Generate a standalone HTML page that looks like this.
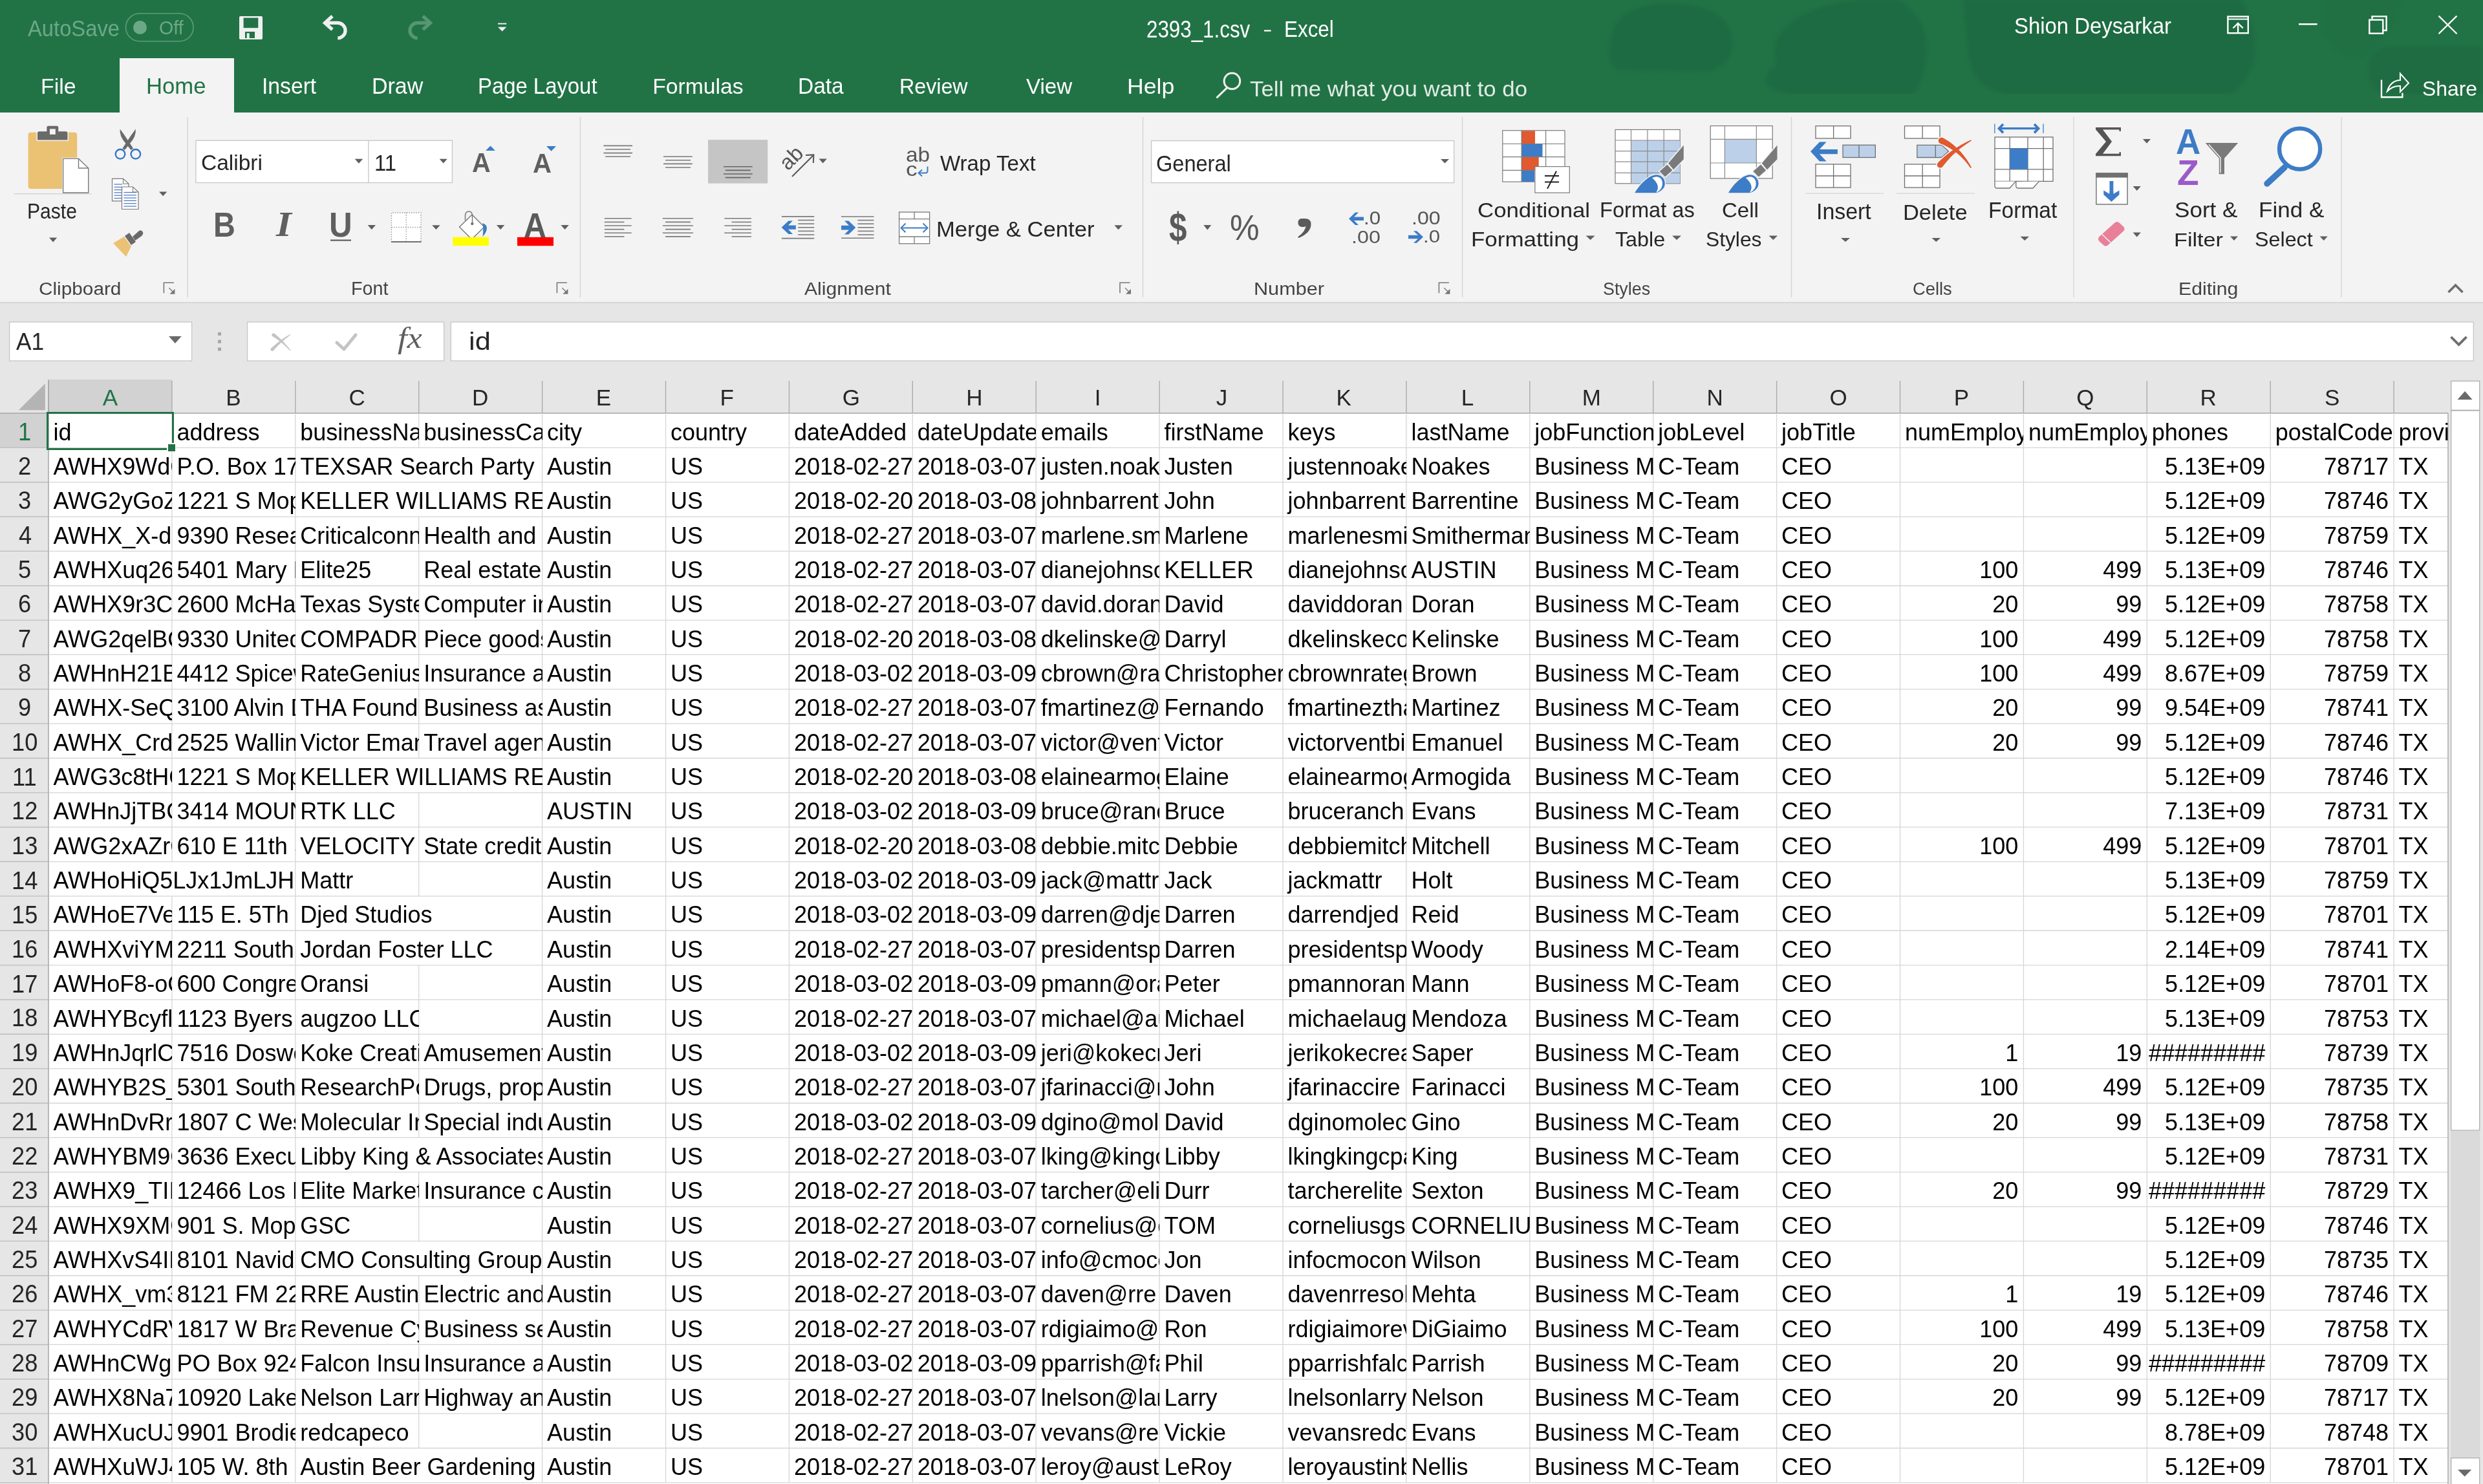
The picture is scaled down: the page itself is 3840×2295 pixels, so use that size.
<!DOCTYPE html>
<html><head><meta charset="utf-8"><style>
html,body{margin:0;padding:0;}
body{width:3840px;height:2295px;overflow:hidden;position:relative;background:#e6e6e6;font-family:'Liberation Sans', sans-serif;}
.t{position:absolute;white-space:nowrap;font-family:'Liberation Sans', sans-serif;}
.c{position:absolute;overflow:hidden;white-space:nowrap;font-size:36px;line-height:36px;color:#000;font-family:'Liberation Sans', sans-serif;}
svg{position:absolute;left:0;top:0;}
.rn{position:absolute;right:8px;}
.ln{position:absolute;left:6.5px;}
</style></head><body>
<svg width="3840" height="2295" viewBox="0 0 3840 2295">
<defs><filter id="blur" x="-50%" y="-50%" width="200%" height="200%"><feGaussianBlur stdDeviation="2.5"/></filter></defs>
<rect x="0.00" y="0.00" width="3840.00" height="174.00" fill="#217346" /><g filter="url(#blur)" fill="#1e663f" opacity="0.6"><path d="M2500,108 L2491,96 Q2486,62 2500,36 Q2520,6 2585,6 Q2665,8 2677,52 Q2686,96 2645,110 Z"/><path d="M2732,128 Q2729,110 2748,101 Q2736,70 2760,44 Q2792,10 2870,0 H2935 Q2980,28 2979,74 Q2978,122 2958,146 H2775 Q2738,142 2732,128 Z"/><path d="M3036,0 H3466 Q3490,40 3487,89 Q3470,140 3443,146 H3110 Q3050,140 3044,80 Q3040,40 3036,0 Z"/><path d="M3592,0 H3711 Q3700,60 3650,88 Q3610,90 3595,50 Z" opacity="0.35"/><path d="M3663,110 Q3663,71.5 3700,71.5 H3840 V146 H3700 Q3663,146 3663,110 Z" opacity="0.8"/></g><rect x="0.00" y="146.00" width="3840.00" height="28.00" fill="#217346" /><rect x="185.00" y="90.00" width="177.00" height="84.00" fill="#f3f3f3" /><rect x="0.00" y="174.00" width="3840.00" height="294.00" fill="#f3f3f3" /><rect x="0.00" y="467.00" width="3840.00" height="2.00" fill="#d6d6d6" /><rect x="0.00" y="469.00" width="3840.00" height="1826.00" fill="#e6e6e6" /><rect x="194.5" y="20.8" width="104.5" height="43" rx="21.5" fill="none" stroke="#5e9c7a" stroke-width="1.6"/><circle cx="216.5" cy="42.5" r="10.5" fill="#6da886"/><path d="M370,27 q0,-2 2,-2 h32 q2,0 2,2 v32 q0,2 -2,2 h-32 q-2,0 -2,-2 z" fill="#f0f0f0"/><rect x="376.60" y="27.60" width="22.70" height="15.60" fill="#217346" /><rect x="379.00" y="49.00" width="15.00" height="10.00" fill="#217346" /><rect x="381.70" y="51.30" width="4.00" height="7.70" fill="#f0f0f0" /><path d="M503,35.4 H522.3 A11.75,11.75 0 0 1 522.3,58.9" fill="none" stroke="#f0f0f0" stroke-width="5.2"/><polyline points="514,25 502.5,35.4 514,45.8" fill="none" stroke="#f0f0f0" stroke-width="5.2"/><g opacity="0.9"><path d="M665,35.4 H645.7 A11.75,11.75 0 0 0 645.7,58.9" fill="none" stroke="#5c9b78" stroke-width="5.2"/><polyline points="654,25 665.5,35.4 654,45.8" fill="none" stroke="#5c9b78" stroke-width="5.2"/></g><rect x="770.00" y="35.70" width="13.30" height="1.90" fill="#f0f0f0" /><polygon points="770.00,41.70 783.30,41.70 776.65,48.40" fill="#f0f0f0"/><rect x="1955.00" y="46.40" width="10.60" height="2.20" fill="#ffffff" /><rect x="3445.4" y="25.6" width="31.4" height="25.6" fill="none" stroke="#fff" stroke-width="2.4"/><line x1="3445.00" y1="29.60" x2="3477.00" y2="29.60" stroke="#fff" stroke-width="2" /><line x1="3461.10" y1="36.00" x2="3461.10" y2="52.00" stroke="#fff" stroke-width="2.4" /><polyline points="3453.5,43.5 3461.1,36 3468.7,43.5" fill="none" stroke="#fff" stroke-width="2.4"/><line x1="3555.00" y1="37.40" x2="3583.60" y2="37.40" stroke="#fff" stroke-width="2.5" /><path d="M3668.5,29.5 V25.4 H3690.6 V47 H3685.6" fill="none" stroke="#fff" stroke-width="2.4"/><rect x="3664.3" y="30.7" width="21" height="21" fill="none" stroke="#fff" stroke-width="2.4"/><line x1="3771.50" y1="24.60" x2="3799.50" y2="52.20" stroke="#fff" stroke-width="2.3" /><line x1="3799.50" y1="24.60" x2="3771.50" y2="52.20" stroke="#fff" stroke-width="2.3" /><path d="M3683,123.4 V150.2 H3715.4 V143.7" fill="none" stroke="#fff" stroke-width="2.4"/><path d="M3692,141 C3695,130 3703,124 3712,124 V113.8 L3725,128.4 L3712,142 V133 C3704,132.5 3697,136 3692,141 Z" fill="none" stroke="#fff" stroke-width="2.1" stroke-linejoin="miter"/><circle cx="1905.4" cy="125.4" r="12.3" fill="none" stroke="#f0f0ea" stroke-width="3"/><line x1="1897.20" y1="136.10" x2="1881.40" y2="151.30" stroke="#f0f0ea" stroke-width="3" /><rect x="289.30" y="181.00" width="1.40" height="279.00" fill="#d4d4d4" /><rect x="896.70" y="181.00" width="1.40" height="279.00" fill="#d4d4d4" /><rect x="1766.80" y="181.00" width="1.40" height="279.00" fill="#d4d4d4" /><rect x="2260.90" y="181.00" width="1.40" height="279.00" fill="#d4d4d4" /><rect x="2769.80" y="181.00" width="1.40" height="279.00" fill="#d4d4d4" /><rect x="3206.30" y="181.00" width="1.40" height="279.00" fill="#d4d4d4" /><rect x="3620.30" y="181.00" width="1.40" height="279.00" fill="#d4d4d4" /><path d="M253.4,453.3 V437.3 H268.9" fill="none" stroke="#777" stroke-width="1.6"/><line x1="261.4" y1="445.3" x2="266.9" y2="450.8" stroke="#777" stroke-width="1.3"/><polygon points="270.4,446.8 270.4,454.8 262.4,454.8" fill="#777"/><path d="M861.4,453.3 V437.3 H876.9" fill="none" stroke="#777" stroke-width="1.6"/><line x1="869.4" y1="445.3" x2="874.9" y2="450.8" stroke="#777" stroke-width="1.3"/><polygon points="878.4,446.8 878.4,454.8 870.4,454.8" fill="#777"/><path d="M1732.0,453.3 V437.3 H1747.5" fill="none" stroke="#777" stroke-width="1.6"/><line x1="1740.0" y1="445.3" x2="1745.5" y2="450.8" stroke="#777" stroke-width="1.3"/><polygon points="1749.0,446.8 1749.0,454.8 1741.0,454.8" fill="#777"/><path d="M2225.4,453.3 V437.3 H2240.9" fill="none" stroke="#777" stroke-width="1.6"/><line x1="2233.4" y1="445.3" x2="2238.9" y2="450.8" stroke="#777" stroke-width="1.3"/><polygon points="2242.4,446.8 2242.4,454.8 2234.4,454.8" fill="#777"/><polyline points="3786.5,452 3797.5,441 3808.5,452" fill="none" stroke="#6e6e6e" stroke-width="3.6"/><rect x="43.6" y="204.8" width="75.6" height="87.1" rx="4" fill="#ebc174"/><path d="M57.2,217.2 V206 Q57.2,202.5 60.7,202.5 H71.6 V197 Q71.6,194 74.6,194 H88 Q91,194 91,197 V202.5 H101.7 Q105.2,202.5 105.2,206 V217.2 Z" fill="#6a6a6a" stroke="#f3f3f3" stroke-width="1.5"/><rect x="77.00" y="199.40" width="8.80" height="8.50" fill="#f3f3f3" /><path d="M96,243.8 H122 L138.3,259.4 V299.5 H96 Z" fill="#f3f3f3"/><path d="M97.6,245.4 H121.5 L136.7,260 V298 H97.6 Z" fill="#fff" stroke="#7a7a7a" stroke-width="1.4"/><path d="M121.5,245.4 V260 H136.7" fill="none" stroke="#7a7a7a" stroke-width="1.4"/><rect x="21.50" y="299.00" width="120.10" height="1.40" fill="#d2d2d2" /><polygon points="76.00,367.50 88.20,367.50 82.10,374.50" fill="#5f5f5f"/><path d="M185.6,199.5 Q184.5,211 194.5,222 L202.5,232 L206,229.5 L199.5,219.5 Q192,208 185.6,199.5 Z" fill="#6a6a6a"/><path d="M209.8,199.5 Q210.9,211 200.9,222 L192.9,232 L189.4,229.5 L195.9,219.5 Q203.4,208 209.8,199.5 Z" fill="#6a6a6a"/><circle cx="186" cy="238.3" r="7.3" fill="none" stroke="#2e73c4" stroke-width="2.3"/><circle cx="209.8" cy="238.3" r="7.3" fill="none" stroke="#2e73c4" stroke-width="2.3"/><path d="M173.5,276.3 H190.5 L199.0,284.3 V310.8 H173.5 Z" fill="#fff" stroke="#7a7a7a" stroke-width="1.2"/><path d="M190.5,276.3 V284.3 H199.0" fill="none" stroke="#7a7a7a" stroke-width="1.1"/><path d="M188.5,289 H205.5 L214.0,297 V323.5 H188.5 Z" fill="#fff" stroke="#7a7a7a" stroke-width="1.2"/><path d="M205.5,289 V297 H214.0" fill="none" stroke="#7a7a7a" stroke-width="1.1"/><line x1="176.50" y1="285.00" x2="189.00" y2="285.00" stroke="#4a72c0" stroke-width="1.2" /><line x1="176.50" y1="289.30" x2="188.00" y2="289.30" stroke="#4a72c0" stroke-width="1.2" /><line x1="176.50" y1="293.60" x2="188.00" y2="293.60" stroke="#4a72c0" stroke-width="1.2" /><line x1="176.50" y1="297.90" x2="188.00" y2="297.90" stroke="#4a72c0" stroke-width="1.2" /><line x1="176.50" y1="302.20" x2="188.00" y2="302.20" stroke="#4a72c0" stroke-width="1.2" /><line x1="176.50" y1="306.50" x2="188.00" y2="306.50" stroke="#4a72c0" stroke-width="1.2" /><line x1="191.50" y1="297.50" x2="211.00" y2="297.50" stroke="#4a72c0" stroke-width="1.2" /><line x1="191.50" y1="301.80" x2="211.00" y2="301.80" stroke="#4a72c0" stroke-width="1.2" /><line x1="191.50" y1="306.10" x2="211.00" y2="306.10" stroke="#4a72c0" stroke-width="1.2" /><line x1="191.50" y1="310.40" x2="211.00" y2="310.40" stroke="#4a72c0" stroke-width="1.2" /><line x1="191.50" y1="314.70" x2="211.00" y2="314.70" stroke="#4a72c0" stroke-width="1.2" /><line x1="191.50" y1="319.00" x2="211.00" y2="319.00" stroke="#4a72c0" stroke-width="1.2" /><polygon points="246.00,296.50 258.30,296.50 252.15,303.20" fill="#5f5f5f"/><path d="M175,376 L192,366 L203,381 L195,397 Z" fill="#ebc174"/><path d="M193,365 L200,360 L210,374 L203,379 Z" fill="#6a6a6a"/><path d="M205,366 L215,357 Q219,355 221,359 Q222,362 219,365 L209,372 Z" fill="#6a6a6a"/><rect x="302.9" y="217.3" width="396.5" height="65.2" fill="#fff" stroke="#c6c6c6" stroke-width="1.3"/><rect x="569.20" y="217.30" width="1.30" height="65.20" fill="#c6c6c6" /><polygon points="548.70,245.80 561.20,245.80 554.95,252.80" fill="#5f5f5f"/><polygon points="679.60,245.80 691.80,245.80 685.70,252.60" fill="#5f5f5f"/><polygon points="751.00,233.00 765.90,233.00 758.45,225.60" fill="#3d7cc6"/><polygon points="845.00,226.00 860.00,226.00 852.50,233.70" fill="#3d7cc6"/><rect x="511.00" y="370.50" width="32.00" height="2.20" fill="#5f5f5f" /><polygon points="568.60,348.00 581.00,348.00 574.80,355.00" fill="#5f5f5f"/><rect x="605.5" y="329" width="45.5" height="45" fill="#fff"/><g stroke="#8a8a8a" stroke-width="1.3" stroke-dasharray="1.3,2.3" fill="none"><path d="M605.5,374 V329 H651 V374"/><path d="M628.2,329 V374"/><path d="M605.5,351.5 H651"/></g><rect x="605.00" y="373.00" width="46.50" height="2.00" fill="#707070" /><polygon points="668.20,348.20 680.60,348.20 674.40,355.00" fill="#5f5f5f"/><path d="M710.5,351 L730,332 L749,351 L729.5,370 Z" fill="#fff" stroke="#7a7a7a" stroke-width="1.5" stroke-linejoin="round"/><path d="M719.5,341 V334 Q719.5,327 725,327 Q730.5,327 730.5,334 V345" fill="none" stroke="#7a7a7a" stroke-width="1.5"/><circle cx="730.3" cy="346" r="2.3" fill="#7a7a7a"/><path d="M746.3,344.9 Q754.5,347.5 752.6,355.5 Q751,361.5 746.3,365.8 Q748.2,355 746.3,344.9 Z" fill="#3d7cc6"/><rect x="700.20" y="366.70" width="55.80" height="13.30" fill="#ffff00" /><polygon points="767.90,348.00 780.30,348.00 774.10,355.00" fill="#5f5f5f"/><rect x="800.00" y="366.80" width="56.00" height="13.40" fill="#ff0000" /><polygon points="867.40,348.00 879.80,348.00 873.60,355.00" fill="#5f5f5f"/><line x1="933.40" y1="225.40" x2="978.10" y2="225.40" stroke="#7a7a7a" stroke-width="1.6" /><line x1="936.30" y1="231.00" x2="975.00" y2="231.00" stroke="#7a7a7a" stroke-width="1.6" /><line x1="933.40" y1="236.60" x2="978.10" y2="236.60" stroke="#7a7a7a" stroke-width="1.6" /><line x1="936.30" y1="242.20" x2="975.00" y2="242.20" stroke="#7a7a7a" stroke-width="1.6" /><line x1="1026.00" y1="242.20" x2="1070.80" y2="242.20" stroke="#7a7a7a" stroke-width="1.6" /><line x1="1029.00" y1="247.80" x2="1068.00" y2="247.80" stroke="#7a7a7a" stroke-width="1.6" /><line x1="1026.00" y1="253.40" x2="1070.80" y2="253.40" stroke="#7a7a7a" stroke-width="1.6" /><line x1="1029.00" y1="259.00" x2="1068.00" y2="259.00" stroke="#7a7a7a" stroke-width="1.6" /><rect x="1095.00" y="216.20" width="92.20" height="67.40" fill="#c5c5c5" /><line x1="1119.00" y1="257.80" x2="1163.70" y2="257.80" stroke="#666" stroke-width="1.6" /><line x1="1121.80" y1="263.40" x2="1160.80" y2="263.40" stroke="#666" stroke-width="1.6" /><line x1="1119.00" y1="269.00" x2="1163.70" y2="269.00" stroke="#666" stroke-width="1.6" /><line x1="1121.80" y1="274.60" x2="1160.80" y2="274.60" stroke="#666" stroke-width="1.6" /><line x1="1225.00" y1="273.00" x2="1257.00" y2="241.00" stroke="#555" stroke-width="2" /><polyline points="1246,240 1258.4,239.4 1257.8,252" fill="none" stroke="#555" stroke-width="2"/><polygon points="1266.50,245.60 1278.80,245.60 1272.65,252.50" fill="#5f5f5f"/><path d="M1434.5,257.5 V264 Q1434.5,267.5 1431,267.5 H1421" fill="none" stroke="#3d7cc6" stroke-width="2"/><polyline points="1426,262.5 1420.5,267.5 1426,272.5" fill="none" stroke="#3d7cc6" stroke-width="2"/><line x1="934.80" y1="337.80" x2="976.60" y2="337.80" stroke="#7a7a7a" stroke-width="1.6" /><line x1="1024.90" y1="337.80" x2="1072.00" y2="337.80" stroke="#7a7a7a" stroke-width="1.6" /><line x1="1120.30" y1="337.80" x2="1161.90" y2="337.80" stroke="#7a7a7a" stroke-width="1.6" /><line x1="934.80" y1="343.42" x2="965.40" y2="343.42" stroke="#7a7a7a" stroke-width="1.6" /><line x1="1029.00" y1="343.42" x2="1068.00" y2="343.42" stroke="#7a7a7a" stroke-width="1.6" /><line x1="1131.60" y1="343.42" x2="1161.90" y2="343.42" stroke="#7a7a7a" stroke-width="1.6" /><line x1="934.80" y1="349.04" x2="976.60" y2="349.04" stroke="#7a7a7a" stroke-width="1.6" /><line x1="1024.90" y1="349.04" x2="1072.00" y2="349.04" stroke="#7a7a7a" stroke-width="1.6" /><line x1="1120.30" y1="349.04" x2="1161.90" y2="349.04" stroke="#7a7a7a" stroke-width="1.6" /><line x1="934.80" y1="354.66" x2="965.40" y2="354.66" stroke="#7a7a7a" stroke-width="1.6" /><line x1="1029.00" y1="354.66" x2="1068.00" y2="354.66" stroke="#7a7a7a" stroke-width="1.6" /><line x1="1131.60" y1="354.66" x2="1161.90" y2="354.66" stroke="#7a7a7a" stroke-width="1.6" /><line x1="934.80" y1="360.28" x2="976.60" y2="360.28" stroke="#7a7a7a" stroke-width="1.6" /><line x1="1024.90" y1="360.28" x2="1072.00" y2="360.28" stroke="#7a7a7a" stroke-width="1.6" /><line x1="1120.30" y1="360.28" x2="1161.90" y2="360.28" stroke="#7a7a7a" stroke-width="1.6" /><line x1="934.80" y1="365.90" x2="965.40" y2="365.90" stroke="#7a7a7a" stroke-width="1.6" /><line x1="1029.00" y1="365.90" x2="1068.00" y2="365.90" stroke="#7a7a7a" stroke-width="1.6" /><line x1="1131.60" y1="365.90" x2="1161.90" y2="365.90" stroke="#7a7a7a" stroke-width="1.6" /><line x1="1208.90" y1="334.90" x2="1259.20" y2="334.90" stroke="#7a7a7a" stroke-width="1.6" /><line x1="1208.90" y1="368.60" x2="1259.20" y2="368.60" stroke="#7a7a7a" stroke-width="1.6" /><line x1="1234.20" y1="340.50" x2="1259.20" y2="340.50" stroke="#7a7a7a" stroke-width="1.6" /><line x1="1234.20" y1="346.13" x2="1259.20" y2="346.13" stroke="#7a7a7a" stroke-width="1.6" /><line x1="1234.20" y1="351.76" x2="1259.20" y2="351.76" stroke="#7a7a7a" stroke-width="1.6" /><line x1="1234.20" y1="357.39" x2="1259.20" y2="357.39" stroke="#7a7a7a" stroke-width="1.6" /><line x1="1234.20" y1="363.02" x2="1259.20" y2="363.02" stroke="#7a7a7a" stroke-width="1.6" /><polygon points="1208.6,351.7 1219.5,341.5 1226,341.5 1219,348.6 1230.8,348.6 1230.8,354.8 1219,354.8 1226,362 1219.5,362" fill="#3d7cc6"/><line x1="1301.00" y1="335.00" x2="1351.50" y2="335.00" stroke="#7a7a7a" stroke-width="1.6" /><line x1="1301.00" y1="368.30" x2="1351.50" y2="368.30" stroke="#7a7a7a" stroke-width="1.6" /><line x1="1326.50" y1="340.60" x2="1351.50" y2="340.60" stroke="#7a7a7a" stroke-width="1.6" /><line x1="1326.50" y1="346.20" x2="1351.50" y2="346.20" stroke="#7a7a7a" stroke-width="1.6" /><line x1="1326.50" y1="351.80" x2="1351.50" y2="351.80" stroke="#7a7a7a" stroke-width="1.6" /><line x1="1326.50" y1="357.40" x2="1351.50" y2="357.40" stroke="#7a7a7a" stroke-width="1.6" /><line x1="1326.50" y1="363.00" x2="1351.50" y2="363.00" stroke="#7a7a7a" stroke-width="1.6" /><polygon points="1323.3,352 1312.4,341.5 1306,341.5 1313,348.7 1301,348.7 1301,355.5 1313,355.5 1306,362.6 1312.4,362.6" fill="#3d7cc6"/><rect x="1390.6" y="328" width="47" height="48.8" fill="#fff" stroke="#7a7a7a" stroke-width="1.3"/><line x1="1390.60" y1="338.70" x2="1437.60" y2="338.70" stroke="#7a7a7a" stroke-width="1.3" /><line x1="1390.60" y1="366.00" x2="1437.60" y2="366.00" stroke="#7a7a7a" stroke-width="1.3" /><line x1="1414.00" y1="328.00" x2="1414.00" y2="338.70" stroke="#7a7a7a" stroke-width="1.3" /><line x1="1414.00" y1="366.00" x2="1414.00" y2="376.80" stroke="#7a7a7a" stroke-width="1.3" /><line x1="1394.00" y1="352.40" x2="1434.00" y2="352.40" stroke="#3d7cc6" stroke-width="2" /><polyline points="1400.5,345.5 1393.5,352.4 1400.5,359.3" fill="none" stroke="#3d7cc6" stroke-width="2"/><polyline points="1427.5,345.5 1434.5,352.4 1427.5,359.3" fill="none" stroke="#3d7cc6" stroke-width="2"/><polygon points="1723.30,348.30 1735.90,348.30 1729.60,355.20" fill="#5f5f5f"/><rect x="1780.6" y="217.6" width="468" height="65" fill="#fff" stroke="#c6c6c6" stroke-width="1.3"/><polygon points="2228.00,246.00 2241.00,246.00 2234.50,252.50" fill="#5f5f5f"/><polygon points="1861.30,348.00 1873.30,348.00 1867.30,355.40" fill="#5f5f5f"/><path d="M2013,338 Q2007.5,338 2007.5,344.5 Q2007.5,351 2014,351 Q2019,351 2019.5,349 Q2019,358 2007,366.5 L2008.5,368 Q2027.5,360 2027.5,346.5 Q2027.5,338 2018,338 Z" fill="#5a5a5a"/><polygon points="2086,338.2 2096,328.5 2101,328.5 2094,335.6 2109,335.6 2109,341 2094,341 2101,348 2096,348" fill="#3d7cc6"/><polygon points="2201,366.5 2191,357.2 2186,357.2 2193,363.8 2178,363.8 2178,369.2 2193,369.2 2186,375.7 2191,375.7" fill="#3d7cc6"/><rect x="2323.8" y="201.8" width="96.2" height="79.3" fill="#fff" stroke="#7a7a7a" stroke-width="1.2"/><rect x="2353.10" y="202.30" width="20.90" height="20.20" fill="#e0592f" /><rect x="2353.10" y="222.50" width="32.40" height="20.10" fill="#3d7cc6" /><rect x="2353.10" y="242.60" width="26.60" height="20.80" fill="#e0592f" /><rect x="2353.10" y="263.40" width="19.90" height="17.60" fill="#3d7cc6" /><line x1="2323.80" y1="222.50" x2="2420.00" y2="222.50" stroke="#7a7a7a" stroke-width="1.2" /><line x1="2323.80" y1="242.60" x2="2420.00" y2="242.60" stroke="#7a7a7a" stroke-width="1.2" /><line x1="2323.80" y1="263.40" x2="2420.00" y2="263.40" stroke="#7a7a7a" stroke-width="1.2" /><line x1="2353.10" y1="201.80" x2="2353.10" y2="281.10" stroke="#7a7a7a" stroke-width="1.2" /><line x1="2390.60" y1="201.80" x2="2390.60" y2="281.10" stroke="#7a7a7a" stroke-width="1.2" /><rect x="2373.9" y="257.6" width="53.4" height="40.5" fill="#fff" stroke="#7a7a7a" stroke-width="1.2"/><line x1="2389.00" y1="272.00" x2="2411.00" y2="272.00" stroke="#222" stroke-width="2" /><line x1="2389.00" y1="281.50" x2="2411.00" y2="281.50" stroke="#222" stroke-width="2" /><line x1="2407.00" y1="264.70" x2="2393.00" y2="291.90" stroke="#222" stroke-width="2" /><polygon points="2452.60,364.60 2466.60,364.60 2459.60,371.00" fill="#5f5f5f"/><rect x="2498" y="200.5" width="100.1" height="83.3" fill="#fff" stroke="#7a7a7a" stroke-width="1.2"/><rect x="2522.50" y="217.00" width="75.50" height="66.30" fill="#bcd1e9" /><line x1="2498.00" y1="217.00" x2="2598.10" y2="217.00" stroke="#8a8a8a" stroke-width="1.2" /><line x1="2498.00" y1="233.60" x2="2598.10" y2="233.60" stroke="#8a8a8a" stroke-width="1.2" /><line x1="2498.00" y1="250.20" x2="2598.10" y2="250.20" stroke="#8a8a8a" stroke-width="1.2" /><line x1="2498.00" y1="267.40" x2="2598.10" y2="267.40" stroke="#8a8a8a" stroke-width="1.2" /><line x1="2522.50" y1="200.50" x2="2522.50" y2="283.80" stroke="#8a8a8a" stroke-width="1.2" /><line x1="2547.90" y1="200.50" x2="2547.90" y2="283.80" stroke="#8a8a8a" stroke-width="1.2" /><line x1="2573.20" y1="200.50" x2="2573.20" y2="283.80" stroke="#8a8a8a" stroke-width="1.2" /><g transform="translate(0,0)"><path d="M2579,252.5 L2604.6,222.5 L2604.6,246.5 L2588,263.5 Z" fill="#7a7a7a" stroke="#f3f3f3" stroke-width="1.6"/><path d="M2565.5,265 L2578.5,253.5 L2587.5,263.5 L2575,274.5 Z" fill="#7a7a7a" stroke="#f3f3f3" stroke-width="1.6"/><path d="M2527,299 Q2536,283 2550,273.5 Q2566,264 2574,277 Q2580,292 2562,299 Z" fill="#3d7cc6" stroke="#f3f3f3" stroke-width="1.4"/><path d="M2555,275 Q2567,270 2570.5,280 Q2573,292 2561,298 Q2569,287 2555,275 Z" fill="#fff"/></g><polygon points="2586.00,364.60 2600.00,364.60 2593.00,371.00" fill="#5f5f5f"/><rect x="2645.2" y="194.6" width="96" height="81.3" fill="#fff" stroke="#7a7a7a" stroke-width="1.2"/><rect x="2667.40" y="215.40" width="48.90" height="36.60" fill="#bcd1e9" /><line x1="2645.20" y1="215.40" x2="2741.20" y2="215.40" stroke="#8a8a8a" stroke-width="1.2" /><line x1="2645.20" y1="252.00" x2="2741.20" y2="252.00" stroke="#8a8a8a" stroke-width="1.2" /><line x1="2667.40" y1="194.60" x2="2667.40" y2="275.90" stroke="#8a8a8a" stroke-width="1.2" /><line x1="2716.30" y1="194.60" x2="2716.30" y2="275.90" stroke="#8a8a8a" stroke-width="1.2" /><g transform="translate(144.7,0)"><path d="M2579,252.5 L2604.6,222.5 L2604.6,246.5 L2588,263.5 Z" fill="#7a7a7a" stroke="#f3f3f3" stroke-width="1.6"/><path d="M2565.5,265 L2578.5,253.5 L2587.5,263.5 L2575,274.5 Z" fill="#7a7a7a" stroke="#f3f3f3" stroke-width="1.6"/><path d="M2527,299 Q2536,283 2550,273.5 Q2566,264 2574,277 Q2580,292 2562,299 Z" fill="#3d7cc6" stroke="#f3f3f3" stroke-width="1.4"/><path d="M2555,275 Q2567,270 2570.5,280 Q2573,292 2561,298 Q2569,287 2555,275 Z" fill="#fff"/></g><polygon points="2735.60,364.60 2749.00,364.60 2742.30,371.00" fill="#5f5f5f"/><rect x="2808" y="194.8" width="54.00" height="19.20" fill="#fff" stroke="#6f6f6f" stroke-width="1.3"/><line x1="2835.60" y1="194.80" x2="2835.60" y2="214.00" stroke="#6f6f6f" stroke-width="1.3" /><rect x="2850" y="224.3" width="50.30" height="19.20" fill="#bcd1e9" stroke="#6f6f6f" stroke-width="1.3"/><line x1="2875.00" y1="224.30" x2="2875.00" y2="243.50" stroke="#6f6f6f" stroke-width="1.3" /><polygon points="2800,234.2 2814,219.6 2824.6,219.6 2814,231 2841.9,231 2841.9,238.2 2814,238.2 2824.6,249.5 2814,249.5" fill="#3d7cc6"/><rect x="2808" y="254" width="54.00" height="36.00" fill="#fff" stroke="#6f6f6f" stroke-width="1.3"/><line x1="2808.00" y1="272.00" x2="2862.00" y2="272.00" stroke="#6f6f6f" stroke-width="1.3" /><line x1="2835.60" y1="254.00" x2="2835.60" y2="290.00" stroke="#6f6f6f" stroke-width="1.3" /><rect x="2792.60" y="298.50" width="120.40" height="1.30" fill="#d6d6d6" /><polygon points="2847.00,368.00 2861.00,368.00 2854.00,374.00" fill="#5f5f5f"/><rect x="2945.5" y="194.8" width="54.50" height="19.20" fill="#fff" stroke="#6f6f6f" stroke-width="1.3"/><line x1="2973.20" y1="194.80" x2="2973.20" y2="214.00" stroke="#6f6f6f" stroke-width="1.3" /><path d="M2964.8,224.3 H3003 L3013.5,233.9 L3003,243.5 H2964.8 Z" fill="#bcd1e9" stroke="#6f6f6f" stroke-width="1.3"/><line x1="2993.30" y1="224.30" x2="2993.30" y2="243.50" stroke="#6f6f6f" stroke-width="1.3" /><rect x="2945.5" y="254" width="54.50" height="36.00" fill="#fff" stroke="#6f6f6f" stroke-width="1.3"/><line x1="2945.50" y1="272.00" x2="3000.00" y2="272.00" stroke="#6f6f6f" stroke-width="1.3" /><line x1="2973.20" y1="254.00" x2="2973.20" y2="290.00" stroke="#6f6f6f" stroke-width="1.3" /><path d="M3000.53,221.82 L3002.77,222.69 L3004.98,223.62 L3007.17,224.60 L3009.33,225.65 L3011.48,226.76 L3013.60,227.92 L3015.69,229.15 L3017.76,230.44 L3019.81,231.80 L3021.84,233.21 L3023.84,234.69 L3025.82,236.23 L3027.77,237.83 L3029.70,239.50 L3031.61,241.23 L3033.48,243.03 L3035.34,244.88 L3037.16,246.81 L3038.96,248.80 L3040.74,250.85 L3042.49,252.96 L3044.21,255.14 L3045.90,257.39 L3047.56,259.70 L3048.84,258.90 L3047.44,256.39 L3046.00,253.92 L3044.52,251.51 L3043.01,249.15 L3041.46,246.85 L3039.87,244.59 L3038.25,242.39 L3036.58,240.24 L3034.88,238.14 L3033.14,236.10 L3031.35,234.11 L3029.53,232.17 L3027.67,230.29 L3025.76,228.46 L3023.82,226.68 L3021.84,224.96 L3019.81,223.29 L3017.74,221.68 L3015.63,220.12 L3013.48,218.62 L3011.29,217.17 L3009.06,215.78 L3006.78,214.45 L3004.47,213.18 A4.75,4.75 0 0 0 3000.53,221.82 Z" fill="#f3f3f3" stroke="#f3f3f3" stroke-width="3" stroke-linejoin="round"/><path d="M3000.53,221.82 L3002.77,222.69 L3004.98,223.62 L3007.17,224.60 L3009.33,225.65 L3011.48,226.76 L3013.60,227.92 L3015.69,229.15 L3017.76,230.44 L3019.81,231.80 L3021.84,233.21 L3023.84,234.69 L3025.82,236.23 L3027.77,237.83 L3029.70,239.50 L3031.61,241.23 L3033.48,243.03 L3035.34,244.88 L3037.16,246.81 L3038.96,248.80 L3040.74,250.85 L3042.49,252.96 L3044.21,255.14 L3045.90,257.39 L3047.56,259.70 L3048.84,258.90 L3047.44,256.39 L3046.00,253.92 L3044.52,251.51 L3043.01,249.15 L3041.46,246.85 L3039.87,244.59 L3038.25,242.39 L3036.58,240.24 L3034.88,238.14 L3033.14,236.10 L3031.35,234.11 L3029.53,232.17 L3027.67,230.29 L3025.76,228.46 L3023.82,226.68 L3021.84,224.96 L3019.81,223.29 L3017.74,221.68 L3015.63,220.12 L3013.48,218.62 L3011.29,217.17 L3009.06,215.78 L3006.78,214.45 L3004.47,213.18 A4.75,4.75 0 0 0 3000.53,221.82 Z" fill="#e0592f"/><path d="M3004.12,258.07 L3005.59,256.12 L3007.08,254.19 L3008.62,252.28 L3010.18,250.40 L3011.79,248.54 L3013.42,246.70 L3015.09,244.88 L3016.80,243.09 L3018.54,241.32 L3020.32,239.58 L3022.13,237.86 L3023.98,236.16 L3025.86,234.48 L3027.78,232.83 L3029.74,231.21 L3031.73,229.60 L3033.76,228.02 L3035.82,226.47 L3037.92,224.94 L3040.05,223.44 L3042.22,221.96 L3044.43,220.50 L3046.67,219.07 L3048.95,217.66 L3048.25,216.34 L3045.79,217.46 L3043.37,218.61 L3040.96,219.79 L3038.59,221.01 L3036.24,222.25 L3033.92,223.53 L3031.63,224.84 L3029.36,226.17 L3027.12,227.54 L3024.91,228.95 L3022.73,230.38 L3020.57,231.84 L3018.44,233.34 L3016.34,234.87 L3014.27,236.43 L3012.22,238.02 L3010.20,239.64 L3008.22,241.30 L3006.25,242.99 L3004.32,244.71 L3002.42,246.47 L3000.54,248.25 L2998.69,250.08 L2996.88,251.93 A4.75,4.75 0 0 0 3004.12,258.07 Z" fill="#f3f3f3" stroke="#f3f3f3" stroke-width="3" stroke-linejoin="round"/><path d="M3004.12,258.07 L3005.59,256.12 L3007.08,254.19 L3008.62,252.28 L3010.18,250.40 L3011.79,248.54 L3013.42,246.70 L3015.09,244.88 L3016.80,243.09 L3018.54,241.32 L3020.32,239.58 L3022.13,237.86 L3023.98,236.16 L3025.86,234.48 L3027.78,232.83 L3029.74,231.21 L3031.73,229.60 L3033.76,228.02 L3035.82,226.47 L3037.92,224.94 L3040.05,223.44 L3042.22,221.96 L3044.43,220.50 L3046.67,219.07 L3048.95,217.66 L3048.25,216.34 L3045.79,217.46 L3043.37,218.61 L3040.96,219.79 L3038.59,221.01 L3036.24,222.25 L3033.92,223.53 L3031.63,224.84 L3029.36,226.17 L3027.12,227.54 L3024.91,228.95 L3022.73,230.38 L3020.57,231.84 L3018.44,233.34 L3016.34,234.87 L3014.27,236.43 L3012.22,238.02 L3010.20,239.64 L3008.22,241.30 L3006.25,242.99 L3004.32,244.71 L3002.42,246.47 L3000.54,248.25 L2998.69,250.08 L2996.88,251.93 A4.75,4.75 0 0 0 3004.12,258.07 Z" fill="#e0592f"/><path d="M3000.53,221.82 L3002.77,222.69 L3004.98,223.62 L3007.17,224.60 L3009.33,225.65 L3011.48,226.76 L3013.60,227.92 L3015.69,229.15 L3017.76,230.44 L3019.81,231.80 L3021.84,233.21 L3023.84,234.69 L3025.82,236.23 L3027.77,237.83 L3029.70,239.50 L3031.61,241.23 L3033.48,243.03 L3035.34,244.88 L3037.16,246.81 L3038.96,248.80 L3040.74,250.85 L3042.49,252.96 L3044.21,255.14 L3045.90,257.39 L3047.56,259.70 L3048.84,258.90 L3047.44,256.39 L3046.00,253.92 L3044.52,251.51 L3043.01,249.15 L3041.46,246.85 L3039.87,244.59 L3038.25,242.39 L3036.58,240.24 L3034.88,238.14 L3033.14,236.10 L3031.35,234.11 L3029.53,232.17 L3027.67,230.29 L3025.76,228.46 L3023.82,226.68 L3021.84,224.96 L3019.81,223.29 L3017.74,221.68 L3015.63,220.12 L3013.48,218.62 L3011.29,217.17 L3009.06,215.78 L3006.78,214.45 L3004.47,213.18 A4.75,4.75 0 0 0 3000.53,221.82 Z" fill="#e0592f"/><rect x="2933.00" y="298.50" width="121.00" height="1.30" fill="#d6d6d6" /><polygon points="2987.50,368.00 3001.00,368.00 2994.25,374.00" fill="#5f5f5f"/><line x1="3084.80" y1="191.40" x2="3084.80" y2="206.00" stroke="#3d7cc6" stroke-width="1.3" /><line x1="3160.00" y1="191.40" x2="3160.00" y2="206.00" stroke="#3d7cc6" stroke-width="1.3" /><line x1="3092.00" y1="198.70" x2="3152.00" y2="198.70" stroke="#3d7cc6" stroke-width="3.2" /><polyline points="3098,192 3091.5,198.7 3098,205.4" fill="none" stroke="#3d7cc6" stroke-width="3.8"/><polyline points="3146,192 3152.5,198.7 3146,205.4" fill="none" stroke="#3d7cc6" stroke-width="3.8"/><rect x="3085" y="212" width="90.00" height="68.40" fill="#fff" stroke="#6f6f6f" stroke-width="1.3"/><line x1="3085.00" y1="229.60" x2="3175.00" y2="229.60" stroke="#6f6f6f" stroke-width="1.3" /><line x1="3085.00" y1="261.80" x2="3175.00" y2="261.80" stroke="#6f6f6f" stroke-width="1.3" /><line x1="3108.20" y1="212.00" x2="3108.20" y2="280.40" stroke="#6f6f6f" stroke-width="1.3" /><line x1="3136.00" y1="212.00" x2="3136.00" y2="280.40" stroke="#6f6f6f" stroke-width="1.3" /><line x1="3160.20" y1="212.00" x2="3160.20" y2="280.40" stroke="#6f6f6f" stroke-width="1.3" /><rect x="3108.20" y="229.60" width="27.80" height="32.20" fill="#3d7cc6" /><path d="M3085,280.4 V288 Q3085,291 3088.5,291 H3108 L3117.2,280.6" fill="#fff" stroke="#6f6f6f" stroke-width="1.3"/><path d="M3117.8,281 V288 Q3118,291 3121.5,291 H3144 L3153.5,280.4" fill="#fff" stroke="#6f6f6f" stroke-width="1.3"/><polygon points="3124.50,365.70 3138.00,365.70 3131.25,372.00" fill="#5f5f5f"/><path d="M3241,197 H3280 V203 H3277.5 V200.5 H3252 L3266,219 L3252,237.8 H3277.5 V235.2 H3280 V241.3 H3241 V238 L3257,219 L3241,200.3 Z" fill="#555"/><polygon points="3313.90,214.90 3326.10,214.90 3320.00,221.70" fill="#5f5f5f"/><rect x="3241.9" y="268" width="48.2" height="48" fill="#fff" stroke="#6f6f6f" stroke-width="1.4"/><rect x="3241.20" y="267.30" width="49.60" height="7.30" fill="#707070" /><rect x="3262.50" y="280.00" width="5.80" height="20.00" fill="#3d7cc6" /><polygon points="3253.3,294.5 3262.5,300 3262.5,296 3268.3,296 3268.3,300 3277.5,294.5 3277.5,301 3265.4,312 3253.3,301" fill="#3d7cc6"/><polygon points="3298.60,287.90 3310.80,287.90 3304.70,294.90" fill="#5f5f5f"/><path d="M3246.5,366 L3270.5,344.5 Q3274,341.5 3277.5,344.5 L3284,350.5 Q3287,354 3284,357.5 L3260,379 Q3256.5,382 3253,379 L3246.5,373 Q3243.5,369.5 3246.5,366 Z" fill="#e8809a"/><line x1="3250.50" y1="362.00" x2="3264.00" y2="375.00" stroke="#f3f3f3" stroke-width="1.5" /><polygon points="3298.60,359.50 3310.80,359.50 3304.70,366.50" fill="#5f5f5f"/><path d="M3410.7,221 H3461.2 L3440,244.7 V269.2 H3431.8 V244.7 Z" fill="#7a7a7a"/><path d="M3416,223.5 L3434,244 V267" fill="none" stroke="#fff" stroke-width="1.3"/><polygon points="3449.00,365.40 3461.00,365.40 3455.00,372.00" fill="#5f5f5f"/><circle cx="3556.6" cy="230.2" r="31.6" fill="#fff" stroke="#3d7cc6" stroke-width="6.4"/><line x1="3533.00" y1="259.00" x2="3506.00" y2="284.00" stroke="#3d7cc6" stroke-width="9.5" stroke-linecap="round"/><polygon points="3587.60,365.40 3599.80,365.40 3593.70,372.00" fill="#5f5f5f"/><rect x="14.6" y="498" width="282" height="60" fill="#fff" stroke="#c6c6c6" stroke-width="1.3"/><polygon points="261.00,520.00 280.70,520.00 270.85,531.00" fill="#6a6a6a"/><rect x="337.00" y="513.90" width="5.00" height="5.00" fill="#a6a6a6" /><rect x="337.00" y="525.70" width="5.00" height="5.00" fill="#a6a6a6" /><rect x="337.00" y="537.50" width="5.00" height="5.00" fill="#a6a6a6" /><rect x="382.6" y="498" width="304" height="60" fill="#fff" stroke="#c6c6c6" stroke-width="1.3"/><path d="M421.52,520.14 L422.62,520.81 L423.73,521.51 L424.84,522.22 L425.95,522.96 L427.06,523.72 L428.18,524.51 L429.30,525.31 L430.42,526.14 L431.54,526.99 L432.66,527.86 L433.79,528.76 L434.91,529.68 L436.04,530.61 L437.17,531.57 L438.30,532.56 L439.44,533.56 L440.57,534.59 L441.71,535.64 L442.84,536.71 L443.98,537.80 L445.12,538.92 L446.26,540.05 L447.40,541.21 L448.55,542.39 L449.45,541.61 L448.43,540.31 L447.40,539.03 L446.38,537.77 L445.35,536.53 L444.32,535.31 L443.29,534.11 L442.26,532.93 L441.23,531.77 L440.20,530.63 L439.16,529.51 L438.12,528.41 L437.09,527.32 L436.05,526.26 L435.00,525.22 L433.96,524.19 L432.92,523.19 L431.87,522.21 L430.82,521.24 L429.77,520.30 L428.72,519.37 L427.66,518.46 L426.60,517.58 L425.54,516.71 L424.48,515.86 A2.60,2.60 0 0 0 421.52,520.14 Z" fill="#c4c4c4"/><path d="M422.87,542.30 L423.88,541.14 L424.90,540.00 L425.93,538.86 L426.96,537.74 L428.00,536.64 L429.05,535.54 L430.11,534.46 L431.17,533.39 L432.25,532.33 L433.33,531.29 L434.42,530.26 L435.52,529.24 L436.62,528.23 L437.73,527.24 L438.86,526.26 L439.99,525.29 L441.12,524.33 L442.27,523.39 L443.42,522.46 L444.59,521.54 L445.76,520.64 L446.94,519.75 L448.13,518.87 L449.32,518.01 L448.68,516.99 L447.38,517.73 L446.09,518.47 L444.80,519.23 L443.52,520.01 L442.25,520.80 L440.98,521.61 L439.72,522.43 L438.46,523.27 L437.21,524.12 L435.96,524.99 L434.72,525.87 L433.48,526.76 L432.26,527.68 L431.03,528.60 L429.81,529.54 L428.60,530.50 L427.40,531.47 L426.20,532.46 L425.00,533.46 L423.82,534.48 L422.64,535.51 L421.46,536.56 L420.29,537.62 L419.13,538.70 A2.60,2.60 0 0 0 422.87,542.30 Z" fill="#c4c4c4"/><polyline points="521,530 532,540 550,518" fill="none" stroke="#c4c4c4" stroke-width="5" stroke-linejoin="round" stroke-linecap="round"/><rect x="697.3" y="498" width="3128" height="60" fill="#fff" stroke="#c6c6c6" stroke-width="1.3"/><polyline points="3790.5,521 3802.5,533 3814.5,521" fill="none" stroke="#6e6e6e" stroke-width="3.8"/><rect x="75.00" y="639.00" width="3711.00" height="1656.00" fill="#ffffff" /><rect x="75.00" y="587.00" width="190.90" height="52.00" fill="#d2d2d2" /><rect x="0.00" y="639.00" width="75.00" height="53.35" fill="#d2d2d2" /><polygon points="28.8,634.2 69.8,634.2 69.8,593.2" fill="#b4b4b4"/><line x1="75.00" y1="589.00" x2="75.00" y2="639.00" stroke="#ababab" stroke-width="1.4" /><line x1="265.90" y1="589.00" x2="265.90" y2="639.00" stroke="#ababab" stroke-width="1.4" /><line x1="456.80" y1="589.00" x2="456.80" y2="639.00" stroke="#ababab" stroke-width="1.4" /><line x1="647.70" y1="589.00" x2="647.70" y2="639.00" stroke="#ababab" stroke-width="1.4" /><line x1="838.60" y1="589.00" x2="838.60" y2="639.00" stroke="#ababab" stroke-width="1.4" /><line x1="1029.50" y1="589.00" x2="1029.50" y2="639.00" stroke="#ababab" stroke-width="1.4" /><line x1="1220.40" y1="589.00" x2="1220.40" y2="639.00" stroke="#ababab" stroke-width="1.4" /><line x1="1411.30" y1="589.00" x2="1411.30" y2="639.00" stroke="#ababab" stroke-width="1.4" /><line x1="1602.20" y1="589.00" x2="1602.20" y2="639.00" stroke="#ababab" stroke-width="1.4" /><line x1="1793.10" y1="589.00" x2="1793.10" y2="639.00" stroke="#ababab" stroke-width="1.4" /><line x1="1984.00" y1="589.00" x2="1984.00" y2="639.00" stroke="#ababab" stroke-width="1.4" /><line x1="2174.90" y1="589.00" x2="2174.90" y2="639.00" stroke="#ababab" stroke-width="1.4" /><line x1="2365.80" y1="589.00" x2="2365.80" y2="639.00" stroke="#ababab" stroke-width="1.4" /><line x1="2556.70" y1="589.00" x2="2556.70" y2="639.00" stroke="#ababab" stroke-width="1.4" /><line x1="2747.60" y1="589.00" x2="2747.60" y2="639.00" stroke="#ababab" stroke-width="1.4" /><line x1="2938.50" y1="589.00" x2="2938.50" y2="639.00" stroke="#ababab" stroke-width="1.4" /><line x1="3129.40" y1="589.00" x2="3129.40" y2="639.00" stroke="#ababab" stroke-width="1.4" /><line x1="3320.30" y1="589.00" x2="3320.30" y2="639.00" stroke="#ababab" stroke-width="1.4" /><line x1="3511.20" y1="589.00" x2="3511.20" y2="639.00" stroke="#ababab" stroke-width="1.4" /><line x1="3702.10" y1="589.00" x2="3702.10" y2="639.00" stroke="#ababab" stroke-width="1.4" /><line x1="0.00" y1="639.00" x2="3786.00" y2="639.00" stroke="#a6a6a6" stroke-width="1.5" /><line x1="0.00" y1="692.35" x2="75.00" y2="692.35" stroke="#bdbdbd" stroke-width="1.4" /><line x1="0.00" y1="745.70" x2="75.00" y2="745.70" stroke="#bdbdbd" stroke-width="1.4" /><line x1="0.00" y1="799.05" x2="75.00" y2="799.05" stroke="#bdbdbd" stroke-width="1.4" /><line x1="0.00" y1="852.40" x2="75.00" y2="852.40" stroke="#bdbdbd" stroke-width="1.4" /><line x1="0.00" y1="905.75" x2="75.00" y2="905.75" stroke="#bdbdbd" stroke-width="1.4" /><line x1="0.00" y1="959.10" x2="75.00" y2="959.10" stroke="#bdbdbd" stroke-width="1.4" /><line x1="0.00" y1="1012.45" x2="75.00" y2="1012.45" stroke="#bdbdbd" stroke-width="1.4" /><line x1="0.00" y1="1065.80" x2="75.00" y2="1065.80" stroke="#bdbdbd" stroke-width="1.4" /><line x1="0.00" y1="1119.15" x2="75.00" y2="1119.15" stroke="#bdbdbd" stroke-width="1.4" /><line x1="0.00" y1="1172.50" x2="75.00" y2="1172.50" stroke="#bdbdbd" stroke-width="1.4" /><line x1="0.00" y1="1225.85" x2="75.00" y2="1225.85" stroke="#bdbdbd" stroke-width="1.4" /><line x1="0.00" y1="1279.20" x2="75.00" y2="1279.20" stroke="#bdbdbd" stroke-width="1.4" /><line x1="0.00" y1="1332.55" x2="75.00" y2="1332.55" stroke="#bdbdbd" stroke-width="1.4" /><line x1="0.00" y1="1385.90" x2="75.00" y2="1385.90" stroke="#bdbdbd" stroke-width="1.4" /><line x1="0.00" y1="1439.25" x2="75.00" y2="1439.25" stroke="#bdbdbd" stroke-width="1.4" /><line x1="0.00" y1="1492.60" x2="75.00" y2="1492.60" stroke="#bdbdbd" stroke-width="1.4" /><line x1="0.00" y1="1545.95" x2="75.00" y2="1545.95" stroke="#bdbdbd" stroke-width="1.4" /><line x1="0.00" y1="1599.30" x2="75.00" y2="1599.30" stroke="#bdbdbd" stroke-width="1.4" /><line x1="0.00" y1="1652.65" x2="75.00" y2="1652.65" stroke="#bdbdbd" stroke-width="1.4" /><line x1="0.00" y1="1706.00" x2="75.00" y2="1706.00" stroke="#bdbdbd" stroke-width="1.4" /><line x1="0.00" y1="1759.35" x2="75.00" y2="1759.35" stroke="#bdbdbd" stroke-width="1.4" /><line x1="0.00" y1="1812.70" x2="75.00" y2="1812.70" stroke="#bdbdbd" stroke-width="1.4" /><line x1="0.00" y1="1866.05" x2="75.00" y2="1866.05" stroke="#bdbdbd" stroke-width="1.4" /><line x1="0.00" y1="1919.40" x2="75.00" y2="1919.40" stroke="#bdbdbd" stroke-width="1.4" /><line x1="0.00" y1="1972.75" x2="75.00" y2="1972.75" stroke="#bdbdbd" stroke-width="1.4" /><line x1="0.00" y1="2026.10" x2="75.00" y2="2026.10" stroke="#bdbdbd" stroke-width="1.4" /><line x1="0.00" y1="2079.45" x2="75.00" y2="2079.45" stroke="#bdbdbd" stroke-width="1.4" /><line x1="0.00" y1="2132.80" x2="75.00" y2="2132.80" stroke="#bdbdbd" stroke-width="1.4" /><line x1="0.00" y1="2186.15" x2="75.00" y2="2186.15" stroke="#bdbdbd" stroke-width="1.4" /><line x1="0.00" y1="2239.50" x2="75.00" y2="2239.50" stroke="#bdbdbd" stroke-width="1.4" /><line x1="0.00" y1="2292.85" x2="75.00" y2="2292.85" stroke="#bdbdbd" stroke-width="1.4" /><line x1="75.00" y1="587.00" x2="75.00" y2="2295.00" stroke="#a6a6a6" stroke-width="1.5" /><line x1="75.80" y1="692.35" x2="3786.00" y2="692.35" stroke="#d6d6d6" stroke-width="1.3" /><line x1="75.80" y1="745.70" x2="3786.00" y2="745.70" stroke="#d6d6d6" stroke-width="1.3" /><line x1="75.80" y1="799.05" x2="3786.00" y2="799.05" stroke="#d6d6d6" stroke-width="1.3" /><line x1="75.80" y1="852.40" x2="3786.00" y2="852.40" stroke="#d6d6d6" stroke-width="1.3" /><line x1="75.80" y1="905.75" x2="3786.00" y2="905.75" stroke="#d6d6d6" stroke-width="1.3" /><line x1="75.80" y1="959.10" x2="3786.00" y2="959.10" stroke="#d6d6d6" stroke-width="1.3" /><line x1="75.80" y1="1012.45" x2="3786.00" y2="1012.45" stroke="#d6d6d6" stroke-width="1.3" /><line x1="75.80" y1="1065.80" x2="3786.00" y2="1065.80" stroke="#d6d6d6" stroke-width="1.3" /><line x1="75.80" y1="1119.15" x2="3786.00" y2="1119.15" stroke="#d6d6d6" stroke-width="1.3" /><line x1="75.80" y1="1172.50" x2="3786.00" y2="1172.50" stroke="#d6d6d6" stroke-width="1.3" /><line x1="75.80" y1="1225.85" x2="3786.00" y2="1225.85" stroke="#d6d6d6" stroke-width="1.3" /><line x1="75.80" y1="1279.20" x2="3786.00" y2="1279.20" stroke="#d6d6d6" stroke-width="1.3" /><line x1="75.80" y1="1332.55" x2="3786.00" y2="1332.55" stroke="#d6d6d6" stroke-width="1.3" /><line x1="75.80" y1="1385.90" x2="3786.00" y2="1385.90" stroke="#d6d6d6" stroke-width="1.3" /><line x1="75.80" y1="1439.25" x2="3786.00" y2="1439.25" stroke="#d6d6d6" stroke-width="1.3" /><line x1="75.80" y1="1492.60" x2="3786.00" y2="1492.60" stroke="#d6d6d6" stroke-width="1.3" /><line x1="75.80" y1="1545.95" x2="3786.00" y2="1545.95" stroke="#d6d6d6" stroke-width="1.3" /><line x1="75.80" y1="1599.30" x2="3786.00" y2="1599.30" stroke="#d6d6d6" stroke-width="1.3" /><line x1="75.80" y1="1652.65" x2="3786.00" y2="1652.65" stroke="#d6d6d6" stroke-width="1.3" /><line x1="75.80" y1="1706.00" x2="3786.00" y2="1706.00" stroke="#d6d6d6" stroke-width="1.3" /><line x1="75.80" y1="1759.35" x2="3786.00" y2="1759.35" stroke="#d6d6d6" stroke-width="1.3" /><line x1="75.80" y1="1812.70" x2="3786.00" y2="1812.70" stroke="#d6d6d6" stroke-width="1.3" /><line x1="75.80" y1="1866.05" x2="3786.00" y2="1866.05" stroke="#d6d6d6" stroke-width="1.3" /><line x1="75.80" y1="1919.40" x2="3786.00" y2="1919.40" stroke="#d6d6d6" stroke-width="1.3" /><line x1="75.80" y1="1972.75" x2="3786.00" y2="1972.75" stroke="#d6d6d6" stroke-width="1.3" /><line x1="75.80" y1="2026.10" x2="3786.00" y2="2026.10" stroke="#d6d6d6" stroke-width="1.3" /><line x1="75.80" y1="2079.45" x2="3786.00" y2="2079.45" stroke="#d6d6d6" stroke-width="1.3" /><line x1="75.80" y1="2132.80" x2="3786.00" y2="2132.80" stroke="#d6d6d6" stroke-width="1.3" /><line x1="75.80" y1="2186.15" x2="3786.00" y2="2186.15" stroke="#d6d6d6" stroke-width="1.3" /><line x1="75.80" y1="2239.50" x2="3786.00" y2="2239.50" stroke="#d6d6d6" stroke-width="1.3" /><line x1="75.80" y1="2292.85" x2="3786.00" y2="2292.85" stroke="#d6d6d6" stroke-width="1.3" /><line x1="265.90" y1="639.00" x2="265.90" y2="692.35" stroke="#d6d6d6" stroke-width="1.3" /><line x1="456.80" y1="639.00" x2="456.80" y2="692.35" stroke="#d6d6d6" stroke-width="1.3" /><line x1="647.70" y1="639.00" x2="647.70" y2="692.35" stroke="#d6d6d6" stroke-width="1.3" /><line x1="838.60" y1="639.00" x2="838.60" y2="692.35" stroke="#d6d6d6" stroke-width="1.3" /><line x1="1029.50" y1="639.00" x2="1029.50" y2="692.35" stroke="#d6d6d6" stroke-width="1.3" /><line x1="1220.40" y1="639.00" x2="1220.40" y2="692.35" stroke="#d6d6d6" stroke-width="1.3" /><line x1="1411.30" y1="639.00" x2="1411.30" y2="692.35" stroke="#d6d6d6" stroke-width="1.3" /><line x1="1602.20" y1="639.00" x2="1602.20" y2="692.35" stroke="#d6d6d6" stroke-width="1.3" /><line x1="1793.10" y1="639.00" x2="1793.10" y2="692.35" stroke="#d6d6d6" stroke-width="1.3" /><line x1="1984.00" y1="639.00" x2="1984.00" y2="692.35" stroke="#d6d6d6" stroke-width="1.3" /><line x1="2174.90" y1="639.00" x2="2174.90" y2="692.35" stroke="#d6d6d6" stroke-width="1.3" /><line x1="2365.80" y1="639.00" x2="2365.80" y2="692.35" stroke="#d6d6d6" stroke-width="1.3" /><line x1="2556.70" y1="639.00" x2="2556.70" y2="692.35" stroke="#d6d6d6" stroke-width="1.3" /><line x1="2747.60" y1="639.00" x2="2747.60" y2="692.35" stroke="#d6d6d6" stroke-width="1.3" /><line x1="2938.50" y1="639.00" x2="2938.50" y2="692.35" stroke="#d6d6d6" stroke-width="1.3" /><line x1="3129.40" y1="639.00" x2="3129.40" y2="692.35" stroke="#d6d6d6" stroke-width="1.3" /><line x1="3320.30" y1="639.00" x2="3320.30" y2="692.35" stroke="#d6d6d6" stroke-width="1.3" /><line x1="3511.20" y1="639.00" x2="3511.20" y2="692.35" stroke="#d6d6d6" stroke-width="1.3" /><line x1="3702.10" y1="639.00" x2="3702.10" y2="692.35" stroke="#d6d6d6" stroke-width="1.3" /><line x1="265.90" y1="692.35" x2="265.90" y2="745.70" stroke="#d6d6d6" stroke-width="1.3" /><line x1="456.80" y1="692.35" x2="456.80" y2="745.70" stroke="#d6d6d6" stroke-width="1.3" /><line x1="838.60" y1="692.35" x2="838.60" y2="745.70" stroke="#d6d6d6" stroke-width="1.3" /><line x1="1029.50" y1="692.35" x2="1029.50" y2="745.70" stroke="#d6d6d6" stroke-width="1.3" /><line x1="1220.40" y1="692.35" x2="1220.40" y2="745.70" stroke="#d6d6d6" stroke-width="1.3" /><line x1="1411.30" y1="692.35" x2="1411.30" y2="745.70" stroke="#d6d6d6" stroke-width="1.3" /><line x1="1602.20" y1="692.35" x2="1602.20" y2="745.70" stroke="#d6d6d6" stroke-width="1.3" /><line x1="1793.10" y1="692.35" x2="1793.10" y2="745.70" stroke="#d6d6d6" stroke-width="1.3" /><line x1="1984.00" y1="692.35" x2="1984.00" y2="745.70" stroke="#d6d6d6" stroke-width="1.3" /><line x1="2174.90" y1="692.35" x2="2174.90" y2="745.70" stroke="#d6d6d6" stroke-width="1.3" /><line x1="2365.80" y1="692.35" x2="2365.80" y2="745.70" stroke="#d6d6d6" stroke-width="1.3" /><line x1="2556.70" y1="692.35" x2="2556.70" y2="745.70" stroke="#d6d6d6" stroke-width="1.3" /><line x1="2747.60" y1="692.35" x2="2747.60" y2="745.70" stroke="#d6d6d6" stroke-width="1.3" /><line x1="2938.50" y1="692.35" x2="2938.50" y2="745.70" stroke="#d6d6d6" stroke-width="1.3" /><line x1="3129.40" y1="692.35" x2="3129.40" y2="745.70" stroke="#d6d6d6" stroke-width="1.3" /><line x1="3320.30" y1="692.35" x2="3320.30" y2="745.70" stroke="#d6d6d6" stroke-width="1.3" /><line x1="3511.20" y1="692.35" x2="3511.20" y2="745.70" stroke="#d6d6d6" stroke-width="1.3" /><line x1="3702.10" y1="692.35" x2="3702.10" y2="745.70" stroke="#d6d6d6" stroke-width="1.3" /><line x1="265.90" y1="745.70" x2="265.90" y2="799.05" stroke="#d6d6d6" stroke-width="1.3" /><line x1="456.80" y1="745.70" x2="456.80" y2="799.05" stroke="#d6d6d6" stroke-width="1.3" /><line x1="838.60" y1="745.70" x2="838.60" y2="799.05" stroke="#d6d6d6" stroke-width="1.3" /><line x1="1029.50" y1="745.70" x2="1029.50" y2="799.05" stroke="#d6d6d6" stroke-width="1.3" /><line x1="1220.40" y1="745.70" x2="1220.40" y2="799.05" stroke="#d6d6d6" stroke-width="1.3" /><line x1="1411.30" y1="745.70" x2="1411.30" y2="799.05" stroke="#d6d6d6" stroke-width="1.3" /><line x1="1602.20" y1="745.70" x2="1602.20" y2="799.05" stroke="#d6d6d6" stroke-width="1.3" /><line x1="1793.10" y1="745.70" x2="1793.10" y2="799.05" stroke="#d6d6d6" stroke-width="1.3" /><line x1="1984.00" y1="745.70" x2="1984.00" y2="799.05" stroke="#d6d6d6" stroke-width="1.3" /><line x1="2174.90" y1="745.70" x2="2174.90" y2="799.05" stroke="#d6d6d6" stroke-width="1.3" /><line x1="2365.80" y1="745.70" x2="2365.80" y2="799.05" stroke="#d6d6d6" stroke-width="1.3" /><line x1="2556.70" y1="745.70" x2="2556.70" y2="799.05" stroke="#d6d6d6" stroke-width="1.3" /><line x1="2747.60" y1="745.70" x2="2747.60" y2="799.05" stroke="#d6d6d6" stroke-width="1.3" /><line x1="2938.50" y1="745.70" x2="2938.50" y2="799.05" stroke="#d6d6d6" stroke-width="1.3" /><line x1="3129.40" y1="745.70" x2="3129.40" y2="799.05" stroke="#d6d6d6" stroke-width="1.3" /><line x1="3320.30" y1="745.70" x2="3320.30" y2="799.05" stroke="#d6d6d6" stroke-width="1.3" /><line x1="3511.20" y1="745.70" x2="3511.20" y2="799.05" stroke="#d6d6d6" stroke-width="1.3" /><line x1="3702.10" y1="745.70" x2="3702.10" y2="799.05" stroke="#d6d6d6" stroke-width="1.3" /><line x1="265.90" y1="799.05" x2="265.90" y2="852.40" stroke="#d6d6d6" stroke-width="1.3" /><line x1="456.80" y1="799.05" x2="456.80" y2="852.40" stroke="#d6d6d6" stroke-width="1.3" /><line x1="647.70" y1="799.05" x2="647.70" y2="852.40" stroke="#d6d6d6" stroke-width="1.3" /><line x1="838.60" y1="799.05" x2="838.60" y2="852.40" stroke="#d6d6d6" stroke-width="1.3" /><line x1="1029.50" y1="799.05" x2="1029.50" y2="852.40" stroke="#d6d6d6" stroke-width="1.3" /><line x1="1220.40" y1="799.05" x2="1220.40" y2="852.40" stroke="#d6d6d6" stroke-width="1.3" /><line x1="1411.30" y1="799.05" x2="1411.30" y2="852.40" stroke="#d6d6d6" stroke-width="1.3" /><line x1="1602.20" y1="799.05" x2="1602.20" y2="852.40" stroke="#d6d6d6" stroke-width="1.3" /><line x1="1793.10" y1="799.05" x2="1793.10" y2="852.40" stroke="#d6d6d6" stroke-width="1.3" /><line x1="1984.00" y1="799.05" x2="1984.00" y2="852.40" stroke="#d6d6d6" stroke-width="1.3" /><line x1="2174.90" y1="799.05" x2="2174.90" y2="852.40" stroke="#d6d6d6" stroke-width="1.3" /><line x1="2365.80" y1="799.05" x2="2365.80" y2="852.40" stroke="#d6d6d6" stroke-width="1.3" /><line x1="2556.70" y1="799.05" x2="2556.70" y2="852.40" stroke="#d6d6d6" stroke-width="1.3" /><line x1="2747.60" y1="799.05" x2="2747.60" y2="852.40" stroke="#d6d6d6" stroke-width="1.3" /><line x1="2938.50" y1="799.05" x2="2938.50" y2="852.40" stroke="#d6d6d6" stroke-width="1.3" /><line x1="3129.40" y1="799.05" x2="3129.40" y2="852.40" stroke="#d6d6d6" stroke-width="1.3" /><line x1="3320.30" y1="799.05" x2="3320.30" y2="852.40" stroke="#d6d6d6" stroke-width="1.3" /><line x1="3511.20" y1="799.05" x2="3511.20" y2="852.40" stroke="#d6d6d6" stroke-width="1.3" /><line x1="3702.10" y1="799.05" x2="3702.10" y2="852.40" stroke="#d6d6d6" stroke-width="1.3" /><line x1="265.90" y1="852.40" x2="265.90" y2="905.75" stroke="#d6d6d6" stroke-width="1.3" /><line x1="456.80" y1="852.40" x2="456.80" y2="905.75" stroke="#d6d6d6" stroke-width="1.3" /><line x1="647.70" y1="852.40" x2="647.70" y2="905.75" stroke="#d6d6d6" stroke-width="1.3" /><line x1="838.60" y1="852.40" x2="838.60" y2="905.75" stroke="#d6d6d6" stroke-width="1.3" /><line x1="1029.50" y1="852.40" x2="1029.50" y2="905.75" stroke="#d6d6d6" stroke-width="1.3" /><line x1="1220.40" y1="852.40" x2="1220.40" y2="905.75" stroke="#d6d6d6" stroke-width="1.3" /><line x1="1411.30" y1="852.40" x2="1411.30" y2="905.75" stroke="#d6d6d6" stroke-width="1.3" /><line x1="1602.20" y1="852.40" x2="1602.20" y2="905.75" stroke="#d6d6d6" stroke-width="1.3" /><line x1="1793.10" y1="852.40" x2="1793.10" y2="905.75" stroke="#d6d6d6" stroke-width="1.3" /><line x1="1984.00" y1="852.40" x2="1984.00" y2="905.75" stroke="#d6d6d6" stroke-width="1.3" /><line x1="2174.90" y1="852.40" x2="2174.90" y2="905.75" stroke="#d6d6d6" stroke-width="1.3" /><line x1="2365.80" y1="852.40" x2="2365.80" y2="905.75" stroke="#d6d6d6" stroke-width="1.3" /><line x1="2556.70" y1="852.40" x2="2556.70" y2="905.75" stroke="#d6d6d6" stroke-width="1.3" /><line x1="2747.60" y1="852.40" x2="2747.60" y2="905.75" stroke="#d6d6d6" stroke-width="1.3" /><line x1="2938.50" y1="852.40" x2="2938.50" y2="905.75" stroke="#d6d6d6" stroke-width="1.3" /><line x1="3129.40" y1="852.40" x2="3129.40" y2="905.75" stroke="#d6d6d6" stroke-width="1.3" /><line x1="3320.30" y1="852.40" x2="3320.30" y2="905.75" stroke="#d6d6d6" stroke-width="1.3" /><line x1="3511.20" y1="852.40" x2="3511.20" y2="905.75" stroke="#d6d6d6" stroke-width="1.3" /><line x1="3702.10" y1="852.40" x2="3702.10" y2="905.75" stroke="#d6d6d6" stroke-width="1.3" /><line x1="265.90" y1="905.75" x2="265.90" y2="959.10" stroke="#d6d6d6" stroke-width="1.3" /><line x1="456.80" y1="905.75" x2="456.80" y2="959.10" stroke="#d6d6d6" stroke-width="1.3" /><line x1="647.70" y1="905.75" x2="647.70" y2="959.10" stroke="#d6d6d6" stroke-width="1.3" /><line x1="838.60" y1="905.75" x2="838.60" y2="959.10" stroke="#d6d6d6" stroke-width="1.3" /><line x1="1029.50" y1="905.75" x2="1029.50" y2="959.10" stroke="#d6d6d6" stroke-width="1.3" /><line x1="1220.40" y1="905.75" x2="1220.40" y2="959.10" stroke="#d6d6d6" stroke-width="1.3" /><line x1="1411.30" y1="905.75" x2="1411.30" y2="959.10" stroke="#d6d6d6" stroke-width="1.3" /><line x1="1602.20" y1="905.75" x2="1602.20" y2="959.10" stroke="#d6d6d6" stroke-width="1.3" /><line x1="1793.10" y1="905.75" x2="1793.10" y2="959.10" stroke="#d6d6d6" stroke-width="1.3" /><line x1="1984.00" y1="905.75" x2="1984.00" y2="959.10" stroke="#d6d6d6" stroke-width="1.3" /><line x1="2174.90" y1="905.75" x2="2174.90" y2="959.10" stroke="#d6d6d6" stroke-width="1.3" /><line x1="2365.80" y1="905.75" x2="2365.80" y2="959.10" stroke="#d6d6d6" stroke-width="1.3" /><line x1="2556.70" y1="905.75" x2="2556.70" y2="959.10" stroke="#d6d6d6" stroke-width="1.3" /><line x1="2747.60" y1="905.75" x2="2747.60" y2="959.10" stroke="#d6d6d6" stroke-width="1.3" /><line x1="2938.50" y1="905.75" x2="2938.50" y2="959.10" stroke="#d6d6d6" stroke-width="1.3" /><line x1="3129.40" y1="905.75" x2="3129.40" y2="959.10" stroke="#d6d6d6" stroke-width="1.3" /><line x1="3320.30" y1="905.75" x2="3320.30" y2="959.10" stroke="#d6d6d6" stroke-width="1.3" /><line x1="3511.20" y1="905.75" x2="3511.20" y2="959.10" stroke="#d6d6d6" stroke-width="1.3" /><line x1="3702.10" y1="905.75" x2="3702.10" y2="959.10" stroke="#d6d6d6" stroke-width="1.3" /><line x1="265.90" y1="959.10" x2="265.90" y2="1012.45" stroke="#d6d6d6" stroke-width="1.3" /><line x1="456.80" y1="959.10" x2="456.80" y2="1012.45" stroke="#d6d6d6" stroke-width="1.3" /><line x1="647.70" y1="959.10" x2="647.70" y2="1012.45" stroke="#d6d6d6" stroke-width="1.3" /><line x1="838.60" y1="959.10" x2="838.60" y2="1012.45" stroke="#d6d6d6" stroke-width="1.3" /><line x1="1029.50" y1="959.10" x2="1029.50" y2="1012.45" stroke="#d6d6d6" stroke-width="1.3" /><line x1="1220.40" y1="959.10" x2="1220.40" y2="1012.45" stroke="#d6d6d6" stroke-width="1.3" /><line x1="1411.30" y1="959.10" x2="1411.30" y2="1012.45" stroke="#d6d6d6" stroke-width="1.3" /><line x1="1602.20" y1="959.10" x2="1602.20" y2="1012.45" stroke="#d6d6d6" stroke-width="1.3" /><line x1="1793.10" y1="959.10" x2="1793.10" y2="1012.45" stroke="#d6d6d6" stroke-width="1.3" /><line x1="1984.00" y1="959.10" x2="1984.00" y2="1012.45" stroke="#d6d6d6" stroke-width="1.3" /><line x1="2174.90" y1="959.10" x2="2174.90" y2="1012.45" stroke="#d6d6d6" stroke-width="1.3" /><line x1="2365.80" y1="959.10" x2="2365.80" y2="1012.45" stroke="#d6d6d6" stroke-width="1.3" /><line x1="2556.70" y1="959.10" x2="2556.70" y2="1012.45" stroke="#d6d6d6" stroke-width="1.3" /><line x1="2747.60" y1="959.10" x2="2747.60" y2="1012.45" stroke="#d6d6d6" stroke-width="1.3" /><line x1="2938.50" y1="959.10" x2="2938.50" y2="1012.45" stroke="#d6d6d6" stroke-width="1.3" /><line x1="3129.40" y1="959.10" x2="3129.40" y2="1012.45" stroke="#d6d6d6" stroke-width="1.3" /><line x1="3320.30" y1="959.10" x2="3320.30" y2="1012.45" stroke="#d6d6d6" stroke-width="1.3" /><line x1="3511.20" y1="959.10" x2="3511.20" y2="1012.45" stroke="#d6d6d6" stroke-width="1.3" /><line x1="3702.10" y1="959.10" x2="3702.10" y2="1012.45" stroke="#d6d6d6" stroke-width="1.3" /><line x1="265.90" y1="1012.45" x2="265.90" y2="1065.80" stroke="#d6d6d6" stroke-width="1.3" /><line x1="456.80" y1="1012.45" x2="456.80" y2="1065.80" stroke="#d6d6d6" stroke-width="1.3" /><line x1="647.70" y1="1012.45" x2="647.70" y2="1065.80" stroke="#d6d6d6" stroke-width="1.3" /><line x1="838.60" y1="1012.45" x2="838.60" y2="1065.80" stroke="#d6d6d6" stroke-width="1.3" /><line x1="1029.50" y1="1012.45" x2="1029.50" y2="1065.80" stroke="#d6d6d6" stroke-width="1.3" /><line x1="1220.40" y1="1012.45" x2="1220.40" y2="1065.80" stroke="#d6d6d6" stroke-width="1.3" /><line x1="1411.30" y1="1012.45" x2="1411.30" y2="1065.80" stroke="#d6d6d6" stroke-width="1.3" /><line x1="1602.20" y1="1012.45" x2="1602.20" y2="1065.80" stroke="#d6d6d6" stroke-width="1.3" /><line x1="1793.10" y1="1012.45" x2="1793.10" y2="1065.80" stroke="#d6d6d6" stroke-width="1.3" /><line x1="1984.00" y1="1012.45" x2="1984.00" y2="1065.80" stroke="#d6d6d6" stroke-width="1.3" /><line x1="2174.90" y1="1012.45" x2="2174.90" y2="1065.80" stroke="#d6d6d6" stroke-width="1.3" /><line x1="2365.80" y1="1012.45" x2="2365.80" y2="1065.80" stroke="#d6d6d6" stroke-width="1.3" /><line x1="2556.70" y1="1012.45" x2="2556.70" y2="1065.80" stroke="#d6d6d6" stroke-width="1.3" /><line x1="2747.60" y1="1012.45" x2="2747.60" y2="1065.80" stroke="#d6d6d6" stroke-width="1.3" /><line x1="2938.50" y1="1012.45" x2="2938.50" y2="1065.80" stroke="#d6d6d6" stroke-width="1.3" /><line x1="3129.40" y1="1012.45" x2="3129.40" y2="1065.80" stroke="#d6d6d6" stroke-width="1.3" /><line x1="3320.30" y1="1012.45" x2="3320.30" y2="1065.80" stroke="#d6d6d6" stroke-width="1.3" /><line x1="3511.20" y1="1012.45" x2="3511.20" y2="1065.80" stroke="#d6d6d6" stroke-width="1.3" /><line x1="3702.10" y1="1012.45" x2="3702.10" y2="1065.80" stroke="#d6d6d6" stroke-width="1.3" /><line x1="265.90" y1="1065.80" x2="265.90" y2="1119.15" stroke="#d6d6d6" stroke-width="1.3" /><line x1="456.80" y1="1065.80" x2="456.80" y2="1119.15" stroke="#d6d6d6" stroke-width="1.3" /><line x1="647.70" y1="1065.80" x2="647.70" y2="1119.15" stroke="#d6d6d6" stroke-width="1.3" /><line x1="838.60" y1="1065.80" x2="838.60" y2="1119.15" stroke="#d6d6d6" stroke-width="1.3" /><line x1="1029.50" y1="1065.80" x2="1029.50" y2="1119.15" stroke="#d6d6d6" stroke-width="1.3" /><line x1="1220.40" y1="1065.80" x2="1220.40" y2="1119.15" stroke="#d6d6d6" stroke-width="1.3" /><line x1="1411.30" y1="1065.80" x2="1411.30" y2="1119.15" stroke="#d6d6d6" stroke-width="1.3" /><line x1="1602.20" y1="1065.80" x2="1602.20" y2="1119.15" stroke="#d6d6d6" stroke-width="1.3" /><line x1="1793.10" y1="1065.80" x2="1793.10" y2="1119.15" stroke="#d6d6d6" stroke-width="1.3" /><line x1="1984.00" y1="1065.80" x2="1984.00" y2="1119.15" stroke="#d6d6d6" stroke-width="1.3" /><line x1="2174.90" y1="1065.80" x2="2174.90" y2="1119.15" stroke="#d6d6d6" stroke-width="1.3" /><line x1="2365.80" y1="1065.80" x2="2365.80" y2="1119.15" stroke="#d6d6d6" stroke-width="1.3" /><line x1="2556.70" y1="1065.80" x2="2556.70" y2="1119.15" stroke="#d6d6d6" stroke-width="1.3" /><line x1="2747.60" y1="1065.80" x2="2747.60" y2="1119.15" stroke="#d6d6d6" stroke-width="1.3" /><line x1="2938.50" y1="1065.80" x2="2938.50" y2="1119.15" stroke="#d6d6d6" stroke-width="1.3" /><line x1="3129.40" y1="1065.80" x2="3129.40" y2="1119.15" stroke="#d6d6d6" stroke-width="1.3" /><line x1="3320.30" y1="1065.80" x2="3320.30" y2="1119.15" stroke="#d6d6d6" stroke-width="1.3" /><line x1="3511.20" y1="1065.80" x2="3511.20" y2="1119.15" stroke="#d6d6d6" stroke-width="1.3" /><line x1="3702.10" y1="1065.80" x2="3702.10" y2="1119.15" stroke="#d6d6d6" stroke-width="1.3" /><line x1="265.90" y1="1119.15" x2="265.90" y2="1172.50" stroke="#d6d6d6" stroke-width="1.3" /><line x1="456.80" y1="1119.15" x2="456.80" y2="1172.50" stroke="#d6d6d6" stroke-width="1.3" /><line x1="647.70" y1="1119.15" x2="647.70" y2="1172.50" stroke="#d6d6d6" stroke-width="1.3" /><line x1="838.60" y1="1119.15" x2="838.60" y2="1172.50" stroke="#d6d6d6" stroke-width="1.3" /><line x1="1029.50" y1="1119.15" x2="1029.50" y2="1172.50" stroke="#d6d6d6" stroke-width="1.3" /><line x1="1220.40" y1="1119.15" x2="1220.40" y2="1172.50" stroke="#d6d6d6" stroke-width="1.3" /><line x1="1411.30" y1="1119.15" x2="1411.30" y2="1172.50" stroke="#d6d6d6" stroke-width="1.3" /><line x1="1602.20" y1="1119.15" x2="1602.20" y2="1172.50" stroke="#d6d6d6" stroke-width="1.3" /><line x1="1793.10" y1="1119.15" x2="1793.10" y2="1172.50" stroke="#d6d6d6" stroke-width="1.3" /><line x1="1984.00" y1="1119.15" x2="1984.00" y2="1172.50" stroke="#d6d6d6" stroke-width="1.3" /><line x1="2174.90" y1="1119.15" x2="2174.90" y2="1172.50" stroke="#d6d6d6" stroke-width="1.3" /><line x1="2365.80" y1="1119.15" x2="2365.80" y2="1172.50" stroke="#d6d6d6" stroke-width="1.3" /><line x1="2556.70" y1="1119.15" x2="2556.70" y2="1172.50" stroke="#d6d6d6" stroke-width="1.3" /><line x1="2747.60" y1="1119.15" x2="2747.60" y2="1172.50" stroke="#d6d6d6" stroke-width="1.3" /><line x1="2938.50" y1="1119.15" x2="2938.50" y2="1172.50" stroke="#d6d6d6" stroke-width="1.3" /><line x1="3129.40" y1="1119.15" x2="3129.40" y2="1172.50" stroke="#d6d6d6" stroke-width="1.3" /><line x1="3320.30" y1="1119.15" x2="3320.30" y2="1172.50" stroke="#d6d6d6" stroke-width="1.3" /><line x1="3511.20" y1="1119.15" x2="3511.20" y2="1172.50" stroke="#d6d6d6" stroke-width="1.3" /><line x1="3702.10" y1="1119.15" x2="3702.10" y2="1172.50" stroke="#d6d6d6" stroke-width="1.3" /><line x1="265.90" y1="1172.50" x2="265.90" y2="1225.85" stroke="#d6d6d6" stroke-width="1.3" /><line x1="456.80" y1="1172.50" x2="456.80" y2="1225.85" stroke="#d6d6d6" stroke-width="1.3" /><line x1="838.60" y1="1172.50" x2="838.60" y2="1225.85" stroke="#d6d6d6" stroke-width="1.3" /><line x1="1029.50" y1="1172.50" x2="1029.50" y2="1225.85" stroke="#d6d6d6" stroke-width="1.3" /><line x1="1220.40" y1="1172.50" x2="1220.40" y2="1225.85" stroke="#d6d6d6" stroke-width="1.3" /><line x1="1411.30" y1="1172.50" x2="1411.30" y2="1225.85" stroke="#d6d6d6" stroke-width="1.3" /><line x1="1602.20" y1="1172.50" x2="1602.20" y2="1225.85" stroke="#d6d6d6" stroke-width="1.3" /><line x1="1793.10" y1="1172.50" x2="1793.10" y2="1225.85" stroke="#d6d6d6" stroke-width="1.3" /><line x1="1984.00" y1="1172.50" x2="1984.00" y2="1225.85" stroke="#d6d6d6" stroke-width="1.3" /><line x1="2174.90" y1="1172.50" x2="2174.90" y2="1225.85" stroke="#d6d6d6" stroke-width="1.3" /><line x1="2365.80" y1="1172.50" x2="2365.80" y2="1225.85" stroke="#d6d6d6" stroke-width="1.3" /><line x1="2556.70" y1="1172.50" x2="2556.70" y2="1225.85" stroke="#d6d6d6" stroke-width="1.3" /><line x1="2747.60" y1="1172.50" x2="2747.60" y2="1225.85" stroke="#d6d6d6" stroke-width="1.3" /><line x1="2938.50" y1="1172.50" x2="2938.50" y2="1225.85" stroke="#d6d6d6" stroke-width="1.3" /><line x1="3129.40" y1="1172.50" x2="3129.40" y2="1225.85" stroke="#d6d6d6" stroke-width="1.3" /><line x1="3320.30" y1="1172.50" x2="3320.30" y2="1225.85" stroke="#d6d6d6" stroke-width="1.3" /><line x1="3511.20" y1="1172.50" x2="3511.20" y2="1225.85" stroke="#d6d6d6" stroke-width="1.3" /><line x1="3702.10" y1="1172.50" x2="3702.10" y2="1225.85" stroke="#d6d6d6" stroke-width="1.3" /><line x1="265.90" y1="1225.85" x2="265.90" y2="1279.20" stroke="#d6d6d6" stroke-width="1.3" /><line x1="456.80" y1="1225.85" x2="456.80" y2="1279.20" stroke="#d6d6d6" stroke-width="1.3" /><line x1="647.70" y1="1225.85" x2="647.70" y2="1279.20" stroke="#d6d6d6" stroke-width="1.3" /><line x1="838.60" y1="1225.85" x2="838.60" y2="1279.20" stroke="#d6d6d6" stroke-width="1.3" /><line x1="1029.50" y1="1225.85" x2="1029.50" y2="1279.20" stroke="#d6d6d6" stroke-width="1.3" /><line x1="1220.40" y1="1225.85" x2="1220.40" y2="1279.20" stroke="#d6d6d6" stroke-width="1.3" /><line x1="1411.30" y1="1225.85" x2="1411.30" y2="1279.20" stroke="#d6d6d6" stroke-width="1.3" /><line x1="1602.20" y1="1225.85" x2="1602.20" y2="1279.20" stroke="#d6d6d6" stroke-width="1.3" /><line x1="1793.10" y1="1225.85" x2="1793.10" y2="1279.20" stroke="#d6d6d6" stroke-width="1.3" /><line x1="1984.00" y1="1225.85" x2="1984.00" y2="1279.20" stroke="#d6d6d6" stroke-width="1.3" /><line x1="2174.90" y1="1225.85" x2="2174.90" y2="1279.20" stroke="#d6d6d6" stroke-width="1.3" /><line x1="2365.80" y1="1225.85" x2="2365.80" y2="1279.20" stroke="#d6d6d6" stroke-width="1.3" /><line x1="2556.70" y1="1225.85" x2="2556.70" y2="1279.20" stroke="#d6d6d6" stroke-width="1.3" /><line x1="2747.60" y1="1225.85" x2="2747.60" y2="1279.20" stroke="#d6d6d6" stroke-width="1.3" /><line x1="2938.50" y1="1225.85" x2="2938.50" y2="1279.20" stroke="#d6d6d6" stroke-width="1.3" /><line x1="3129.40" y1="1225.85" x2="3129.40" y2="1279.20" stroke="#d6d6d6" stroke-width="1.3" /><line x1="3320.30" y1="1225.85" x2="3320.30" y2="1279.20" stroke="#d6d6d6" stroke-width="1.3" /><line x1="3511.20" y1="1225.85" x2="3511.20" y2="1279.20" stroke="#d6d6d6" stroke-width="1.3" /><line x1="3702.10" y1="1225.85" x2="3702.10" y2="1279.20" stroke="#d6d6d6" stroke-width="1.3" /><line x1="265.90" y1="1279.20" x2="265.90" y2="1332.55" stroke="#d6d6d6" stroke-width="1.3" /><line x1="456.80" y1="1279.20" x2="456.80" y2="1332.55" stroke="#d6d6d6" stroke-width="1.3" /><line x1="647.70" y1="1279.20" x2="647.70" y2="1332.55" stroke="#d6d6d6" stroke-width="1.3" /><line x1="838.60" y1="1279.20" x2="838.60" y2="1332.55" stroke="#d6d6d6" stroke-width="1.3" /><line x1="1029.50" y1="1279.20" x2="1029.50" y2="1332.55" stroke="#d6d6d6" stroke-width="1.3" /><line x1="1220.40" y1="1279.20" x2="1220.40" y2="1332.55" stroke="#d6d6d6" stroke-width="1.3" /><line x1="1411.30" y1="1279.20" x2="1411.30" y2="1332.55" stroke="#d6d6d6" stroke-width="1.3" /><line x1="1602.20" y1="1279.20" x2="1602.20" y2="1332.55" stroke="#d6d6d6" stroke-width="1.3" /><line x1="1793.10" y1="1279.20" x2="1793.10" y2="1332.55" stroke="#d6d6d6" stroke-width="1.3" /><line x1="1984.00" y1="1279.20" x2="1984.00" y2="1332.55" stroke="#d6d6d6" stroke-width="1.3" /><line x1="2174.90" y1="1279.20" x2="2174.90" y2="1332.55" stroke="#d6d6d6" stroke-width="1.3" /><line x1="2365.80" y1="1279.20" x2="2365.80" y2="1332.55" stroke="#d6d6d6" stroke-width="1.3" /><line x1="2556.70" y1="1279.20" x2="2556.70" y2="1332.55" stroke="#d6d6d6" stroke-width="1.3" /><line x1="2747.60" y1="1279.20" x2="2747.60" y2="1332.55" stroke="#d6d6d6" stroke-width="1.3" /><line x1="2938.50" y1="1279.20" x2="2938.50" y2="1332.55" stroke="#d6d6d6" stroke-width="1.3" /><line x1="3129.40" y1="1279.20" x2="3129.40" y2="1332.55" stroke="#d6d6d6" stroke-width="1.3" /><line x1="3320.30" y1="1279.20" x2="3320.30" y2="1332.55" stroke="#d6d6d6" stroke-width="1.3" /><line x1="3511.20" y1="1279.20" x2="3511.20" y2="1332.55" stroke="#d6d6d6" stroke-width="1.3" /><line x1="3702.10" y1="1279.20" x2="3702.10" y2="1332.55" stroke="#d6d6d6" stroke-width="1.3" /><line x1="456.80" y1="1332.55" x2="456.80" y2="1385.90" stroke="#d6d6d6" stroke-width="1.3" /><line x1="647.70" y1="1332.55" x2="647.70" y2="1385.90" stroke="#d6d6d6" stroke-width="1.3" /><line x1="838.60" y1="1332.55" x2="838.60" y2="1385.90" stroke="#d6d6d6" stroke-width="1.3" /><line x1="1029.50" y1="1332.55" x2="1029.50" y2="1385.90" stroke="#d6d6d6" stroke-width="1.3" /><line x1="1220.40" y1="1332.55" x2="1220.40" y2="1385.90" stroke="#d6d6d6" stroke-width="1.3" /><line x1="1411.30" y1="1332.55" x2="1411.30" y2="1385.90" stroke="#d6d6d6" stroke-width="1.3" /><line x1="1602.20" y1="1332.55" x2="1602.20" y2="1385.90" stroke="#d6d6d6" stroke-width="1.3" /><line x1="1793.10" y1="1332.55" x2="1793.10" y2="1385.90" stroke="#d6d6d6" stroke-width="1.3" /><line x1="1984.00" y1="1332.55" x2="1984.00" y2="1385.90" stroke="#d6d6d6" stroke-width="1.3" /><line x1="2174.90" y1="1332.55" x2="2174.90" y2="1385.90" stroke="#d6d6d6" stroke-width="1.3" /><line x1="2365.80" y1="1332.55" x2="2365.80" y2="1385.90" stroke="#d6d6d6" stroke-width="1.3" /><line x1="2556.70" y1="1332.55" x2="2556.70" y2="1385.90" stroke="#d6d6d6" stroke-width="1.3" /><line x1="2747.60" y1="1332.55" x2="2747.60" y2="1385.90" stroke="#d6d6d6" stroke-width="1.3" /><line x1="2938.50" y1="1332.55" x2="2938.50" y2="1385.90" stroke="#d6d6d6" stroke-width="1.3" /><line x1="3129.40" y1="1332.55" x2="3129.40" y2="1385.90" stroke="#d6d6d6" stroke-width="1.3" /><line x1="3320.30" y1="1332.55" x2="3320.30" y2="1385.90" stroke="#d6d6d6" stroke-width="1.3" /><line x1="3511.20" y1="1332.55" x2="3511.20" y2="1385.90" stroke="#d6d6d6" stroke-width="1.3" /><line x1="3702.10" y1="1332.55" x2="3702.10" y2="1385.90" stroke="#d6d6d6" stroke-width="1.3" /><line x1="265.90" y1="1385.90" x2="265.90" y2="1439.25" stroke="#d6d6d6" stroke-width="1.3" /><line x1="456.80" y1="1385.90" x2="456.80" y2="1439.25" stroke="#d6d6d6" stroke-width="1.3" /><line x1="838.60" y1="1385.90" x2="838.60" y2="1439.25" stroke="#d6d6d6" stroke-width="1.3" /><line x1="1029.50" y1="1385.90" x2="1029.50" y2="1439.25" stroke="#d6d6d6" stroke-width="1.3" /><line x1="1220.40" y1="1385.90" x2="1220.40" y2="1439.25" stroke="#d6d6d6" stroke-width="1.3" /><line x1="1411.30" y1="1385.90" x2="1411.30" y2="1439.25" stroke="#d6d6d6" stroke-width="1.3" /><line x1="1602.20" y1="1385.90" x2="1602.20" y2="1439.25" stroke="#d6d6d6" stroke-width="1.3" /><line x1="1793.10" y1="1385.90" x2="1793.10" y2="1439.25" stroke="#d6d6d6" stroke-width="1.3" /><line x1="1984.00" y1="1385.90" x2="1984.00" y2="1439.25" stroke="#d6d6d6" stroke-width="1.3" /><line x1="2174.90" y1="1385.90" x2="2174.90" y2="1439.25" stroke="#d6d6d6" stroke-width="1.3" /><line x1="2365.80" y1="1385.90" x2="2365.80" y2="1439.25" stroke="#d6d6d6" stroke-width="1.3" /><line x1="2556.70" y1="1385.90" x2="2556.70" y2="1439.25" stroke="#d6d6d6" stroke-width="1.3" /><line x1="2747.60" y1="1385.90" x2="2747.60" y2="1439.25" stroke="#d6d6d6" stroke-width="1.3" /><line x1="2938.50" y1="1385.90" x2="2938.50" y2="1439.25" stroke="#d6d6d6" stroke-width="1.3" /><line x1="3129.40" y1="1385.90" x2="3129.40" y2="1439.25" stroke="#d6d6d6" stroke-width="1.3" /><line x1="3320.30" y1="1385.90" x2="3320.30" y2="1439.25" stroke="#d6d6d6" stroke-width="1.3" /><line x1="3511.20" y1="1385.90" x2="3511.20" y2="1439.25" stroke="#d6d6d6" stroke-width="1.3" /><line x1="3702.10" y1="1385.90" x2="3702.10" y2="1439.25" stroke="#d6d6d6" stroke-width="1.3" /><line x1="265.90" y1="1439.25" x2="265.90" y2="1492.60" stroke="#d6d6d6" stroke-width="1.3" /><line x1="456.80" y1="1439.25" x2="456.80" y2="1492.60" stroke="#d6d6d6" stroke-width="1.3" /><line x1="838.60" y1="1439.25" x2="838.60" y2="1492.60" stroke="#d6d6d6" stroke-width="1.3" /><line x1="1029.50" y1="1439.25" x2="1029.50" y2="1492.60" stroke="#d6d6d6" stroke-width="1.3" /><line x1="1220.40" y1="1439.25" x2="1220.40" y2="1492.60" stroke="#d6d6d6" stroke-width="1.3" /><line x1="1411.30" y1="1439.25" x2="1411.30" y2="1492.60" stroke="#d6d6d6" stroke-width="1.3" /><line x1="1602.20" y1="1439.25" x2="1602.20" y2="1492.60" stroke="#d6d6d6" stroke-width="1.3" /><line x1="1793.10" y1="1439.25" x2="1793.10" y2="1492.60" stroke="#d6d6d6" stroke-width="1.3" /><line x1="1984.00" y1="1439.25" x2="1984.00" y2="1492.60" stroke="#d6d6d6" stroke-width="1.3" /><line x1="2174.90" y1="1439.25" x2="2174.90" y2="1492.60" stroke="#d6d6d6" stroke-width="1.3" /><line x1="2365.80" y1="1439.25" x2="2365.80" y2="1492.60" stroke="#d6d6d6" stroke-width="1.3" /><line x1="2556.70" y1="1439.25" x2="2556.70" y2="1492.60" stroke="#d6d6d6" stroke-width="1.3" /><line x1="2747.60" y1="1439.25" x2="2747.60" y2="1492.60" stroke="#d6d6d6" stroke-width="1.3" /><line x1="2938.50" y1="1439.25" x2="2938.50" y2="1492.60" stroke="#d6d6d6" stroke-width="1.3" /><line x1="3129.40" y1="1439.25" x2="3129.40" y2="1492.60" stroke="#d6d6d6" stroke-width="1.3" /><line x1="3320.30" y1="1439.25" x2="3320.30" y2="1492.60" stroke="#d6d6d6" stroke-width="1.3" /><line x1="3511.20" y1="1439.25" x2="3511.20" y2="1492.60" stroke="#d6d6d6" stroke-width="1.3" /><line x1="3702.10" y1="1439.25" x2="3702.10" y2="1492.60" stroke="#d6d6d6" stroke-width="1.3" /><line x1="265.90" y1="1492.60" x2="265.90" y2="1545.95" stroke="#d6d6d6" stroke-width="1.3" /><line x1="456.80" y1="1492.60" x2="456.80" y2="1545.95" stroke="#d6d6d6" stroke-width="1.3" /><line x1="647.70" y1="1492.60" x2="647.70" y2="1545.95" stroke="#d6d6d6" stroke-width="1.3" /><line x1="838.60" y1="1492.60" x2="838.60" y2="1545.95" stroke="#d6d6d6" stroke-width="1.3" /><line x1="1029.50" y1="1492.60" x2="1029.50" y2="1545.95" stroke="#d6d6d6" stroke-width="1.3" /><line x1="1220.40" y1="1492.60" x2="1220.40" y2="1545.95" stroke="#d6d6d6" stroke-width="1.3" /><line x1="1411.30" y1="1492.60" x2="1411.30" y2="1545.95" stroke="#d6d6d6" stroke-width="1.3" /><line x1="1602.20" y1="1492.60" x2="1602.20" y2="1545.95" stroke="#d6d6d6" stroke-width="1.3" /><line x1="1793.10" y1="1492.60" x2="1793.10" y2="1545.95" stroke="#d6d6d6" stroke-width="1.3" /><line x1="1984.00" y1="1492.60" x2="1984.00" y2="1545.95" stroke="#d6d6d6" stroke-width="1.3" /><line x1="2174.90" y1="1492.60" x2="2174.90" y2="1545.95" stroke="#d6d6d6" stroke-width="1.3" /><line x1="2365.80" y1="1492.60" x2="2365.80" y2="1545.95" stroke="#d6d6d6" stroke-width="1.3" /><line x1="2556.70" y1="1492.60" x2="2556.70" y2="1545.95" stroke="#d6d6d6" stroke-width="1.3" /><line x1="2747.60" y1="1492.60" x2="2747.60" y2="1545.95" stroke="#d6d6d6" stroke-width="1.3" /><line x1="2938.50" y1="1492.60" x2="2938.50" y2="1545.95" stroke="#d6d6d6" stroke-width="1.3" /><line x1="3129.40" y1="1492.60" x2="3129.40" y2="1545.95" stroke="#d6d6d6" stroke-width="1.3" /><line x1="3320.30" y1="1492.60" x2="3320.30" y2="1545.95" stroke="#d6d6d6" stroke-width="1.3" /><line x1="3511.20" y1="1492.60" x2="3511.20" y2="1545.95" stroke="#d6d6d6" stroke-width="1.3" /><line x1="3702.10" y1="1492.60" x2="3702.10" y2="1545.95" stroke="#d6d6d6" stroke-width="1.3" /><line x1="265.90" y1="1545.95" x2="265.90" y2="1599.30" stroke="#d6d6d6" stroke-width="1.3" /><line x1="456.80" y1="1545.95" x2="456.80" y2="1599.30" stroke="#d6d6d6" stroke-width="1.3" /><line x1="647.70" y1="1545.95" x2="647.70" y2="1599.30" stroke="#d6d6d6" stroke-width="1.3" /><line x1="838.60" y1="1545.95" x2="838.60" y2="1599.30" stroke="#d6d6d6" stroke-width="1.3" /><line x1="1029.50" y1="1545.95" x2="1029.50" y2="1599.30" stroke="#d6d6d6" stroke-width="1.3" /><line x1="1220.40" y1="1545.95" x2="1220.40" y2="1599.30" stroke="#d6d6d6" stroke-width="1.3" /><line x1="1411.30" y1="1545.95" x2="1411.30" y2="1599.30" stroke="#d6d6d6" stroke-width="1.3" /><line x1="1602.20" y1="1545.95" x2="1602.20" y2="1599.30" stroke="#d6d6d6" stroke-width="1.3" /><line x1="1793.10" y1="1545.95" x2="1793.10" y2="1599.30" stroke="#d6d6d6" stroke-width="1.3" /><line x1="1984.00" y1="1545.95" x2="1984.00" y2="1599.30" stroke="#d6d6d6" stroke-width="1.3" /><line x1="2174.90" y1="1545.95" x2="2174.90" y2="1599.30" stroke="#d6d6d6" stroke-width="1.3" /><line x1="2365.80" y1="1545.95" x2="2365.80" y2="1599.30" stroke="#d6d6d6" stroke-width="1.3" /><line x1="2556.70" y1="1545.95" x2="2556.70" y2="1599.30" stroke="#d6d6d6" stroke-width="1.3" /><line x1="2747.60" y1="1545.95" x2="2747.60" y2="1599.30" stroke="#d6d6d6" stroke-width="1.3" /><line x1="2938.50" y1="1545.95" x2="2938.50" y2="1599.30" stroke="#d6d6d6" stroke-width="1.3" /><line x1="3129.40" y1="1545.95" x2="3129.40" y2="1599.30" stroke="#d6d6d6" stroke-width="1.3" /><line x1="3320.30" y1="1545.95" x2="3320.30" y2="1599.30" stroke="#d6d6d6" stroke-width="1.3" /><line x1="3511.20" y1="1545.95" x2="3511.20" y2="1599.30" stroke="#d6d6d6" stroke-width="1.3" /><line x1="3702.10" y1="1545.95" x2="3702.10" y2="1599.30" stroke="#d6d6d6" stroke-width="1.3" /><line x1="265.90" y1="1599.30" x2="265.90" y2="1652.65" stroke="#d6d6d6" stroke-width="1.3" /><line x1="456.80" y1="1599.30" x2="456.80" y2="1652.65" stroke="#d6d6d6" stroke-width="1.3" /><line x1="647.70" y1="1599.30" x2="647.70" y2="1652.65" stroke="#d6d6d6" stroke-width="1.3" /><line x1="838.60" y1="1599.30" x2="838.60" y2="1652.65" stroke="#d6d6d6" stroke-width="1.3" /><line x1="1029.50" y1="1599.30" x2="1029.50" y2="1652.65" stroke="#d6d6d6" stroke-width="1.3" /><line x1="1220.40" y1="1599.30" x2="1220.40" y2="1652.65" stroke="#d6d6d6" stroke-width="1.3" /><line x1="1411.30" y1="1599.30" x2="1411.30" y2="1652.65" stroke="#d6d6d6" stroke-width="1.3" /><line x1="1602.20" y1="1599.30" x2="1602.20" y2="1652.65" stroke="#d6d6d6" stroke-width="1.3" /><line x1="1793.10" y1="1599.30" x2="1793.10" y2="1652.65" stroke="#d6d6d6" stroke-width="1.3" /><line x1="1984.00" y1="1599.30" x2="1984.00" y2="1652.65" stroke="#d6d6d6" stroke-width="1.3" /><line x1="2174.90" y1="1599.30" x2="2174.90" y2="1652.65" stroke="#d6d6d6" stroke-width="1.3" /><line x1="2365.80" y1="1599.30" x2="2365.80" y2="1652.65" stroke="#d6d6d6" stroke-width="1.3" /><line x1="2556.70" y1="1599.30" x2="2556.70" y2="1652.65" stroke="#d6d6d6" stroke-width="1.3" /><line x1="2747.60" y1="1599.30" x2="2747.60" y2="1652.65" stroke="#d6d6d6" stroke-width="1.3" /><line x1="2938.50" y1="1599.30" x2="2938.50" y2="1652.65" stroke="#d6d6d6" stroke-width="1.3" /><line x1="3129.40" y1="1599.30" x2="3129.40" y2="1652.65" stroke="#d6d6d6" stroke-width="1.3" /><line x1="3320.30" y1="1599.30" x2="3320.30" y2="1652.65" stroke="#d6d6d6" stroke-width="1.3" /><line x1="3511.20" y1="1599.30" x2="3511.20" y2="1652.65" stroke="#d6d6d6" stroke-width="1.3" /><line x1="3702.10" y1="1599.30" x2="3702.10" y2="1652.65" stroke="#d6d6d6" stroke-width="1.3" /><line x1="265.90" y1="1652.65" x2="265.90" y2="1706.00" stroke="#d6d6d6" stroke-width="1.3" /><line x1="456.80" y1="1652.65" x2="456.80" y2="1706.00" stroke="#d6d6d6" stroke-width="1.3" /><line x1="647.70" y1="1652.65" x2="647.70" y2="1706.00" stroke="#d6d6d6" stroke-width="1.3" /><line x1="838.60" y1="1652.65" x2="838.60" y2="1706.00" stroke="#d6d6d6" stroke-width="1.3" /><line x1="1029.50" y1="1652.65" x2="1029.50" y2="1706.00" stroke="#d6d6d6" stroke-width="1.3" /><line x1="1220.40" y1="1652.65" x2="1220.40" y2="1706.00" stroke="#d6d6d6" stroke-width="1.3" /><line x1="1411.30" y1="1652.65" x2="1411.30" y2="1706.00" stroke="#d6d6d6" stroke-width="1.3" /><line x1="1602.20" y1="1652.65" x2="1602.20" y2="1706.00" stroke="#d6d6d6" stroke-width="1.3" /><line x1="1793.10" y1="1652.65" x2="1793.10" y2="1706.00" stroke="#d6d6d6" stroke-width="1.3" /><line x1="1984.00" y1="1652.65" x2="1984.00" y2="1706.00" stroke="#d6d6d6" stroke-width="1.3" /><line x1="2174.90" y1="1652.65" x2="2174.90" y2="1706.00" stroke="#d6d6d6" stroke-width="1.3" /><line x1="2365.80" y1="1652.65" x2="2365.80" y2="1706.00" stroke="#d6d6d6" stroke-width="1.3" /><line x1="2556.70" y1="1652.65" x2="2556.70" y2="1706.00" stroke="#d6d6d6" stroke-width="1.3" /><line x1="2747.60" y1="1652.65" x2="2747.60" y2="1706.00" stroke="#d6d6d6" stroke-width="1.3" /><line x1="2938.50" y1="1652.65" x2="2938.50" y2="1706.00" stroke="#d6d6d6" stroke-width="1.3" /><line x1="3129.40" y1="1652.65" x2="3129.40" y2="1706.00" stroke="#d6d6d6" stroke-width="1.3" /><line x1="3320.30" y1="1652.65" x2="3320.30" y2="1706.00" stroke="#d6d6d6" stroke-width="1.3" /><line x1="3511.20" y1="1652.65" x2="3511.20" y2="1706.00" stroke="#d6d6d6" stroke-width="1.3" /><line x1="3702.10" y1="1652.65" x2="3702.10" y2="1706.00" stroke="#d6d6d6" stroke-width="1.3" /><line x1="265.90" y1="1706.00" x2="265.90" y2="1759.35" stroke="#d6d6d6" stroke-width="1.3" /><line x1="456.80" y1="1706.00" x2="456.80" y2="1759.35" stroke="#d6d6d6" stroke-width="1.3" /><line x1="647.70" y1="1706.00" x2="647.70" y2="1759.35" stroke="#d6d6d6" stroke-width="1.3" /><line x1="838.60" y1="1706.00" x2="838.60" y2="1759.35" stroke="#d6d6d6" stroke-width="1.3" /><line x1="1029.50" y1="1706.00" x2="1029.50" y2="1759.35" stroke="#d6d6d6" stroke-width="1.3" /><line x1="1220.40" y1="1706.00" x2="1220.40" y2="1759.35" stroke="#d6d6d6" stroke-width="1.3" /><line x1="1411.30" y1="1706.00" x2="1411.30" y2="1759.35" stroke="#d6d6d6" stroke-width="1.3" /><line x1="1602.20" y1="1706.00" x2="1602.20" y2="1759.35" stroke="#d6d6d6" stroke-width="1.3" /><line x1="1793.10" y1="1706.00" x2="1793.10" y2="1759.35" stroke="#d6d6d6" stroke-width="1.3" /><line x1="1984.00" y1="1706.00" x2="1984.00" y2="1759.35" stroke="#d6d6d6" stroke-width="1.3" /><line x1="2174.90" y1="1706.00" x2="2174.90" y2="1759.35" stroke="#d6d6d6" stroke-width="1.3" /><line x1="2365.80" y1="1706.00" x2="2365.80" y2="1759.35" stroke="#d6d6d6" stroke-width="1.3" /><line x1="2556.70" y1="1706.00" x2="2556.70" y2="1759.35" stroke="#d6d6d6" stroke-width="1.3" /><line x1="2747.60" y1="1706.00" x2="2747.60" y2="1759.35" stroke="#d6d6d6" stroke-width="1.3" /><line x1="2938.50" y1="1706.00" x2="2938.50" y2="1759.35" stroke="#d6d6d6" stroke-width="1.3" /><line x1="3129.40" y1="1706.00" x2="3129.40" y2="1759.35" stroke="#d6d6d6" stroke-width="1.3" /><line x1="3320.30" y1="1706.00" x2="3320.30" y2="1759.35" stroke="#d6d6d6" stroke-width="1.3" /><line x1="3511.20" y1="1706.00" x2="3511.20" y2="1759.35" stroke="#d6d6d6" stroke-width="1.3" /><line x1="3702.10" y1="1706.00" x2="3702.10" y2="1759.35" stroke="#d6d6d6" stroke-width="1.3" /><line x1="265.90" y1="1759.35" x2="265.90" y2="1812.70" stroke="#d6d6d6" stroke-width="1.3" /><line x1="456.80" y1="1759.35" x2="456.80" y2="1812.70" stroke="#d6d6d6" stroke-width="1.3" /><line x1="838.60" y1="1759.35" x2="838.60" y2="1812.70" stroke="#d6d6d6" stroke-width="1.3" /><line x1="1029.50" y1="1759.35" x2="1029.50" y2="1812.70" stroke="#d6d6d6" stroke-width="1.3" /><line x1="1220.40" y1="1759.35" x2="1220.40" y2="1812.70" stroke="#d6d6d6" stroke-width="1.3" /><line x1="1411.30" y1="1759.35" x2="1411.30" y2="1812.70" stroke="#d6d6d6" stroke-width="1.3" /><line x1="1602.20" y1="1759.35" x2="1602.20" y2="1812.70" stroke="#d6d6d6" stroke-width="1.3" /><line x1="1793.10" y1="1759.35" x2="1793.10" y2="1812.70" stroke="#d6d6d6" stroke-width="1.3" /><line x1="1984.00" y1="1759.35" x2="1984.00" y2="1812.70" stroke="#d6d6d6" stroke-width="1.3" /><line x1="2174.90" y1="1759.35" x2="2174.90" y2="1812.70" stroke="#d6d6d6" stroke-width="1.3" /><line x1="2365.80" y1="1759.35" x2="2365.80" y2="1812.70" stroke="#d6d6d6" stroke-width="1.3" /><line x1="2556.70" y1="1759.35" x2="2556.70" y2="1812.70" stroke="#d6d6d6" stroke-width="1.3" /><line x1="2747.60" y1="1759.35" x2="2747.60" y2="1812.70" stroke="#d6d6d6" stroke-width="1.3" /><line x1="2938.50" y1="1759.35" x2="2938.50" y2="1812.70" stroke="#d6d6d6" stroke-width="1.3" /><line x1="3129.40" y1="1759.35" x2="3129.40" y2="1812.70" stroke="#d6d6d6" stroke-width="1.3" /><line x1="3320.30" y1="1759.35" x2="3320.30" y2="1812.70" stroke="#d6d6d6" stroke-width="1.3" /><line x1="3511.20" y1="1759.35" x2="3511.20" y2="1812.70" stroke="#d6d6d6" stroke-width="1.3" /><line x1="3702.10" y1="1759.35" x2="3702.10" y2="1812.70" stroke="#d6d6d6" stroke-width="1.3" /><line x1="265.90" y1="1812.70" x2="265.90" y2="1866.05" stroke="#d6d6d6" stroke-width="1.3" /><line x1="456.80" y1="1812.70" x2="456.80" y2="1866.05" stroke="#d6d6d6" stroke-width="1.3" /><line x1="647.70" y1="1812.70" x2="647.70" y2="1866.05" stroke="#d6d6d6" stroke-width="1.3" /><line x1="838.60" y1="1812.70" x2="838.60" y2="1866.05" stroke="#d6d6d6" stroke-width="1.3" /><line x1="1029.50" y1="1812.70" x2="1029.50" y2="1866.05" stroke="#d6d6d6" stroke-width="1.3" /><line x1="1220.40" y1="1812.70" x2="1220.40" y2="1866.05" stroke="#d6d6d6" stroke-width="1.3" /><line x1="1411.30" y1="1812.70" x2="1411.30" y2="1866.05" stroke="#d6d6d6" stroke-width="1.3" /><line x1="1602.20" y1="1812.70" x2="1602.20" y2="1866.05" stroke="#d6d6d6" stroke-width="1.3" /><line x1="1793.10" y1="1812.70" x2="1793.10" y2="1866.05" stroke="#d6d6d6" stroke-width="1.3" /><line x1="1984.00" y1="1812.70" x2="1984.00" y2="1866.05" stroke="#d6d6d6" stroke-width="1.3" /><line x1="2174.90" y1="1812.70" x2="2174.90" y2="1866.05" stroke="#d6d6d6" stroke-width="1.3" /><line x1="2365.80" y1="1812.70" x2="2365.80" y2="1866.05" stroke="#d6d6d6" stroke-width="1.3" /><line x1="2556.70" y1="1812.70" x2="2556.70" y2="1866.05" stroke="#d6d6d6" stroke-width="1.3" /><line x1="2747.60" y1="1812.70" x2="2747.60" y2="1866.05" stroke="#d6d6d6" stroke-width="1.3" /><line x1="2938.50" y1="1812.70" x2="2938.50" y2="1866.05" stroke="#d6d6d6" stroke-width="1.3" /><line x1="3129.40" y1="1812.70" x2="3129.40" y2="1866.05" stroke="#d6d6d6" stroke-width="1.3" /><line x1="3320.30" y1="1812.70" x2="3320.30" y2="1866.05" stroke="#d6d6d6" stroke-width="1.3" /><line x1="3511.20" y1="1812.70" x2="3511.20" y2="1866.05" stroke="#d6d6d6" stroke-width="1.3" /><line x1="3702.10" y1="1812.70" x2="3702.10" y2="1866.05" stroke="#d6d6d6" stroke-width="1.3" /><line x1="265.90" y1="1866.05" x2="265.90" y2="1919.40" stroke="#d6d6d6" stroke-width="1.3" /><line x1="456.80" y1="1866.05" x2="456.80" y2="1919.40" stroke="#d6d6d6" stroke-width="1.3" /><line x1="647.70" y1="1866.05" x2="647.70" y2="1919.40" stroke="#d6d6d6" stroke-width="1.3" /><line x1="838.60" y1="1866.05" x2="838.60" y2="1919.40" stroke="#d6d6d6" stroke-width="1.3" /><line x1="1029.50" y1="1866.05" x2="1029.50" y2="1919.40" stroke="#d6d6d6" stroke-width="1.3" /><line x1="1220.40" y1="1866.05" x2="1220.40" y2="1919.40" stroke="#d6d6d6" stroke-width="1.3" /><line x1="1411.30" y1="1866.05" x2="1411.30" y2="1919.40" stroke="#d6d6d6" stroke-width="1.3" /><line x1="1602.20" y1="1866.05" x2="1602.20" y2="1919.40" stroke="#d6d6d6" stroke-width="1.3" /><line x1="1793.10" y1="1866.05" x2="1793.10" y2="1919.40" stroke="#d6d6d6" stroke-width="1.3" /><line x1="1984.00" y1="1866.05" x2="1984.00" y2="1919.40" stroke="#d6d6d6" stroke-width="1.3" /><line x1="2174.90" y1="1866.05" x2="2174.90" y2="1919.40" stroke="#d6d6d6" stroke-width="1.3" /><line x1="2365.80" y1="1866.05" x2="2365.80" y2="1919.40" stroke="#d6d6d6" stroke-width="1.3" /><line x1="2556.70" y1="1866.05" x2="2556.70" y2="1919.40" stroke="#d6d6d6" stroke-width="1.3" /><line x1="2747.60" y1="1866.05" x2="2747.60" y2="1919.40" stroke="#d6d6d6" stroke-width="1.3" /><line x1="2938.50" y1="1866.05" x2="2938.50" y2="1919.40" stroke="#d6d6d6" stroke-width="1.3" /><line x1="3129.40" y1="1866.05" x2="3129.40" y2="1919.40" stroke="#d6d6d6" stroke-width="1.3" /><line x1="3320.30" y1="1866.05" x2="3320.30" y2="1919.40" stroke="#d6d6d6" stroke-width="1.3" /><line x1="3511.20" y1="1866.05" x2="3511.20" y2="1919.40" stroke="#d6d6d6" stroke-width="1.3" /><line x1="3702.10" y1="1866.05" x2="3702.10" y2="1919.40" stroke="#d6d6d6" stroke-width="1.3" /><line x1="265.90" y1="1919.40" x2="265.90" y2="1972.75" stroke="#d6d6d6" stroke-width="1.3" /><line x1="456.80" y1="1919.40" x2="456.80" y2="1972.75" stroke="#d6d6d6" stroke-width="1.3" /><line x1="838.60" y1="1919.40" x2="838.60" y2="1972.75" stroke="#d6d6d6" stroke-width="1.3" /><line x1="1029.50" y1="1919.40" x2="1029.50" y2="1972.75" stroke="#d6d6d6" stroke-width="1.3" /><line x1="1220.40" y1="1919.40" x2="1220.40" y2="1972.75" stroke="#d6d6d6" stroke-width="1.3" /><line x1="1411.30" y1="1919.40" x2="1411.30" y2="1972.75" stroke="#d6d6d6" stroke-width="1.3" /><line x1="1602.20" y1="1919.40" x2="1602.20" y2="1972.75" stroke="#d6d6d6" stroke-width="1.3" /><line x1="1793.10" y1="1919.40" x2="1793.10" y2="1972.75" stroke="#d6d6d6" stroke-width="1.3" /><line x1="1984.00" y1="1919.40" x2="1984.00" y2="1972.75" stroke="#d6d6d6" stroke-width="1.3" /><line x1="2174.90" y1="1919.40" x2="2174.90" y2="1972.75" stroke="#d6d6d6" stroke-width="1.3" /><line x1="2365.80" y1="1919.40" x2="2365.80" y2="1972.75" stroke="#d6d6d6" stroke-width="1.3" /><line x1="2556.70" y1="1919.40" x2="2556.70" y2="1972.75" stroke="#d6d6d6" stroke-width="1.3" /><line x1="2747.60" y1="1919.40" x2="2747.60" y2="1972.75" stroke="#d6d6d6" stroke-width="1.3" /><line x1="2938.50" y1="1919.40" x2="2938.50" y2="1972.75" stroke="#d6d6d6" stroke-width="1.3" /><line x1="3129.40" y1="1919.40" x2="3129.40" y2="1972.75" stroke="#d6d6d6" stroke-width="1.3" /><line x1="3320.30" y1="1919.40" x2="3320.30" y2="1972.75" stroke="#d6d6d6" stroke-width="1.3" /><line x1="3511.20" y1="1919.40" x2="3511.20" y2="1972.75" stroke="#d6d6d6" stroke-width="1.3" /><line x1="3702.10" y1="1919.40" x2="3702.10" y2="1972.75" stroke="#d6d6d6" stroke-width="1.3" /><line x1="265.90" y1="1972.75" x2="265.90" y2="2026.10" stroke="#d6d6d6" stroke-width="1.3" /><line x1="456.80" y1="1972.75" x2="456.80" y2="2026.10" stroke="#d6d6d6" stroke-width="1.3" /><line x1="647.70" y1="1972.75" x2="647.70" y2="2026.10" stroke="#d6d6d6" stroke-width="1.3" /><line x1="838.60" y1="1972.75" x2="838.60" y2="2026.10" stroke="#d6d6d6" stroke-width="1.3" /><line x1="1029.50" y1="1972.75" x2="1029.50" y2="2026.10" stroke="#d6d6d6" stroke-width="1.3" /><line x1="1220.40" y1="1972.75" x2="1220.40" y2="2026.10" stroke="#d6d6d6" stroke-width="1.3" /><line x1="1411.30" y1="1972.75" x2="1411.30" y2="2026.10" stroke="#d6d6d6" stroke-width="1.3" /><line x1="1602.20" y1="1972.75" x2="1602.20" y2="2026.10" stroke="#d6d6d6" stroke-width="1.3" /><line x1="1793.10" y1="1972.75" x2="1793.10" y2="2026.10" stroke="#d6d6d6" stroke-width="1.3" /><line x1="1984.00" y1="1972.75" x2="1984.00" y2="2026.10" stroke="#d6d6d6" stroke-width="1.3" /><line x1="2174.90" y1="1972.75" x2="2174.90" y2="2026.10" stroke="#d6d6d6" stroke-width="1.3" /><line x1="2365.80" y1="1972.75" x2="2365.80" y2="2026.10" stroke="#d6d6d6" stroke-width="1.3" /><line x1="2556.70" y1="1972.75" x2="2556.70" y2="2026.10" stroke="#d6d6d6" stroke-width="1.3" /><line x1="2747.60" y1="1972.75" x2="2747.60" y2="2026.10" stroke="#d6d6d6" stroke-width="1.3" /><line x1="2938.50" y1="1972.75" x2="2938.50" y2="2026.10" stroke="#d6d6d6" stroke-width="1.3" /><line x1="3129.40" y1="1972.75" x2="3129.40" y2="2026.10" stroke="#d6d6d6" stroke-width="1.3" /><line x1="3320.30" y1="1972.75" x2="3320.30" y2="2026.10" stroke="#d6d6d6" stroke-width="1.3" /><line x1="3511.20" y1="1972.75" x2="3511.20" y2="2026.10" stroke="#d6d6d6" stroke-width="1.3" /><line x1="3702.10" y1="1972.75" x2="3702.10" y2="2026.10" stroke="#d6d6d6" stroke-width="1.3" /><line x1="265.90" y1="2026.10" x2="265.90" y2="2079.45" stroke="#d6d6d6" stroke-width="1.3" /><line x1="456.80" y1="2026.10" x2="456.80" y2="2079.45" stroke="#d6d6d6" stroke-width="1.3" /><line x1="647.70" y1="2026.10" x2="647.70" y2="2079.45" stroke="#d6d6d6" stroke-width="1.3" /><line x1="838.60" y1="2026.10" x2="838.60" y2="2079.45" stroke="#d6d6d6" stroke-width="1.3" /><line x1="1029.50" y1="2026.10" x2="1029.50" y2="2079.45" stroke="#d6d6d6" stroke-width="1.3" /><line x1="1220.40" y1="2026.10" x2="1220.40" y2="2079.45" stroke="#d6d6d6" stroke-width="1.3" /><line x1="1411.30" y1="2026.10" x2="1411.30" y2="2079.45" stroke="#d6d6d6" stroke-width="1.3" /><line x1="1602.20" y1="2026.10" x2="1602.20" y2="2079.45" stroke="#d6d6d6" stroke-width="1.3" /><line x1="1793.10" y1="2026.10" x2="1793.10" y2="2079.45" stroke="#d6d6d6" stroke-width="1.3" /><line x1="1984.00" y1="2026.10" x2="1984.00" y2="2079.45" stroke="#d6d6d6" stroke-width="1.3" /><line x1="2174.90" y1="2026.10" x2="2174.90" y2="2079.45" stroke="#d6d6d6" stroke-width="1.3" /><line x1="2365.80" y1="2026.10" x2="2365.80" y2="2079.45" stroke="#d6d6d6" stroke-width="1.3" /><line x1="2556.70" y1="2026.10" x2="2556.70" y2="2079.45" stroke="#d6d6d6" stroke-width="1.3" /><line x1="2747.60" y1="2026.10" x2="2747.60" y2="2079.45" stroke="#d6d6d6" stroke-width="1.3" /><line x1="2938.50" y1="2026.10" x2="2938.50" y2="2079.45" stroke="#d6d6d6" stroke-width="1.3" /><line x1="3129.40" y1="2026.10" x2="3129.40" y2="2079.45" stroke="#d6d6d6" stroke-width="1.3" /><line x1="3320.30" y1="2026.10" x2="3320.30" y2="2079.45" stroke="#d6d6d6" stroke-width="1.3" /><line x1="3511.20" y1="2026.10" x2="3511.20" y2="2079.45" stroke="#d6d6d6" stroke-width="1.3" /><line x1="3702.10" y1="2026.10" x2="3702.10" y2="2079.45" stroke="#d6d6d6" stroke-width="1.3" /><line x1="265.90" y1="2079.45" x2="265.90" y2="2132.80" stroke="#d6d6d6" stroke-width="1.3" /><line x1="456.80" y1="2079.45" x2="456.80" y2="2132.80" stroke="#d6d6d6" stroke-width="1.3" /><line x1="647.70" y1="2079.45" x2="647.70" y2="2132.80" stroke="#d6d6d6" stroke-width="1.3" /><line x1="838.60" y1="2079.45" x2="838.60" y2="2132.80" stroke="#d6d6d6" stroke-width="1.3" /><line x1="1029.50" y1="2079.45" x2="1029.50" y2="2132.80" stroke="#d6d6d6" stroke-width="1.3" /><line x1="1220.40" y1="2079.45" x2="1220.40" y2="2132.80" stroke="#d6d6d6" stroke-width="1.3" /><line x1="1411.30" y1="2079.45" x2="1411.30" y2="2132.80" stroke="#d6d6d6" stroke-width="1.3" /><line x1="1602.20" y1="2079.45" x2="1602.20" y2="2132.80" stroke="#d6d6d6" stroke-width="1.3" /><line x1="1793.10" y1="2079.45" x2="1793.10" y2="2132.80" stroke="#d6d6d6" stroke-width="1.3" /><line x1="1984.00" y1="2079.45" x2="1984.00" y2="2132.80" stroke="#d6d6d6" stroke-width="1.3" /><line x1="2174.90" y1="2079.45" x2="2174.90" y2="2132.80" stroke="#d6d6d6" stroke-width="1.3" /><line x1="2365.80" y1="2079.45" x2="2365.80" y2="2132.80" stroke="#d6d6d6" stroke-width="1.3" /><line x1="2556.70" y1="2079.45" x2="2556.70" y2="2132.80" stroke="#d6d6d6" stroke-width="1.3" /><line x1="2747.60" y1="2079.45" x2="2747.60" y2="2132.80" stroke="#d6d6d6" stroke-width="1.3" /><line x1="2938.50" y1="2079.45" x2="2938.50" y2="2132.80" stroke="#d6d6d6" stroke-width="1.3" /><line x1="3129.40" y1="2079.45" x2="3129.40" y2="2132.80" stroke="#d6d6d6" stroke-width="1.3" /><line x1="3320.30" y1="2079.45" x2="3320.30" y2="2132.80" stroke="#d6d6d6" stroke-width="1.3" /><line x1="3511.20" y1="2079.45" x2="3511.20" y2="2132.80" stroke="#d6d6d6" stroke-width="1.3" /><line x1="3702.10" y1="2079.45" x2="3702.10" y2="2132.80" stroke="#d6d6d6" stroke-width="1.3" /><line x1="265.90" y1="2132.80" x2="265.90" y2="2186.15" stroke="#d6d6d6" stroke-width="1.3" /><line x1="456.80" y1="2132.80" x2="456.80" y2="2186.15" stroke="#d6d6d6" stroke-width="1.3" /><line x1="647.70" y1="2132.80" x2="647.70" y2="2186.15" stroke="#d6d6d6" stroke-width="1.3" /><line x1="838.60" y1="2132.80" x2="838.60" y2="2186.15" stroke="#d6d6d6" stroke-width="1.3" /><line x1="1029.50" y1="2132.80" x2="1029.50" y2="2186.15" stroke="#d6d6d6" stroke-width="1.3" /><line x1="1220.40" y1="2132.80" x2="1220.40" y2="2186.15" stroke="#d6d6d6" stroke-width="1.3" /><line x1="1411.30" y1="2132.80" x2="1411.30" y2="2186.15" stroke="#d6d6d6" stroke-width="1.3" /><line x1="1602.20" y1="2132.80" x2="1602.20" y2="2186.15" stroke="#d6d6d6" stroke-width="1.3" /><line x1="1793.10" y1="2132.80" x2="1793.10" y2="2186.15" stroke="#d6d6d6" stroke-width="1.3" /><line x1="1984.00" y1="2132.80" x2="1984.00" y2="2186.15" stroke="#d6d6d6" stroke-width="1.3" /><line x1="2174.90" y1="2132.80" x2="2174.90" y2="2186.15" stroke="#d6d6d6" stroke-width="1.3" /><line x1="2365.80" y1="2132.80" x2="2365.80" y2="2186.15" stroke="#d6d6d6" stroke-width="1.3" /><line x1="2556.70" y1="2132.80" x2="2556.70" y2="2186.15" stroke="#d6d6d6" stroke-width="1.3" /><line x1="2747.60" y1="2132.80" x2="2747.60" y2="2186.15" stroke="#d6d6d6" stroke-width="1.3" /><line x1="2938.50" y1="2132.80" x2="2938.50" y2="2186.15" stroke="#d6d6d6" stroke-width="1.3" /><line x1="3129.40" y1="2132.80" x2="3129.40" y2="2186.15" stroke="#d6d6d6" stroke-width="1.3" /><line x1="3320.30" y1="2132.80" x2="3320.30" y2="2186.15" stroke="#d6d6d6" stroke-width="1.3" /><line x1="3511.20" y1="2132.80" x2="3511.20" y2="2186.15" stroke="#d6d6d6" stroke-width="1.3" /><line x1="3702.10" y1="2132.80" x2="3702.10" y2="2186.15" stroke="#d6d6d6" stroke-width="1.3" /><line x1="265.90" y1="2186.15" x2="265.90" y2="2239.50" stroke="#d6d6d6" stroke-width="1.3" /><line x1="456.80" y1="2186.15" x2="456.80" y2="2239.50" stroke="#d6d6d6" stroke-width="1.3" /><line x1="647.70" y1="2186.15" x2="647.70" y2="2239.50" stroke="#d6d6d6" stroke-width="1.3" /><line x1="838.60" y1="2186.15" x2="838.60" y2="2239.50" stroke="#d6d6d6" stroke-width="1.3" /><line x1="1029.50" y1="2186.15" x2="1029.50" y2="2239.50" stroke="#d6d6d6" stroke-width="1.3" /><line x1="1220.40" y1="2186.15" x2="1220.40" y2="2239.50" stroke="#d6d6d6" stroke-width="1.3" /><line x1="1411.30" y1="2186.15" x2="1411.30" y2="2239.50" stroke="#d6d6d6" stroke-width="1.3" /><line x1="1602.20" y1="2186.15" x2="1602.20" y2="2239.50" stroke="#d6d6d6" stroke-width="1.3" /><line x1="1793.10" y1="2186.15" x2="1793.10" y2="2239.50" stroke="#d6d6d6" stroke-width="1.3" /><line x1="1984.00" y1="2186.15" x2="1984.00" y2="2239.50" stroke="#d6d6d6" stroke-width="1.3" /><line x1="2174.90" y1="2186.15" x2="2174.90" y2="2239.50" stroke="#d6d6d6" stroke-width="1.3" /><line x1="2365.80" y1="2186.15" x2="2365.80" y2="2239.50" stroke="#d6d6d6" stroke-width="1.3" /><line x1="2556.70" y1="2186.15" x2="2556.70" y2="2239.50" stroke="#d6d6d6" stroke-width="1.3" /><line x1="2747.60" y1="2186.15" x2="2747.60" y2="2239.50" stroke="#d6d6d6" stroke-width="1.3" /><line x1="2938.50" y1="2186.15" x2="2938.50" y2="2239.50" stroke="#d6d6d6" stroke-width="1.3" /><line x1="3129.40" y1="2186.15" x2="3129.40" y2="2239.50" stroke="#d6d6d6" stroke-width="1.3" /><line x1="3320.30" y1="2186.15" x2="3320.30" y2="2239.50" stroke="#d6d6d6" stroke-width="1.3" /><line x1="3511.20" y1="2186.15" x2="3511.20" y2="2239.50" stroke="#d6d6d6" stroke-width="1.3" /><line x1="3702.10" y1="2186.15" x2="3702.10" y2="2239.50" stroke="#d6d6d6" stroke-width="1.3" /><line x1="265.90" y1="2239.50" x2="265.90" y2="2292.85" stroke="#d6d6d6" stroke-width="1.3" /><line x1="456.80" y1="2239.50" x2="456.80" y2="2292.85" stroke="#d6d6d6" stroke-width="1.3" /><line x1="838.60" y1="2239.50" x2="838.60" y2="2292.85" stroke="#d6d6d6" stroke-width="1.3" /><line x1="1029.50" y1="2239.50" x2="1029.50" y2="2292.85" stroke="#d6d6d6" stroke-width="1.3" /><line x1="1220.40" y1="2239.50" x2="1220.40" y2="2292.85" stroke="#d6d6d6" stroke-width="1.3" /><line x1="1411.30" y1="2239.50" x2="1411.30" y2="2292.85" stroke="#d6d6d6" stroke-width="1.3" /><line x1="1602.20" y1="2239.50" x2="1602.20" y2="2292.85" stroke="#d6d6d6" stroke-width="1.3" /><line x1="1793.10" y1="2239.50" x2="1793.10" y2="2292.85" stroke="#d6d6d6" stroke-width="1.3" /><line x1="1984.00" y1="2239.50" x2="1984.00" y2="2292.85" stroke="#d6d6d6" stroke-width="1.3" /><line x1="2174.90" y1="2239.50" x2="2174.90" y2="2292.85" stroke="#d6d6d6" stroke-width="1.3" /><line x1="2365.80" y1="2239.50" x2="2365.80" y2="2292.85" stroke="#d6d6d6" stroke-width="1.3" /><line x1="2556.70" y1="2239.50" x2="2556.70" y2="2292.85" stroke="#d6d6d6" stroke-width="1.3" /><line x1="2747.60" y1="2239.50" x2="2747.60" y2="2292.85" stroke="#d6d6d6" stroke-width="1.3" /><line x1="2938.50" y1="2239.50" x2="2938.50" y2="2292.85" stroke="#d6d6d6" stroke-width="1.3" /><line x1="3129.40" y1="2239.50" x2="3129.40" y2="2292.85" stroke="#d6d6d6" stroke-width="1.3" /><line x1="3320.30" y1="2239.50" x2="3320.30" y2="2292.85" stroke="#d6d6d6" stroke-width="1.3" /><line x1="3511.20" y1="2239.50" x2="3511.20" y2="2292.85" stroke="#d6d6d6" stroke-width="1.3" /><line x1="3702.10" y1="2239.50" x2="3702.10" y2="2292.85" stroke="#d6d6d6" stroke-width="1.3" /><line x1="3786.00" y1="639.00" x2="3786.00" y2="2295.00" stroke="#ababab" stroke-width="1.6" /><rect x="3786.80" y="587.00" width="53.20" height="1708.00" fill="#e6e6e6" /><rect x="3790.7" y="589.3" width="44" height="45" fill="#fff" stroke="#ababab" stroke-width="1.2"/><polygon points="3800.50,618.00 3823.50,618.00 3812.00,605.00" fill="#6a6a6a"/><rect x="3790.7" y="635" width="44" height="1113" fill="#fff" stroke="#ababab" stroke-width="1.2"/><rect x="3790.20" y="1748.80" width="45.30" height="505.20" fill="#dadada" /><rect x="3790.7" y="2254.8" width="44" height="44" fill="#fff" stroke="#ababab" stroke-width="1.2"/><polygon points="3801.00,2272.80 3822.30,2272.80 3811.65,2283.60" fill="#6a6a6a"/>
</svg>
<div class="t" style="left:42.50px;top:27.23px;font-family:'Liberation Sans';font-size:34.29px;line-height:34.29px;color:#6da886;font-weight:normal;font-style:normal;transform:scaleX(0.9552);transform-origin:0 0;">AutoSave</div><div class="t" style="left:245.71px;top:28.52px;font-family:'Liberation Sans';font-size:28.97px;line-height:28.97px;color:#6da886;font-weight:normal;font-style:normal;transform:scaleX(0.9883);transform-origin:0 0;">Off</div><div class="t" style="left:1773.43px;top:26.61px;font-family:'Liberation Sans';font-size:37.14px;line-height:37.14px;color:#ffffff;font-weight:normal;font-style:normal;transform:scaleX(0.8439);transform-origin:0 0;">2393_1.csv</div><div class="t" style="left:1986.29px;top:27.70px;font-family:'Liberation Sans';font-size:35.86px;line-height:35.86px;color:#ffffff;font-weight:normal;font-style:normal;transform:scaleX(0.8753);transform-origin:0 0;">Excel</div><div class="t" style="left:3114.52px;top:22.70px;font-family:'Liberation Sans';font-size:35.86px;line-height:35.86px;color:#ffffff;font-weight:normal;font-style:normal;transform:scaleX(0.9168);transform-origin:0 0;">Shion Deysarkar</div><div class="t" style="left:3745.97px;top:122.99px;font-family:'Liberation Sans';font-size:30.90px;line-height:30.90px;color:#ffffff;font-weight:normal;font-style:normal;transform:scaleX(1.0319);transform-origin:0 0;">Share</div><div class="t" style="left:62.99px;top:116.56px;font-family:'Liberation Sans';font-size:33.66px;line-height:33.66px;color:#ffffff;font-weight:normal;font-style:normal;transform:scaleX(1.0064);transform-origin:0 0;">File</div><div class="t" style="left:226.13px;top:115.12px;font-family:'Liberation Sans';font-size:35.36px;line-height:35.36px;color:#217346;font-weight:normal;font-style:normal;transform:scaleX(0.9808);transform-origin:0 0;">Home</div><div class="t" style="left:404.97px;top:115.12px;font-family:'Liberation Sans';font-size:35.36px;line-height:35.36px;color:#ffffff;font-weight:normal;font-style:normal;transform:scaleX(0.9524);transform-origin:0 0;">Insert</div><div class="t" style="left:575.28px;top:115.12px;font-family:'Liberation Sans';font-size:35.36px;line-height:35.36px;color:#ffffff;font-weight:normal;font-style:normal;transform:scaleX(0.9606);transform-origin:0 0;">Draw</div><div class="t" style="left:739.37px;top:115.12px;font-family:'Liberation Sans';font-size:35.36px;line-height:35.36px;color:#ffffff;font-weight:normal;font-style:normal;transform:scaleX(0.9292);transform-origin:0 0;">Page Layout</div><div class="t" style="left:1009.31px;top:116.56px;font-family:'Liberation Sans';font-size:33.66px;line-height:33.66px;color:#ffffff;font-weight:normal;font-style:normal;">Formulas</div><div class="t" style="left:1234.32px;top:115.12px;font-family:'Liberation Sans';font-size:35.36px;line-height:35.36px;color:#ffffff;font-weight:normal;font-style:normal;transform:scaleX(0.9473);transform-origin:0 0;">Data</div><div class="t" style="left:1391.42px;top:116.56px;font-family:'Liberation Sans';font-size:33.66px;line-height:33.66px;color:#ffffff;font-weight:normal;font-style:normal;transform:scaleX(0.9564);transform-origin:0 0;">Review</div><div class="t" style="left:1586.83px;top:116.56px;font-family:'Liberation Sans';font-size:33.66px;line-height:33.66px;color:#ffffff;font-weight:normal;font-style:normal;transform:scaleX(0.9835);transform-origin:0 0;">View</div><div class="t" style="left:1743.15px;top:116.56px;font-family:'Liberation Sans';font-size:33.66px;line-height:33.66px;color:#ffffff;font-weight:normal;font-style:normal;transform:scaleX(1.0595);transform-origin:0 0;">Help</div><div class="t" style="left:1933.30px;top:120.79px;font-family:'Liberation Sans';font-size:33.38px;line-height:33.38px;color:#e2ebe5;font-weight:normal;font-style:normal;transform:scaleX(1.0417);transform-origin:0 0;">Tell me what you want to do</div><div class="t" style="left:59.51px;top:432.69px;font-family:'Liberation Sans';font-size:27.59px;line-height:27.59px;color:#444444;font-weight:normal;font-style:normal;transform:scaleX(1.0792);transform-origin:0 0;">Clipboard</div><div class="t" style="left:542.70px;top:431.51px;font-family:'Liberation Sans';font-size:28.99px;line-height:28.99px;color:#444444;font-weight:normal;font-style:normal;transform:scaleX(0.9909);transform-origin:0 0;">Font</div><div class="t" style="left:1244.00px;top:432.69px;font-family:'Liberation Sans';font-size:27.59px;line-height:27.59px;color:#444444;font-weight:normal;font-style:normal;transform:scaleX(1.0908);transform-origin:0 0;">Alignment</div><div class="t" style="left:1938.55px;top:432.69px;font-family:'Liberation Sans';font-size:27.59px;line-height:27.59px;color:#444444;font-weight:normal;font-style:normal;transform:scaleX(1.1105);transform-origin:0 0;">Number</div><div class="t" style="left:2478.79px;top:432.69px;font-family:'Liberation Sans';font-size:27.59px;line-height:27.59px;color:#444444;font-weight:normal;font-style:normal;transform:scaleX(0.9731);transform-origin:0 0;">Styles</div><div class="t" style="left:2957.63px;top:432.69px;font-family:'Liberation Sans';font-size:27.59px;line-height:27.59px;color:#444444;font-weight:normal;font-style:normal;transform:scaleX(0.9909);transform-origin:0 0;">Cells</div><div class="t" style="left:3368.58px;top:432.69px;font-family:'Liberation Sans';font-size:27.59px;line-height:27.59px;color:#444444;font-weight:normal;font-style:normal;transform:scaleX(1.0962);transform-origin:0 0;">Editing</div><div class="t" style="left:42.09px;top:311.25px;font-family:'Liberation Sans';font-size:32.61px;line-height:32.61px;color:#262626;font-weight:normal;font-style:normal;transform:scaleX(0.9225);transform-origin:0 0;">Paste</div><div class="t" style="left:311.12px;top:234.93px;font-family:'Liberation Sans';font-size:33.93px;line-height:33.93px;color:#262626;font-weight:normal;font-style:normal;transform:scaleX(0.9878);transform-origin:0 0;">Calibri</div><div class="t" style="left:578.54px;top:234.70px;font-family:'Liberation Sans';font-size:34.20px;line-height:34.20px;color:#262626;font-weight:normal;font-style:normal;transform:scaleX(0.9586);transform-origin:0 0;">11</div><div class="t" style="left:730.21px;top:231.19px;font-family:'Liberation Sans';font-size:42.03px;line-height:42.03px;color:#5f5f5f;font-weight:bold;font-style:normal;transform:scaleX(0.9446);transform-origin:0 0;">A</div><div class="t" style="left:824.20px;top:232.49px;font-family:'Liberation Sans';font-size:42.03px;line-height:42.03px;color:#5f5f5f;font-weight:bold;font-style:normal;transform:scaleX(0.9553);transform-origin:0 0;">A</div><div class="t" style="left:329.65px;top:321.82px;font-family:'Liberation Sans';font-size:52.75px;line-height:52.75px;color:#5f5f5f;font-weight:bold;font-style:normal;transform:scaleX(0.8888);transform-origin:0 0;">B</div><div class="t" style="left:427.31px;top:319.44px;font-family:'Liberation Serif';font-size:55.57px;line-height:55.57px;color:#5f5f5f;font-weight:bold;font-style:italic;transform:scaleX(1.1006);transform-origin:0 0;">I</div><div class="t" style="left:508.64px;top:321.82px;font-family:'Liberation Sans';font-size:52.75px;line-height:52.75px;color:#5f5f5f;font-weight:bold;font-style:normal;transform:scaleX(0.9352);transform-origin:0 0;">U</div><div class="t" style="left:810.49px;top:321.76px;font-family:'Liberation Sans';font-size:53.19px;line-height:53.19px;color:#5a5a5a;font-weight:bold;font-style:normal;transform:scaleX(0.9064);transform-origin:0 0;">A</div><div class="t" style="left:1209px;top:226px;font-size:33px;line-height:33px;color:#555;transform:rotate(-45deg);transform-origin:18px 22px;">ab</div><div class="t" style="left:1400.67px;top:223.16px;font-family:'Liberation Sans';font-size:32.00px;line-height:32.00px;color:#555;font-weight:normal;font-style:normal;transform:scaleX(1.0407);transform-origin:0 0;">ab</div><div class="t" style="left:1401.09px;top:247.83px;font-family:'Liberation Sans';font-size:29.07px;line-height:29.07px;color:#555;font-weight:normal;font-style:normal;transform:scaleX(1.2098);transform-origin:0 0;">c</div><div class="t" style="left:1453.73px;top:235.69px;font-family:'Liberation Sans';font-size:33.62px;line-height:33.62px;color:#262626;font-weight:normal;font-style:normal;transform:scaleX(0.9838);transform-origin:0 0;">Wrap Text</div><div class="t" style="left:1447.93px;top:337.99px;font-family:'Liberation Sans';font-size:33.14px;line-height:33.14px;color:#262626;font-weight:normal;font-style:normal;transform:scaleX(1.0456);transform-origin:0 0;">Merge &amp; Center</div><div class="t" style="left:1788.37px;top:235.86px;font-family:'Liberation Sans';font-size:34.48px;line-height:34.48px;color:#262626;font-weight:normal;font-style:normal;transform:scaleX(0.9442);transform-origin:0 0;">General</div><div class="t" style="left:1807.76px;top:319.69px;font-family:'Liberation Sans';font-size:62.94px;line-height:62.94px;color:#5a5a5a;font-weight:bold;font-style:normal;transform:scaleX(0.7838);transform-origin:0 0;">$</div><div class="t" style="left:1902.10px;top:324.76px;font-family:'Liberation Sans';font-size:55.57px;line-height:55.57px;color:#5a5a5a;font-weight:normal;font-style:normal;transform:scaleX(0.9239);transform-origin:0 0;">%</div><div class="t" style="left:2108.59px;top:323.37px;font-family:'Liberation Sans';font-size:29.14px;line-height:29.14px;color:#555;font-weight:normal;font-style:normal;transform:scaleX(1.0729);transform-origin:0 0;">.0</div><div class="t" style="left:2089.90px;top:352.20px;font-family:'Liberation Sans';font-size:28.29px;line-height:28.29px;color:#555;font-weight:normal;font-style:normal;transform:scaleX(1.1403);transform-origin:0 0;">.00</div><div class="t" style="left:2182.60px;top:323.37px;font-family:'Liberation Sans';font-size:29.14px;line-height:29.14px;color:#555;font-weight:normal;font-style:normal;transform:scaleX(1.1040);transform-origin:0 0;">.00</div><div class="t" style="left:2201.19px;top:352.22px;font-family:'Liberation Sans';font-size:28.14px;line-height:28.14px;color:#555;font-weight:normal;font-style:normal;transform:scaleX(1.1110);transform-origin:0 0;">.0</div><div class="t" style="left:2285.26px;top:309.79px;font-family:'Liberation Sans';font-size:31.72px;line-height:31.72px;color:#262626;font-weight:normal;font-style:normal;transform:scaleX(1.0970);transform-origin:0 0;">Conditional</div><div class="t" style="left:2275.20px;top:354.81px;font-family:'Liberation Sans';font-size:31.59px;line-height:31.59px;color:#262626;font-weight:normal;font-style:normal;transform:scaleX(1.1065);transform-origin:0 0;">Formatting</div><div class="t" style="left:2474.39px;top:308.43px;font-family:'Liberation Sans';font-size:33.33px;line-height:33.33px;color:#262626;font-weight:normal;font-style:normal;transform:scaleX(0.9783);transform-origin:0 0;">Format as</div><div class="t" style="left:2498.35px;top:354.81px;font-family:'Liberation Sans';font-size:31.59px;line-height:31.59px;color:#262626;font-weight:normal;font-style:normal;transform:scaleX(1.0213);transform-origin:0 0;">Table</div><div class="t" style="left:2663.35px;top:309.79px;font-family:'Liberation Sans';font-size:31.72px;line-height:31.72px;color:#262626;font-weight:normal;font-style:normal;transform:scaleX(1.0409);transform-origin:0 0;">Cell</div><div class="t" style="left:2637.57px;top:354.81px;font-family:'Liberation Sans';font-size:31.59px;line-height:31.59px;color:#262626;font-weight:normal;font-style:normal;transform:scaleX(1.0054);transform-origin:0 0;">Styles</div><div class="t" style="left:2808.95px;top:310.21px;font-family:'Liberation Sans';font-size:34.78px;line-height:34.78px;color:#262626;font-weight:normal;font-style:normal;transform:scaleX(0.9743);transform-origin:0 0;">Insert</div><div class="t" style="left:2942.94px;top:311.63px;font-family:'Liberation Sans';font-size:33.10px;line-height:33.10px;color:#262626;font-weight:normal;font-style:normal;transform:scaleX(1.0412);transform-origin:0 0;">Delete</div><div class="t" style="left:3074.81px;top:308.13px;font-family:'Liberation Sans';font-size:34.64px;line-height:34.64px;color:#262626;font-weight:normal;font-style:normal;transform:scaleX(0.9702);transform-origin:0 0;">Format</div><div class="t" style="left:3365.48px;top:191.21px;font-family:'Liberation Sans';font-size:56.09px;line-height:56.09px;color:#3d7cc6;font-weight:bold;font-style:normal;transform:scaleX(0.9447);transform-origin:0 0;">A</div><div class="t" style="left:3366.65px;top:239.13px;font-family:'Liberation Sans';font-size:55.94px;line-height:55.94px;color:#9b59c9;font-weight:bold;font-style:normal;transform:scaleX(0.9856);transform-origin:0 0;">Z</div><div class="t" style="left:3362.92px;top:308.84px;font-family:'Liberation Sans';font-size:32.86px;line-height:32.86px;color:#262626;font-weight:normal;font-style:normal;transform:scaleX(1.0672);transform-origin:0 0;">Sort &amp;</div><div class="t" style="left:3362.06px;top:355.98px;font-family:'Liberation Sans';font-size:30.21px;line-height:30.21px;color:#262626;font-weight:normal;font-style:normal;transform:scaleX(1.1326);transform-origin:0 0;">Filter</div><div class="t" style="left:3493.19px;top:308.98px;font-family:'Liberation Sans';font-size:32.69px;line-height:32.69px;color:#262626;font-weight:normal;font-style:normal;transform:scaleX(1.0726);transform-origin:0 0;">Find &amp;</div><div class="t" style="left:3486.55px;top:355.04px;font-family:'Liberation Sans';font-size:31.31px;line-height:31.31px;color:#262626;font-weight:normal;font-style:normal;transform:scaleX(1.0314);transform-origin:0 0;">Select</div><div class="t" style="left:25.00px;top:510.20px;font-family:'Liberation Sans';font-size:37.39px;line-height:37.39px;color:#262626;font-weight:normal;font-style:normal;transform:scaleX(0.9446);transform-origin:0 0;">A1</div><div class="t" style="left:615.48px;top:499.61px;font-family:'Liberation Serif';font-size:45.65px;line-height:45.65px;color:#5f5f5f;font-weight:normal;font-style:italic;transform:scaleX(1.1496);transform-origin:0 0;">fx</div><div class="t" style="left:725.18px;top:509.42px;font-family:'Liberation Sans';font-size:38.21px;line-height:38.21px;color:#262626;font-weight:normal;font-style:normal;transform:scaleX(1.1362);transform-origin:0 0;">id</div><div class="t" style="left:158.81px;top:597.43px;font-family:'Liberation Sans';font-size:35.00px;line-height:35.00px;color:#217346;font-weight:normal;font-style:normal;">A</div><div class="t" style="left:349.19px;top:597.43px;font-family:'Liberation Sans';font-size:35.00px;line-height:35.00px;color:#262626;font-weight:normal;font-style:normal;">B</div><div class="t" style="left:539.39px;top:597.42px;font-family:'Liberation Sans';font-size:35.00px;line-height:35.00px;color:#262626;font-weight:normal;font-style:normal;">C</div><div class="t" style="left:729.94px;top:597.43px;font-family:'Liberation Sans';font-size:35.00px;line-height:35.00px;color:#262626;font-weight:normal;font-style:normal;">D</div><div class="t" style="left:921.71px;top:597.43px;font-family:'Liberation Sans';font-size:35.00px;line-height:35.00px;color:#262626;font-weight:normal;font-style:normal;">E</div><div class="t" style="left:1113.58px;top:597.43px;font-family:'Liberation Sans';font-size:35.00px;line-height:35.00px;color:#262626;font-weight:normal;font-style:normal;">F</div><div class="t" style="left:1302.64px;top:597.42px;font-family:'Liberation Sans';font-size:35.00px;line-height:35.00px;color:#262626;font-weight:normal;font-style:normal;">G</div><div class="t" style="left:1494.15px;top:597.43px;font-family:'Liberation Sans';font-size:35.00px;line-height:35.00px;color:#262626;font-weight:normal;font-style:normal;">H</div><div class="t" style="left:1692.84px;top:597.43px;font-family:'Liberation Sans';font-size:35.00px;line-height:35.00px;color:#262626;font-weight:normal;font-style:normal;">I</div><div class="t" style="left:1880.85px;top:597.43px;font-family:'Liberation Sans';font-size:35.00px;line-height:35.00px;color:#262626;font-weight:normal;font-style:normal;">J</div><div class="t" style="left:2066.59px;top:597.43px;font-family:'Liberation Sans';font-size:35.00px;line-height:35.00px;color:#262626;font-weight:normal;font-style:normal;">K</div><div class="t" style="left:2259.76px;top:597.43px;font-family:'Liberation Sans';font-size:35.00px;line-height:35.00px;color:#262626;font-weight:normal;font-style:normal;">L</div><div class="t" style="left:2446.72px;top:597.43px;font-family:'Liberation Sans';font-size:35.00px;line-height:35.00px;color:#262626;font-weight:normal;font-style:normal;">M</div><div class="t" style="left:2639.55px;top:597.43px;font-family:'Liberation Sans';font-size:35.00px;line-height:35.00px;color:#262626;font-weight:normal;font-style:normal;">N</div><div class="t" style="left:2829.49px;top:597.42px;font-family:'Liberation Sans';font-size:35.00px;line-height:35.00px;color:#262626;font-weight:normal;font-style:normal;">O</div><div class="t" style="left:3021.79px;top:597.43px;font-family:'Liberation Sans';font-size:35.00px;line-height:35.00px;color:#262626;font-weight:normal;font-style:normal;">P</div><div class="t" style="left:3211.29px;top:597.42px;font-family:'Liberation Sans';font-size:35.00px;line-height:35.00px;color:#262626;font-weight:normal;font-style:normal;">Q</div><div class="t" style="left:3402.54px;top:597.43px;font-family:'Liberation Sans';font-size:35.00px;line-height:35.00px;color:#262626;font-weight:normal;font-style:normal;">R</div><div class="t" style="left:3595.01px;top:597.42px;font-family:'Liberation Sans';font-size:35.00px;line-height:35.00px;color:#262626;font-weight:normal;font-style:normal;">S</div><div class="t" style="left:27.89px;top:648.05px;font-family:'Liberation Sans';font-size:39.00px;line-height:39.00px;color:#217346;font-weight:normal;font-style:normal;transform:scaleX(0.9300);transform-origin:0 0;">1</div><div class="t" style="left:28.44px;top:701.87px;font-family:'Liberation Sans';font-size:38.44px;line-height:38.44px;color:#262626;font-weight:normal;font-style:normal;transform:scaleX(0.9435);transform-origin:0 0;">2</div><div class="t" style="left:28.44px;top:755.22px;font-family:'Liberation Sans';font-size:38.44px;line-height:38.44px;color:#262626;font-weight:normal;font-style:normal;transform:scaleX(0.9435);transform-origin:0 0;">3</div><div class="t" style="left:28.62px;top:808.10px;font-family:'Liberation Sans';font-size:39.00px;line-height:39.00px;color:#262626;font-weight:normal;font-style:normal;transform:scaleX(0.9300);transform-origin:0 0;">4</div><div class="t" style="left:28.44px;top:861.45px;font-family:'Liberation Sans';font-size:39.00px;line-height:39.00px;color:#262626;font-weight:normal;font-style:normal;transform:scaleX(0.9300);transform-origin:0 0;">5</div><div class="t" style="left:28.25px;top:915.27px;font-family:'Liberation Sans';font-size:38.44px;line-height:38.44px;color:#262626;font-weight:normal;font-style:normal;transform:scaleX(0.9435);transform-origin:0 0;">6</div><div class="t" style="left:28.44px;top:968.15px;font-family:'Liberation Sans';font-size:39.00px;line-height:39.00px;color:#262626;font-weight:normal;font-style:normal;transform:scaleX(0.9300);transform-origin:0 0;">7</div><div class="t" style="left:28.34px;top:1021.97px;font-family:'Liberation Sans';font-size:38.44px;line-height:38.44px;color:#262626;font-weight:normal;font-style:normal;transform:scaleX(0.9435);transform-origin:0 0;">8</div><div class="t" style="left:28.44px;top:1075.32px;font-family:'Liberation Sans';font-size:38.44px;line-height:38.44px;color:#262626;font-weight:normal;font-style:normal;transform:scaleX(0.9435);transform-origin:0 0;">9</div><div class="t" style="left:17.64px;top:1128.67px;font-family:'Liberation Sans';font-size:38.44px;line-height:38.44px;color:#262626;font-weight:normal;font-style:normal;transform:scaleX(0.9435);transform-origin:0 0;">10</div><div class="t" style="left:19.19px;top:1181.54px;font-family:'Liberation Sans';font-size:39.00px;line-height:39.00px;color:#262626;font-weight:normal;font-style:normal;transform:scaleX(0.9300);transform-origin:0 0;">11</div><div class="t" style="left:17.92px;top:1235.37px;font-family:'Liberation Sans';font-size:38.44px;line-height:38.44px;color:#262626;font-weight:normal;font-style:normal;transform:scaleX(0.9435);transform-origin:0 0;">12</div><div class="t" style="left:17.74px;top:1288.72px;font-family:'Liberation Sans';font-size:38.44px;line-height:38.44px;color:#262626;font-weight:normal;font-style:normal;transform:scaleX(0.9435);transform-origin:0 0;">13</div><div class="t" style="left:17.55px;top:1341.60px;font-family:'Liberation Sans';font-size:39.00px;line-height:39.00px;color:#262626;font-weight:normal;font-style:normal;transform:scaleX(0.9300);transform-origin:0 0;">14</div><div class="t" style="left:17.74px;top:1394.94px;font-family:'Liberation Sans';font-size:39.00px;line-height:39.00px;color:#262626;font-weight:normal;font-style:normal;transform:scaleX(0.9300);transform-origin:0 0;">15</div><div class="t" style="left:17.74px;top:1448.77px;font-family:'Liberation Sans';font-size:38.44px;line-height:38.44px;color:#262626;font-weight:normal;font-style:normal;transform:scaleX(0.9435);transform-origin:0 0;">16</div><div class="t" style="left:17.92px;top:1501.64px;font-family:'Liberation Sans';font-size:39.00px;line-height:39.00px;color:#262626;font-weight:normal;font-style:normal;transform:scaleX(0.9300);transform-origin:0 0;">17</div><div class="t" style="left:17.74px;top:1555.47px;font-family:'Liberation Sans';font-size:38.44px;line-height:38.44px;color:#262626;font-weight:normal;font-style:normal;transform:scaleX(0.9435);transform-origin:0 0;">18</div><div class="t" style="left:17.83px;top:1608.82px;font-family:'Liberation Sans';font-size:38.44px;line-height:38.44px;color:#262626;font-weight:normal;font-style:normal;transform:scaleX(0.9435);transform-origin:0 0;">19</div><div class="t" style="left:18.10px;top:1662.17px;font-family:'Liberation Sans';font-size:38.44px;line-height:38.44px;color:#262626;font-weight:normal;font-style:normal;transform:scaleX(0.9435);transform-origin:0 0;">20</div><div class="t" style="left:18.28px;top:1715.52px;font-family:'Liberation Sans';font-size:38.44px;line-height:38.44px;color:#262626;font-weight:normal;font-style:normal;transform:scaleX(0.9435);transform-origin:0 0;">21</div><div class="t" style="left:18.37px;top:1768.87px;font-family:'Liberation Sans';font-size:38.44px;line-height:38.44px;color:#262626;font-weight:normal;font-style:normal;transform:scaleX(0.9435);transform-origin:0 0;">22</div><div class="t" style="left:18.19px;top:1822.22px;font-family:'Liberation Sans';font-size:38.44px;line-height:38.44px;color:#262626;font-weight:normal;font-style:normal;transform:scaleX(0.9435);transform-origin:0 0;">23</div><div class="t" style="left:18.01px;top:1875.57px;font-family:'Liberation Sans';font-size:38.44px;line-height:38.44px;color:#262626;font-weight:normal;font-style:normal;transform:scaleX(0.9435);transform-origin:0 0;">24</div><div class="t" style="left:18.19px;top:1928.92px;font-family:'Liberation Sans';font-size:38.44px;line-height:38.44px;color:#262626;font-weight:normal;font-style:normal;transform:scaleX(0.9435);transform-origin:0 0;">25</div><div class="t" style="left:18.19px;top:1982.27px;font-family:'Liberation Sans';font-size:38.44px;line-height:38.44px;color:#262626;font-weight:normal;font-style:normal;transform:scaleX(0.9435);transform-origin:0 0;">26</div><div class="t" style="left:18.37px;top:2035.62px;font-family:'Liberation Sans';font-size:38.44px;line-height:38.44px;color:#262626;font-weight:normal;font-style:normal;transform:scaleX(0.9435);transform-origin:0 0;">27</div><div class="t" style="left:18.19px;top:2088.97px;font-family:'Liberation Sans';font-size:38.44px;line-height:38.44px;color:#262626;font-weight:normal;font-style:normal;transform:scaleX(0.9435);transform-origin:0 0;">28</div><div class="t" style="left:18.28px;top:2142.32px;font-family:'Liberation Sans';font-size:38.44px;line-height:38.44px;color:#262626;font-weight:normal;font-style:normal;transform:scaleX(0.9435);transform-origin:0 0;">29</div><div class="t" style="left:18.28px;top:2195.67px;font-family:'Liberation Sans';font-size:38.44px;line-height:38.44px;color:#262626;font-weight:normal;font-style:normal;transform:scaleX(0.9435);transform-origin:0 0;">30</div><div class="t" style="left:18.46px;top:2249.02px;font-family:'Liberation Sans';font-size:38.44px;line-height:38.44px;color:#262626;font-weight:normal;font-style:normal;transform:scaleX(0.9435);transform-origin:0 0;">31</div>
<div class="c" style="left:76.00px;top:640.00px;width:189.90px;height:52.35px;"><div class="ln" style="top:10.58px;">id</div></div><div class="c" style="left:266.90px;top:640.00px;width:189.90px;height:52.35px;"><div class="ln" style="top:10.58px;">address</div></div><div class="c" style="left:457.80px;top:640.00px;width:189.90px;height:52.35px;"><div class="ln" style="top:10.58px;">businessName</div></div><div class="c" style="left:648.70px;top:640.00px;width:189.90px;height:52.35px;"><div class="ln" style="top:10.58px;">businessCategories</div></div><div class="c" style="left:839.60px;top:640.00px;width:189.90px;height:52.35px;"><div class="ln" style="top:10.58px;">city</div></div><div class="c" style="left:1030.50px;top:640.00px;width:189.90px;height:52.35px;"><div class="ln" style="top:10.58px;">country</div></div><div class="c" style="left:1221.40px;top:640.00px;width:189.90px;height:52.35px;"><div class="ln" style="top:10.58px;">dateAdded</div></div><div class="c" style="left:1412.30px;top:640.00px;width:189.90px;height:52.35px;"><div class="ln" style="top:10.58px;">dateUpdated</div></div><div class="c" style="left:1603.20px;top:640.00px;width:189.90px;height:52.35px;"><div class="ln" style="top:10.58px;">emails</div></div><div class="c" style="left:1794.10px;top:640.00px;width:189.90px;height:52.35px;"><div class="ln" style="top:10.58px;">firstName</div></div><div class="c" style="left:1985.00px;top:640.00px;width:189.90px;height:52.35px;"><div class="ln" style="top:10.58px;">keys</div></div><div class="c" style="left:2175.90px;top:640.00px;width:189.90px;height:52.35px;"><div class="ln" style="top:10.58px;">lastName</div></div><div class="c" style="left:2366.80px;top:640.00px;width:189.90px;height:52.35px;"><div class="ln" style="top:10.58px;">jobFunction</div></div><div class="c" style="left:2557.70px;top:640.00px;width:189.90px;height:52.35px;"><div class="ln" style="top:10.58px;">jobLevel</div></div><div class="c" style="left:2748.60px;top:640.00px;width:189.90px;height:52.35px;"><div class="ln" style="top:10.58px;">jobTitle</div></div><div class="c" style="left:2939.50px;top:640.00px;width:189.90px;height:52.35px;"><div class="ln" style="top:10.58px;">numEmployeesMin</div></div><div class="c" style="left:3130.40px;top:640.00px;width:189.90px;height:52.35px;"><div class="ln" style="top:10.58px;">numEmployeesMax</div></div><div class="c" style="left:3321.30px;top:640.00px;width:189.90px;height:52.35px;"><div class="ln" style="top:10.58px;">phones</div></div><div class="c" style="left:3512.20px;top:640.00px;width:189.90px;height:52.35px;"><div class="ln" style="top:10.58px;">postalCode</div></div><div class="c" style="left:3703.10px;top:640.00px;width:82.90px;height:52.35px;"><div class="ln" style="top:10.58px;">province</div></div><div class="c" style="left:76.00px;top:693.35px;width:189.90px;height:52.35px;"><div class="ln" style="top:10.58px;">AWHX9WdQx</div></div><div class="c" style="left:266.90px;top:693.35px;width:189.90px;height:52.35px;"><div class="ln" style="top:10.58px;">P.O. Box 17</div></div><div class="c" style="left:457.80px;top:693.35px;width:380.80px;height:52.35px;"><div class="ln" style="top:10.58px;">TEXSAR Search Party</div></div><div class="c" style="left:839.60px;top:693.35px;width:189.90px;height:52.35px;"><div class="ln" style="top:10.58px;">Austin</div></div><div class="c" style="left:1030.50px;top:693.35px;width:189.90px;height:52.35px;"><div class="ln" style="top:10.58px;">US</div></div><div class="c" style="left:1221.40px;top:693.35px;width:189.90px;height:52.35px;"><div class="ln" style="top:10.58px;">2018-02-27</div></div><div class="c" style="left:1412.30px;top:693.35px;width:189.90px;height:52.35px;"><div class="ln" style="top:10.58px;">2018-03-07</div></div><div class="c" style="left:1603.20px;top:693.35px;width:189.90px;height:52.35px;"><div class="ln" style="top:10.58px;">justen.noakes</div></div><div class="c" style="left:1794.10px;top:693.35px;width:189.90px;height:52.35px;"><div class="ln" style="top:10.58px;">Justen</div></div><div class="c" style="left:1985.00px;top:693.35px;width:189.90px;height:52.35px;"><div class="ln" style="top:10.58px;">justennoakes</div></div><div class="c" style="left:2175.90px;top:693.35px;width:189.90px;height:52.35px;"><div class="ln" style="top:10.58px;">Noakes</div></div><div class="c" style="left:2366.80px;top:693.35px;width:189.90px;height:52.35px;"><div class="ln" style="top:10.58px;">Business Management</div></div><div class="c" style="left:2557.70px;top:693.35px;width:189.90px;height:52.35px;"><div class="ln" style="top:10.58px;">C-Team</div></div><div class="c" style="left:2748.60px;top:693.35px;width:189.90px;height:52.35px;"><div class="ln" style="top:10.58px;">CEO</div></div><div class="c" style="left:3321.30px;top:693.35px;width:189.90px;height:52.35px;"><div class="rn" style="top:10.58px;">5.13E+09</div></div><div class="c" style="left:3512.20px;top:693.35px;width:189.90px;height:52.35px;"><div class="rn" style="top:10.58px;">78717</div></div><div class="c" style="left:3703.10px;top:693.35px;width:82.90px;height:52.35px;"><div class="ln" style="top:10.58px;">TX</div></div><div class="c" style="left:76.00px;top:746.70px;width:189.90px;height:52.35px;"><div class="ln" style="top:10.58px;">AWG2yGoZQ</div></div><div class="c" style="left:266.90px;top:746.70px;width:189.90px;height:52.35px;"><div class="ln" style="top:10.58px;">1221 S Mopac</div></div><div class="c" style="left:457.80px;top:746.70px;width:380.80px;height:52.35px;"><div class="ln" style="top:10.58px;">KELLER WILLIAMS REALTY</div></div><div class="c" style="left:839.60px;top:746.70px;width:189.90px;height:52.35px;"><div class="ln" style="top:10.58px;">Austin</div></div><div class="c" style="left:1030.50px;top:746.70px;width:189.90px;height:52.35px;"><div class="ln" style="top:10.58px;">US</div></div><div class="c" style="left:1221.40px;top:746.70px;width:189.90px;height:52.35px;"><div class="ln" style="top:10.58px;">2018-02-20</div></div><div class="c" style="left:1412.30px;top:746.70px;width:189.90px;height:52.35px;"><div class="ln" style="top:10.58px;">2018-03-08</div></div><div class="c" style="left:1603.20px;top:746.70px;width:189.90px;height:52.35px;"><div class="ln" style="top:10.58px;">johnbarrentine</div></div><div class="c" style="left:1794.10px;top:746.70px;width:189.90px;height:52.35px;"><div class="ln" style="top:10.58px;">John</div></div><div class="c" style="left:1985.00px;top:746.70px;width:189.90px;height:52.35px;"><div class="ln" style="top:10.58px;">johnbarrentine</div></div><div class="c" style="left:2175.90px;top:746.70px;width:189.90px;height:52.35px;"><div class="ln" style="top:10.58px;">Barrentine</div></div><div class="c" style="left:2366.80px;top:746.70px;width:189.90px;height:52.35px;"><div class="ln" style="top:10.58px;">Business Management</div></div><div class="c" style="left:2557.70px;top:746.70px;width:189.90px;height:52.35px;"><div class="ln" style="top:10.58px;">C-Team</div></div><div class="c" style="left:2748.60px;top:746.70px;width:189.90px;height:52.35px;"><div class="ln" style="top:10.58px;">CEO</div></div><div class="c" style="left:3321.30px;top:746.70px;width:189.90px;height:52.35px;"><div class="rn" style="top:10.58px;">5.12E+09</div></div><div class="c" style="left:3512.20px;top:746.70px;width:189.90px;height:52.35px;"><div class="rn" style="top:10.58px;">78746</div></div><div class="c" style="left:3703.10px;top:746.70px;width:82.90px;height:52.35px;"><div class="ln" style="top:10.58px;">TX</div></div><div class="c" style="left:76.00px;top:800.05px;width:189.90px;height:52.35px;"><div class="ln" style="top:10.58px;">AWHX_X-dQ</div></div><div class="c" style="left:266.90px;top:800.05px;width:189.90px;height:52.35px;"><div class="ln" style="top:10.58px;">9390 Research</div></div><div class="c" style="left:457.80px;top:800.05px;width:189.90px;height:52.35px;"><div class="ln" style="top:10.58px;">Criticalconnect</div></div><div class="c" style="left:648.70px;top:800.05px;width:189.90px;height:52.35px;"><div class="ln" style="top:10.58px;">Health and</div></div><div class="c" style="left:839.60px;top:800.05px;width:189.90px;height:52.35px;"><div class="ln" style="top:10.58px;">Austin</div></div><div class="c" style="left:1030.50px;top:800.05px;width:189.90px;height:52.35px;"><div class="ln" style="top:10.58px;">US</div></div><div class="c" style="left:1221.40px;top:800.05px;width:189.90px;height:52.35px;"><div class="ln" style="top:10.58px;">2018-02-27</div></div><div class="c" style="left:1412.30px;top:800.05px;width:189.90px;height:52.35px;"><div class="ln" style="top:10.58px;">2018-03-07</div></div><div class="c" style="left:1603.20px;top:800.05px;width:189.90px;height:52.35px;"><div class="ln" style="top:10.58px;">marlene.smith</div></div><div class="c" style="left:1794.10px;top:800.05px;width:189.90px;height:52.35px;"><div class="ln" style="top:10.58px;">Marlene</div></div><div class="c" style="left:1985.00px;top:800.05px;width:189.90px;height:52.35px;"><div class="ln" style="top:10.58px;">marlenesmith</div></div><div class="c" style="left:2175.90px;top:800.05px;width:189.90px;height:52.35px;"><div class="ln" style="top:10.58px;">Smitherman</div></div><div class="c" style="left:2366.80px;top:800.05px;width:189.90px;height:52.35px;"><div class="ln" style="top:10.58px;">Business Management</div></div><div class="c" style="left:2557.70px;top:800.05px;width:189.90px;height:52.35px;"><div class="ln" style="top:10.58px;">C-Team</div></div><div class="c" style="left:2748.60px;top:800.05px;width:189.90px;height:52.35px;"><div class="ln" style="top:10.58px;">CEO</div></div><div class="c" style="left:3321.30px;top:800.05px;width:189.90px;height:52.35px;"><div class="rn" style="top:10.58px;">5.12E+09</div></div><div class="c" style="left:3512.20px;top:800.05px;width:189.90px;height:52.35px;"><div class="rn" style="top:10.58px;">78759</div></div><div class="c" style="left:3703.10px;top:800.05px;width:82.90px;height:52.35px;"><div class="ln" style="top:10.58px;">TX</div></div><div class="c" style="left:76.00px;top:853.40px;width:189.90px;height:52.35px;"><div class="ln" style="top:10.58px;">AWHXuq26Q</div></div><div class="c" style="left:266.90px;top:853.40px;width:189.90px;height:52.35px;"><div class="ln" style="top:10.58px;">5401 Mary Lane</div></div><div class="c" style="left:457.80px;top:853.40px;width:189.90px;height:52.35px;"><div class="ln" style="top:10.58px;">Elite25</div></div><div class="c" style="left:648.70px;top:853.40px;width:189.90px;height:52.35px;"><div class="ln" style="top:10.58px;">Real estate agents</div></div><div class="c" style="left:839.60px;top:853.40px;width:189.90px;height:52.35px;"><div class="ln" style="top:10.58px;">Austin</div></div><div class="c" style="left:1030.50px;top:853.40px;width:189.90px;height:52.35px;"><div class="ln" style="top:10.58px;">US</div></div><div class="c" style="left:1221.40px;top:853.40px;width:189.90px;height:52.35px;"><div class="ln" style="top:10.58px;">2018-02-27</div></div><div class="c" style="left:1412.30px;top:853.40px;width:189.90px;height:52.35px;"><div class="ln" style="top:10.58px;">2018-03-07</div></div><div class="c" style="left:1603.20px;top:853.40px;width:189.90px;height:52.35px;"><div class="ln" style="top:10.58px;">dianejohnson</div></div><div class="c" style="left:1794.10px;top:853.40px;width:189.90px;height:52.35px;"><div class="ln" style="top:10.58px;">KELLER</div></div><div class="c" style="left:1985.00px;top:853.40px;width:189.90px;height:52.35px;"><div class="ln" style="top:10.58px;">dianejohnson</div></div><div class="c" style="left:2175.90px;top:853.40px;width:189.90px;height:52.35px;"><div class="ln" style="top:10.58px;">AUSTIN</div></div><div class="c" style="left:2366.80px;top:853.40px;width:189.90px;height:52.35px;"><div class="ln" style="top:10.58px;">Business Management</div></div><div class="c" style="left:2557.70px;top:853.40px;width:189.90px;height:52.35px;"><div class="ln" style="top:10.58px;">C-Team</div></div><div class="c" style="left:2748.60px;top:853.40px;width:189.90px;height:52.35px;"><div class="ln" style="top:10.58px;">CEO</div></div><div class="c" style="left:2939.50px;top:853.40px;width:189.90px;height:52.35px;"><div class="rn" style="top:10.58px;">100</div></div><div class="c" style="left:3130.40px;top:853.40px;width:189.90px;height:52.35px;"><div class="rn" style="top:10.58px;">499</div></div><div class="c" style="left:3321.30px;top:853.40px;width:189.90px;height:52.35px;"><div class="rn" style="top:10.58px;">5.13E+09</div></div><div class="c" style="left:3512.20px;top:853.40px;width:189.90px;height:52.35px;"><div class="rn" style="top:10.58px;">78746</div></div><div class="c" style="left:3703.10px;top:853.40px;width:82.90px;height:52.35px;"><div class="ln" style="top:10.58px;">TX</div></div><div class="c" style="left:76.00px;top:906.75px;width:189.90px;height:52.35px;"><div class="ln" style="top:10.58px;">AWHX9r3CQ</div></div><div class="c" style="left:266.90px;top:906.75px;width:189.90px;height:52.35px;"><div class="ln" style="top:10.58px;">2600 McHale</div></div><div class="c" style="left:457.80px;top:906.75px;width:189.90px;height:52.35px;"><div class="ln" style="top:10.58px;">Texas Systems</div></div><div class="c" style="left:648.70px;top:906.75px;width:189.90px;height:52.35px;"><div class="ln" style="top:10.58px;">Computer integrated</div></div><div class="c" style="left:839.60px;top:906.75px;width:189.90px;height:52.35px;"><div class="ln" style="top:10.58px;">Austin</div></div><div class="c" style="left:1030.50px;top:906.75px;width:189.90px;height:52.35px;"><div class="ln" style="top:10.58px;">US</div></div><div class="c" style="left:1221.40px;top:906.75px;width:189.90px;height:52.35px;"><div class="ln" style="top:10.58px;">2018-02-27</div></div><div class="c" style="left:1412.30px;top:906.75px;width:189.90px;height:52.35px;"><div class="ln" style="top:10.58px;">2018-03-07</div></div><div class="c" style="left:1603.20px;top:906.75px;width:189.90px;height:52.35px;"><div class="ln" style="top:10.58px;">david.doran</div></div><div class="c" style="left:1794.10px;top:906.75px;width:189.90px;height:52.35px;"><div class="ln" style="top:10.58px;">David</div></div><div class="c" style="left:1985.00px;top:906.75px;width:189.90px;height:52.35px;"><div class="ln" style="top:10.58px;">daviddoran</div></div><div class="c" style="left:2175.90px;top:906.75px;width:189.90px;height:52.35px;"><div class="ln" style="top:10.58px;">Doran</div></div><div class="c" style="left:2366.80px;top:906.75px;width:189.90px;height:52.35px;"><div class="ln" style="top:10.58px;">Business Management</div></div><div class="c" style="left:2557.70px;top:906.75px;width:189.90px;height:52.35px;"><div class="ln" style="top:10.58px;">C-Team</div></div><div class="c" style="left:2748.60px;top:906.75px;width:189.90px;height:52.35px;"><div class="ln" style="top:10.58px;">CEO</div></div><div class="c" style="left:2939.50px;top:906.75px;width:189.90px;height:52.35px;"><div class="rn" style="top:10.58px;">20</div></div><div class="c" style="left:3130.40px;top:906.75px;width:189.90px;height:52.35px;"><div class="rn" style="top:10.58px;">99</div></div><div class="c" style="left:3321.30px;top:906.75px;width:189.90px;height:52.35px;"><div class="rn" style="top:10.58px;">5.12E+09</div></div><div class="c" style="left:3512.20px;top:906.75px;width:189.90px;height:52.35px;"><div class="rn" style="top:10.58px;">78758</div></div><div class="c" style="left:3703.10px;top:906.75px;width:82.90px;height:52.35px;"><div class="ln" style="top:10.58px;">TX</div></div><div class="c" style="left:76.00px;top:960.10px;width:189.90px;height:52.35px;"><div class="ln" style="top:10.58px;">AWG2qelBQ</div></div><div class="c" style="left:266.90px;top:960.10px;width:189.90px;height:52.35px;"><div class="ln" style="top:10.58px;">9330 United</div></div><div class="c" style="left:457.80px;top:960.10px;width:189.90px;height:52.35px;"><div class="ln" style="top:10.58px;">COMPADRE</div></div><div class="c" style="left:648.70px;top:960.10px;width:189.90px;height:52.35px;"><div class="ln" style="top:10.58px;">Piece goods</div></div><div class="c" style="left:839.60px;top:960.10px;width:189.90px;height:52.35px;"><div class="ln" style="top:10.58px;">Austin</div></div><div class="c" style="left:1030.50px;top:960.10px;width:189.90px;height:52.35px;"><div class="ln" style="top:10.58px;">US</div></div><div class="c" style="left:1221.40px;top:960.10px;width:189.90px;height:52.35px;"><div class="ln" style="top:10.58px;">2018-02-20</div></div><div class="c" style="left:1412.30px;top:960.10px;width:189.90px;height:52.35px;"><div class="ln" style="top:10.58px;">2018-03-08</div></div><div class="c" style="left:1603.20px;top:960.10px;width:189.90px;height:52.35px;"><div class="ln" style="top:10.58px;">dkelinske@compadre</div></div><div class="c" style="left:1794.10px;top:960.10px;width:189.90px;height:52.35px;"><div class="ln" style="top:10.58px;">Darryl</div></div><div class="c" style="left:1985.00px;top:960.10px;width:189.90px;height:52.35px;"><div class="ln" style="top:10.58px;">dkelinskecompadre</div></div><div class="c" style="left:2175.90px;top:960.10px;width:189.90px;height:52.35px;"><div class="ln" style="top:10.58px;">Kelinske</div></div><div class="c" style="left:2366.80px;top:960.10px;width:189.90px;height:52.35px;"><div class="ln" style="top:10.58px;">Business Management</div></div><div class="c" style="left:2557.70px;top:960.10px;width:189.90px;height:52.35px;"><div class="ln" style="top:10.58px;">C-Team</div></div><div class="c" style="left:2748.60px;top:960.10px;width:189.90px;height:52.35px;"><div class="ln" style="top:10.58px;">CEO</div></div><div class="c" style="left:2939.50px;top:960.10px;width:189.90px;height:52.35px;"><div class="rn" style="top:10.58px;">100</div></div><div class="c" style="left:3130.40px;top:960.10px;width:189.90px;height:52.35px;"><div class="rn" style="top:10.58px;">499</div></div><div class="c" style="left:3321.30px;top:960.10px;width:189.90px;height:52.35px;"><div class="rn" style="top:10.58px;">5.12E+09</div></div><div class="c" style="left:3512.20px;top:960.10px;width:189.90px;height:52.35px;"><div class="rn" style="top:10.58px;">78758</div></div><div class="c" style="left:3703.10px;top:960.10px;width:82.90px;height:52.35px;"><div class="ln" style="top:10.58px;">TX</div></div><div class="c" style="left:76.00px;top:1013.45px;width:189.90px;height:52.35px;"><div class="ln" style="top:10.58px;">AWHnH21EQ</div></div><div class="c" style="left:266.90px;top:1013.45px;width:189.90px;height:52.35px;"><div class="ln" style="top:10.58px;">4412 Spicewood</div></div><div class="c" style="left:457.80px;top:1013.45px;width:189.90px;height:52.35px;"><div class="ln" style="top:10.58px;">RateGenius</div></div><div class="c" style="left:648.70px;top:1013.45px;width:189.90px;height:52.35px;"><div class="ln" style="top:10.58px;">Insurance agents</div></div><div class="c" style="left:839.60px;top:1013.45px;width:189.90px;height:52.35px;"><div class="ln" style="top:10.58px;">Austin</div></div><div class="c" style="left:1030.50px;top:1013.45px;width:189.90px;height:52.35px;"><div class="ln" style="top:10.58px;">US</div></div><div class="c" style="left:1221.40px;top:1013.45px;width:189.90px;height:52.35px;"><div class="ln" style="top:10.58px;">2018-03-02</div></div><div class="c" style="left:1412.30px;top:1013.45px;width:189.90px;height:52.35px;"><div class="ln" style="top:10.58px;">2018-03-09</div></div><div class="c" style="left:1603.20px;top:1013.45px;width:189.90px;height:52.35px;"><div class="ln" style="top:10.58px;">cbrown@rategenius</div></div><div class="c" style="left:1794.10px;top:1013.45px;width:189.90px;height:52.35px;"><div class="ln" style="top:10.58px;">Christopher</div></div><div class="c" style="left:1985.00px;top:1013.45px;width:189.90px;height:52.35px;"><div class="ln" style="top:10.58px;">cbrownrategenius</div></div><div class="c" style="left:2175.90px;top:1013.45px;width:189.90px;height:52.35px;"><div class="ln" style="top:10.58px;">Brown</div></div><div class="c" style="left:2366.80px;top:1013.45px;width:189.90px;height:52.35px;"><div class="ln" style="top:10.58px;">Business Management</div></div><div class="c" style="left:2557.70px;top:1013.45px;width:189.90px;height:52.35px;"><div class="ln" style="top:10.58px;">C-Team</div></div><div class="c" style="left:2748.60px;top:1013.45px;width:189.90px;height:52.35px;"><div class="ln" style="top:10.58px;">CEO</div></div><div class="c" style="left:2939.50px;top:1013.45px;width:189.90px;height:52.35px;"><div class="rn" style="top:10.58px;">100</div></div><div class="c" style="left:3130.40px;top:1013.45px;width:189.90px;height:52.35px;"><div class="rn" style="top:10.58px;">499</div></div><div class="c" style="left:3321.30px;top:1013.45px;width:189.90px;height:52.35px;"><div class="rn" style="top:10.58px;">8.67E+09</div></div><div class="c" style="left:3512.20px;top:1013.45px;width:189.90px;height:52.35px;"><div class="rn" style="top:10.58px;">78759</div></div><div class="c" style="left:3703.10px;top:1013.45px;width:82.90px;height:52.35px;"><div class="ln" style="top:10.58px;">TX</div></div><div class="c" style="left:76.00px;top:1066.80px;width:189.90px;height:52.35px;"><div class="ln" style="top:10.58px;">AWHX-SeQQ</div></div><div class="c" style="left:266.90px;top:1066.80px;width:189.90px;height:52.35px;"><div class="ln" style="top:10.58px;">3100 Alvin Devane</div></div><div class="c" style="left:457.80px;top:1066.80px;width:189.90px;height:52.35px;"><div class="ln" style="top:10.58px;">THA Foundation</div></div><div class="c" style="left:648.70px;top:1066.80px;width:189.90px;height:52.35px;"><div class="ln" style="top:10.58px;">Business associations</div></div><div class="c" style="left:839.60px;top:1066.80px;width:189.90px;height:52.35px;"><div class="ln" style="top:10.58px;">Austin</div></div><div class="c" style="left:1030.50px;top:1066.80px;width:189.90px;height:52.35px;"><div class="ln" style="top:10.58px;">US</div></div><div class="c" style="left:1221.40px;top:1066.80px;width:189.90px;height:52.35px;"><div class="ln" style="top:10.58px;">2018-02-27</div></div><div class="c" style="left:1412.30px;top:1066.80px;width:189.90px;height:52.35px;"><div class="ln" style="top:10.58px;">2018-03-07</div></div><div class="c" style="left:1603.20px;top:1066.80px;width:189.90px;height:52.35px;"><div class="ln" style="top:10.58px;">fmartinez@tha</div></div><div class="c" style="left:1794.10px;top:1066.80px;width:189.90px;height:52.35px;"><div class="ln" style="top:10.58px;">Fernando</div></div><div class="c" style="left:1985.00px;top:1066.80px;width:189.90px;height:52.35px;"><div class="ln" style="top:10.58px;">fmartineztha</div></div><div class="c" style="left:2175.90px;top:1066.80px;width:189.90px;height:52.35px;"><div class="ln" style="top:10.58px;">Martinez</div></div><div class="c" style="left:2366.80px;top:1066.80px;width:189.90px;height:52.35px;"><div class="ln" style="top:10.58px;">Business Management</div></div><div class="c" style="left:2557.70px;top:1066.80px;width:189.90px;height:52.35px;"><div class="ln" style="top:10.58px;">C-Team</div></div><div class="c" style="left:2748.60px;top:1066.80px;width:189.90px;height:52.35px;"><div class="ln" style="top:10.58px;">CEO</div></div><div class="c" style="left:2939.50px;top:1066.80px;width:189.90px;height:52.35px;"><div class="rn" style="top:10.58px;">20</div></div><div class="c" style="left:3130.40px;top:1066.80px;width:189.90px;height:52.35px;"><div class="rn" style="top:10.58px;">99</div></div><div class="c" style="left:3321.30px;top:1066.80px;width:189.90px;height:52.35px;"><div class="rn" style="top:10.58px;">9.54E+09</div></div><div class="c" style="left:3512.20px;top:1066.80px;width:189.90px;height:52.35px;"><div class="rn" style="top:10.58px;">78741</div></div><div class="c" style="left:3703.10px;top:1066.80px;width:82.90px;height:52.35px;"><div class="ln" style="top:10.58px;">TX</div></div><div class="c" style="left:76.00px;top:1120.15px;width:189.90px;height:52.35px;"><div class="ln" style="top:10.58px;">AWHX_CrdQ</div></div><div class="c" style="left:266.90px;top:1120.15px;width:189.90px;height:52.35px;"><div class="ln" style="top:10.58px;">2525 Wallingwood</div></div><div class="c" style="left:457.80px;top:1120.15px;width:189.90px;height:52.35px;"><div class="ln" style="top:10.58px;">Victor Emanuel</div></div><div class="c" style="left:648.70px;top:1120.15px;width:189.90px;height:52.35px;"><div class="ln" style="top:10.58px;">Travel agencies</div></div><div class="c" style="left:839.60px;top:1120.15px;width:189.90px;height:52.35px;"><div class="ln" style="top:10.58px;">Austin</div></div><div class="c" style="left:1030.50px;top:1120.15px;width:189.90px;height:52.35px;"><div class="ln" style="top:10.58px;">US</div></div><div class="c" style="left:1221.40px;top:1120.15px;width:189.90px;height:52.35px;"><div class="ln" style="top:10.58px;">2018-02-27</div></div><div class="c" style="left:1412.30px;top:1120.15px;width:189.90px;height:52.35px;"><div class="ln" style="top:10.58px;">2018-03-07</div></div><div class="c" style="left:1603.20px;top:1120.15px;width:189.90px;height:52.35px;"><div class="ln" style="top:10.58px;">victor@ventbird</div></div><div class="c" style="left:1794.10px;top:1120.15px;width:189.90px;height:52.35px;"><div class="ln" style="top:10.58px;">Victor</div></div><div class="c" style="left:1985.00px;top:1120.15px;width:189.90px;height:52.35px;"><div class="ln" style="top:10.58px;">victorventbird</div></div><div class="c" style="left:2175.90px;top:1120.15px;width:189.90px;height:52.35px;"><div class="ln" style="top:10.58px;">Emanuel</div></div><div class="c" style="left:2366.80px;top:1120.15px;width:189.90px;height:52.35px;"><div class="ln" style="top:10.58px;">Business Management</div></div><div class="c" style="left:2557.70px;top:1120.15px;width:189.90px;height:52.35px;"><div class="ln" style="top:10.58px;">C-Team</div></div><div class="c" style="left:2748.60px;top:1120.15px;width:189.90px;height:52.35px;"><div class="ln" style="top:10.58px;">CEO</div></div><div class="c" style="left:2939.50px;top:1120.15px;width:189.90px;height:52.35px;"><div class="rn" style="top:10.58px;">20</div></div><div class="c" style="left:3130.40px;top:1120.15px;width:189.90px;height:52.35px;"><div class="rn" style="top:10.58px;">99</div></div><div class="c" style="left:3321.30px;top:1120.15px;width:189.90px;height:52.35px;"><div class="rn" style="top:10.58px;">5.12E+09</div></div><div class="c" style="left:3512.20px;top:1120.15px;width:189.90px;height:52.35px;"><div class="rn" style="top:10.58px;">78746</div></div><div class="c" style="left:3703.10px;top:1120.15px;width:82.90px;height:52.35px;"><div class="ln" style="top:10.58px;">TX</div></div><div class="c" style="left:76.00px;top:1173.50px;width:189.90px;height:52.35px;"><div class="ln" style="top:10.58px;">AWG3c8tHQ</div></div><div class="c" style="left:266.90px;top:1173.50px;width:189.90px;height:52.35px;"><div class="ln" style="top:10.58px;">1221 S Mopac</div></div><div class="c" style="left:457.80px;top:1173.50px;width:380.80px;height:52.35px;"><div class="ln" style="top:10.58px;">KELLER WILLIAMS REALTY</div></div><div class="c" style="left:839.60px;top:1173.50px;width:189.90px;height:52.35px;"><div class="ln" style="top:10.58px;">Austin</div></div><div class="c" style="left:1030.50px;top:1173.50px;width:189.90px;height:52.35px;"><div class="ln" style="top:10.58px;">US</div></div><div class="c" style="left:1221.40px;top:1173.50px;width:189.90px;height:52.35px;"><div class="ln" style="top:10.58px;">2018-02-20</div></div><div class="c" style="left:1412.30px;top:1173.50px;width:189.90px;height:52.35px;"><div class="ln" style="top:10.58px;">2018-03-08</div></div><div class="c" style="left:1603.20px;top:1173.50px;width:189.90px;height:52.35px;"><div class="ln" style="top:10.58px;">elainearmogida</div></div><div class="c" style="left:1794.10px;top:1173.50px;width:189.90px;height:52.35px;"><div class="ln" style="top:10.58px;">Elaine</div></div><div class="c" style="left:1985.00px;top:1173.50px;width:189.90px;height:52.35px;"><div class="ln" style="top:10.58px;">elainearmogida</div></div><div class="c" style="left:2175.90px;top:1173.50px;width:189.90px;height:52.35px;"><div class="ln" style="top:10.58px;">Armogida</div></div><div class="c" style="left:2366.80px;top:1173.50px;width:189.90px;height:52.35px;"><div class="ln" style="top:10.58px;">Business Management</div></div><div class="c" style="left:2557.70px;top:1173.50px;width:189.90px;height:52.35px;"><div class="ln" style="top:10.58px;">C-Team</div></div><div class="c" style="left:2748.60px;top:1173.50px;width:189.90px;height:52.35px;"><div class="ln" style="top:10.58px;">CEO</div></div><div class="c" style="left:3321.30px;top:1173.50px;width:189.90px;height:52.35px;"><div class="rn" style="top:10.58px;">5.12E+09</div></div><div class="c" style="left:3512.20px;top:1173.50px;width:189.90px;height:52.35px;"><div class="rn" style="top:10.58px;">78746</div></div><div class="c" style="left:3703.10px;top:1173.50px;width:82.90px;height:52.35px;"><div class="ln" style="top:10.58px;">TX</div></div><div class="c" style="left:76.00px;top:1226.85px;width:189.90px;height:52.35px;"><div class="ln" style="top:10.58px;">AWHnJjTBCQ</div></div><div class="c" style="left:266.90px;top:1226.85px;width:189.90px;height:52.35px;"><div class="ln" style="top:10.58px;">3414 MOUNTAIN</div></div><div class="c" style="left:457.80px;top:1226.85px;width:189.90px;height:52.35px;"><div class="ln" style="top:10.58px;">RTK LLC</div></div><div class="c" style="left:839.60px;top:1226.85px;width:189.90px;height:52.35px;"><div class="ln" style="top:10.58px;">AUSTIN</div></div><div class="c" style="left:1030.50px;top:1226.85px;width:189.90px;height:52.35px;"><div class="ln" style="top:10.58px;">US</div></div><div class="c" style="left:1221.40px;top:1226.85px;width:189.90px;height:52.35px;"><div class="ln" style="top:10.58px;">2018-03-02</div></div><div class="c" style="left:1412.30px;top:1226.85px;width:189.90px;height:52.35px;"><div class="ln" style="top:10.58px;">2018-03-09</div></div><div class="c" style="left:1603.20px;top:1226.85px;width:189.90px;height:52.35px;"><div class="ln" style="top:10.58px;">bruce@ranch</div></div><div class="c" style="left:1794.10px;top:1226.85px;width:189.90px;height:52.35px;"><div class="ln" style="top:10.58px;">Bruce</div></div><div class="c" style="left:1985.00px;top:1226.85px;width:189.90px;height:52.35px;"><div class="ln" style="top:10.58px;">bruceranch</div></div><div class="c" style="left:2175.90px;top:1226.85px;width:189.90px;height:52.35px;"><div class="ln" style="top:10.58px;">Evans</div></div><div class="c" style="left:2366.80px;top:1226.85px;width:189.90px;height:52.35px;"><div class="ln" style="top:10.58px;">Business Management</div></div><div class="c" style="left:2557.70px;top:1226.85px;width:189.90px;height:52.35px;"><div class="ln" style="top:10.58px;">C-Team</div></div><div class="c" style="left:2748.60px;top:1226.85px;width:189.90px;height:52.35px;"><div class="ln" style="top:10.58px;">CEO</div></div><div class="c" style="left:3321.30px;top:1226.85px;width:189.90px;height:52.35px;"><div class="rn" style="top:10.58px;">7.13E+09</div></div><div class="c" style="left:3512.20px;top:1226.85px;width:189.90px;height:52.35px;"><div class="rn" style="top:10.58px;">78731</div></div><div class="c" style="left:3703.10px;top:1226.85px;width:82.90px;height:52.35px;"><div class="ln" style="top:10.58px;">TX</div></div><div class="c" style="left:76.00px;top:1280.20px;width:189.90px;height:52.35px;"><div class="ln" style="top:10.58px;">AWG2xAZrQ</div></div><div class="c" style="left:266.90px;top:1280.20px;width:189.90px;height:52.35px;"><div class="ln" style="top:10.58px;">610 E 11th St</div></div><div class="c" style="left:457.80px;top:1280.20px;width:189.90px;height:52.35px;"><div class="ln" style="top:10.58px;">VELOCITY CREDIT</div></div><div class="c" style="left:648.70px;top:1280.20px;width:189.90px;height:52.35px;"><div class="ln" style="top:10.58px;">State credit unions</div></div><div class="c" style="left:839.60px;top:1280.20px;width:189.90px;height:52.35px;"><div class="ln" style="top:10.58px;">Austin</div></div><div class="c" style="left:1030.50px;top:1280.20px;width:189.90px;height:52.35px;"><div class="ln" style="top:10.58px;">US</div></div><div class="c" style="left:1221.40px;top:1280.20px;width:189.90px;height:52.35px;"><div class="ln" style="top:10.58px;">2018-02-20</div></div><div class="c" style="left:1412.30px;top:1280.20px;width:189.90px;height:52.35px;"><div class="ln" style="top:10.58px;">2018-03-08</div></div><div class="c" style="left:1603.20px;top:1280.20px;width:189.90px;height:52.35px;"><div class="ln" style="top:10.58px;">debbie.mitchell</div></div><div class="c" style="left:1794.10px;top:1280.20px;width:189.90px;height:52.35px;"><div class="ln" style="top:10.58px;">Debbie</div></div><div class="c" style="left:1985.00px;top:1280.20px;width:189.90px;height:52.35px;"><div class="ln" style="top:10.58px;">debbiemitchell</div></div><div class="c" style="left:2175.90px;top:1280.20px;width:189.90px;height:52.35px;"><div class="ln" style="top:10.58px;">Mitchell</div></div><div class="c" style="left:2366.80px;top:1280.20px;width:189.90px;height:52.35px;"><div class="ln" style="top:10.58px;">Business Management</div></div><div class="c" style="left:2557.70px;top:1280.20px;width:189.90px;height:52.35px;"><div class="ln" style="top:10.58px;">C-Team</div></div><div class="c" style="left:2748.60px;top:1280.20px;width:189.90px;height:52.35px;"><div class="ln" style="top:10.58px;">CEO</div></div><div class="c" style="left:2939.50px;top:1280.20px;width:189.90px;height:52.35px;"><div class="rn" style="top:10.58px;">100</div></div><div class="c" style="left:3130.40px;top:1280.20px;width:189.90px;height:52.35px;"><div class="rn" style="top:10.58px;">499</div></div><div class="c" style="left:3321.30px;top:1280.20px;width:189.90px;height:52.35px;"><div class="rn" style="top:10.58px;">5.12E+09</div></div><div class="c" style="left:3512.20px;top:1280.20px;width:189.90px;height:52.35px;"><div class="rn" style="top:10.58px;">78701</div></div><div class="c" style="left:3703.10px;top:1280.20px;width:82.90px;height:52.35px;"><div class="ln" style="top:10.58px;">TX</div></div><div class="c" style="left:76.00px;top:1333.55px;width:380.80px;height:52.35px;"><div class="ln" style="top:10.58px;">AWHoHiQ5LJx1JmLJHDQ</div></div><div class="c" style="left:457.80px;top:1333.55px;width:189.90px;height:52.35px;"><div class="ln" style="top:10.58px;">Mattr</div></div><div class="c" style="left:839.60px;top:1333.55px;width:189.90px;height:52.35px;"><div class="ln" style="top:10.58px;">Austin</div></div><div class="c" style="left:1030.50px;top:1333.55px;width:189.90px;height:52.35px;"><div class="ln" style="top:10.58px;">US</div></div><div class="c" style="left:1221.40px;top:1333.55px;width:189.90px;height:52.35px;"><div class="ln" style="top:10.58px;">2018-03-02</div></div><div class="c" style="left:1412.30px;top:1333.55px;width:189.90px;height:52.35px;"><div class="ln" style="top:10.58px;">2018-03-09</div></div><div class="c" style="left:1603.20px;top:1333.55px;width:189.90px;height:52.35px;"><div class="ln" style="top:10.58px;">jack@mattr</div></div><div class="c" style="left:1794.10px;top:1333.55px;width:189.90px;height:52.35px;"><div class="ln" style="top:10.58px;">Jack</div></div><div class="c" style="left:1985.00px;top:1333.55px;width:189.90px;height:52.35px;"><div class="ln" style="top:10.58px;">jackmattr</div></div><div class="c" style="left:2175.90px;top:1333.55px;width:189.90px;height:52.35px;"><div class="ln" style="top:10.58px;">Holt</div></div><div class="c" style="left:2366.80px;top:1333.55px;width:189.90px;height:52.35px;"><div class="ln" style="top:10.58px;">Business Management</div></div><div class="c" style="left:2557.70px;top:1333.55px;width:189.90px;height:52.35px;"><div class="ln" style="top:10.58px;">C-Team</div></div><div class="c" style="left:2748.60px;top:1333.55px;width:189.90px;height:52.35px;"><div class="ln" style="top:10.58px;">CEO</div></div><div class="c" style="left:3321.30px;top:1333.55px;width:189.90px;height:52.35px;"><div class="rn" style="top:10.58px;">5.13E+09</div></div><div class="c" style="left:3512.20px;top:1333.55px;width:189.90px;height:52.35px;"><div class="rn" style="top:10.58px;">78759</div></div><div class="c" style="left:3703.10px;top:1333.55px;width:82.90px;height:52.35px;"><div class="ln" style="top:10.58px;">TX</div></div><div class="c" style="left:76.00px;top:1386.90px;width:189.90px;height:52.35px;"><div class="ln" style="top:10.58px;">AWHoE7VeQ</div></div><div class="c" style="left:266.90px;top:1386.90px;width:189.90px;height:52.35px;"><div class="ln" style="top:10.58px;">115 E. 5Th</div></div><div class="c" style="left:457.80px;top:1386.90px;width:380.80px;height:52.35px;"><div class="ln" style="top:10.58px;">Djed Studios</div></div><div class="c" style="left:839.60px;top:1386.90px;width:189.90px;height:52.35px;"><div class="ln" style="top:10.58px;">Austin</div></div><div class="c" style="left:1030.50px;top:1386.90px;width:189.90px;height:52.35px;"><div class="ln" style="top:10.58px;">US</div></div><div class="c" style="left:1221.40px;top:1386.90px;width:189.90px;height:52.35px;"><div class="ln" style="top:10.58px;">2018-03-02</div></div><div class="c" style="left:1412.30px;top:1386.90px;width:189.90px;height:52.35px;"><div class="ln" style="top:10.58px;">2018-03-09</div></div><div class="c" style="left:1603.20px;top:1386.90px;width:189.90px;height:52.35px;"><div class="ln" style="top:10.58px;">darren@djed</div></div><div class="c" style="left:1794.10px;top:1386.90px;width:189.90px;height:52.35px;"><div class="ln" style="top:10.58px;">Darren</div></div><div class="c" style="left:1985.00px;top:1386.90px;width:189.90px;height:52.35px;"><div class="ln" style="top:10.58px;">darrendjed</div></div><div class="c" style="left:2175.90px;top:1386.90px;width:189.90px;height:52.35px;"><div class="ln" style="top:10.58px;">Reid</div></div><div class="c" style="left:2366.80px;top:1386.90px;width:189.90px;height:52.35px;"><div class="ln" style="top:10.58px;">Business Management</div></div><div class="c" style="left:2557.70px;top:1386.90px;width:189.90px;height:52.35px;"><div class="ln" style="top:10.58px;">C-Team</div></div><div class="c" style="left:2748.60px;top:1386.90px;width:189.90px;height:52.35px;"><div class="ln" style="top:10.58px;">CEO</div></div><div class="c" style="left:3321.30px;top:1386.90px;width:189.90px;height:52.35px;"><div class="rn" style="top:10.58px;">5.12E+09</div></div><div class="c" style="left:3512.20px;top:1386.90px;width:189.90px;height:52.35px;"><div class="rn" style="top:10.58px;">78701</div></div><div class="c" style="left:3703.10px;top:1386.90px;width:82.90px;height:52.35px;"><div class="ln" style="top:10.58px;">TX</div></div><div class="c" style="left:76.00px;top:1440.25px;width:189.90px;height:52.35px;"><div class="ln" style="top:10.58px;">AWHXviYMQ</div></div><div class="c" style="left:266.90px;top:1440.25px;width:189.90px;height:52.35px;"><div class="ln" style="top:10.58px;">2211 South</div></div><div class="c" style="left:457.80px;top:1440.25px;width:380.80px;height:52.35px;"><div class="ln" style="top:10.58px;">Jordan Foster LLC</div></div><div class="c" style="left:839.60px;top:1440.25px;width:189.90px;height:52.35px;"><div class="ln" style="top:10.58px;">Austin</div></div><div class="c" style="left:1030.50px;top:1440.25px;width:189.90px;height:52.35px;"><div class="ln" style="top:10.58px;">US</div></div><div class="c" style="left:1221.40px;top:1440.25px;width:189.90px;height:52.35px;"><div class="ln" style="top:10.58px;">2018-02-27</div></div><div class="c" style="left:1412.30px;top:1440.25px;width:189.90px;height:52.35px;"><div class="ln" style="top:10.58px;">2018-03-07</div></div><div class="c" style="left:1603.20px;top:1440.25px;width:189.90px;height:52.35px;"><div class="ln" style="top:10.58px;">presidentsp</div></div><div class="c" style="left:1794.10px;top:1440.25px;width:189.90px;height:52.35px;"><div class="ln" style="top:10.58px;">Darren</div></div><div class="c" style="left:1985.00px;top:1440.25px;width:189.90px;height:52.35px;"><div class="ln" style="top:10.58px;">presidentsp</div></div><div class="c" style="left:2175.90px;top:1440.25px;width:189.90px;height:52.35px;"><div class="ln" style="top:10.58px;">Woody</div></div><div class="c" style="left:2366.80px;top:1440.25px;width:189.90px;height:52.35px;"><div class="ln" style="top:10.58px;">Business Management</div></div><div class="c" style="left:2557.70px;top:1440.25px;width:189.90px;height:52.35px;"><div class="ln" style="top:10.58px;">C-Team</div></div><div class="c" style="left:2748.60px;top:1440.25px;width:189.90px;height:52.35px;"><div class="ln" style="top:10.58px;">CEO</div></div><div class="c" style="left:3321.30px;top:1440.25px;width:189.90px;height:52.35px;"><div class="rn" style="top:10.58px;">2.14E+09</div></div><div class="c" style="left:3512.20px;top:1440.25px;width:189.90px;height:52.35px;"><div class="rn" style="top:10.58px;">78741</div></div><div class="c" style="left:3703.10px;top:1440.25px;width:82.90px;height:52.35px;"><div class="ln" style="top:10.58px;">TX</div></div><div class="c" style="left:76.00px;top:1493.60px;width:189.90px;height:52.35px;"><div class="ln" style="top:10.58px;">AWHoF8-oQ</div></div><div class="c" style="left:266.90px;top:1493.60px;width:189.90px;height:52.35px;"><div class="ln" style="top:10.58px;">600 Congress</div></div><div class="c" style="left:457.80px;top:1493.60px;width:189.90px;height:52.35px;"><div class="ln" style="top:10.58px;">Oransi</div></div><div class="c" style="left:839.60px;top:1493.60px;width:189.90px;height:52.35px;"><div class="ln" style="top:10.58px;">Austin</div></div><div class="c" style="left:1030.50px;top:1493.60px;width:189.90px;height:52.35px;"><div class="ln" style="top:10.58px;">US</div></div><div class="c" style="left:1221.40px;top:1493.60px;width:189.90px;height:52.35px;"><div class="ln" style="top:10.58px;">2018-03-02</div></div><div class="c" style="left:1412.30px;top:1493.60px;width:189.90px;height:52.35px;"><div class="ln" style="top:10.58px;">2018-03-09</div></div><div class="c" style="left:1603.20px;top:1493.60px;width:189.90px;height:52.35px;"><div class="ln" style="top:10.58px;">pmann@oransi</div></div><div class="c" style="left:1794.10px;top:1493.60px;width:189.90px;height:52.35px;"><div class="ln" style="top:10.58px;">Peter</div></div><div class="c" style="left:1985.00px;top:1493.60px;width:189.90px;height:52.35px;"><div class="ln" style="top:10.58px;">pmannoransi</div></div><div class="c" style="left:2175.90px;top:1493.60px;width:189.90px;height:52.35px;"><div class="ln" style="top:10.58px;">Mann</div></div><div class="c" style="left:2366.80px;top:1493.60px;width:189.90px;height:52.35px;"><div class="ln" style="top:10.58px;">Business Management</div></div><div class="c" style="left:2557.70px;top:1493.60px;width:189.90px;height:52.35px;"><div class="ln" style="top:10.58px;">C-Team</div></div><div class="c" style="left:2748.60px;top:1493.60px;width:189.90px;height:52.35px;"><div class="ln" style="top:10.58px;">CEO</div></div><div class="c" style="left:3321.30px;top:1493.60px;width:189.90px;height:52.35px;"><div class="rn" style="top:10.58px;">5.12E+09</div></div><div class="c" style="left:3512.20px;top:1493.60px;width:189.90px;height:52.35px;"><div class="rn" style="top:10.58px;">78701</div></div><div class="c" style="left:3703.10px;top:1493.60px;width:82.90px;height:52.35px;"><div class="ln" style="top:10.58px;">TX</div></div><div class="c" style="left:76.00px;top:1546.95px;width:189.90px;height:52.35px;"><div class="ln" style="top:10.58px;">AWHYBcyflQ</div></div><div class="c" style="left:266.90px;top:1546.95px;width:189.90px;height:52.35px;"><div class="ln" style="top:10.58px;">1123 Byers</div></div><div class="c" style="left:457.80px;top:1546.95px;width:189.90px;height:52.35px;"><div class="ln" style="top:10.58px;">augzoo LLC</div></div><div class="c" style="left:839.60px;top:1546.95px;width:189.90px;height:52.35px;"><div class="ln" style="top:10.58px;">Austin</div></div><div class="c" style="left:1030.50px;top:1546.95px;width:189.90px;height:52.35px;"><div class="ln" style="top:10.58px;">US</div></div><div class="c" style="left:1221.40px;top:1546.95px;width:189.90px;height:52.35px;"><div class="ln" style="top:10.58px;">2018-02-27</div></div><div class="c" style="left:1412.30px;top:1546.95px;width:189.90px;height:52.35px;"><div class="ln" style="top:10.58px;">2018-03-07</div></div><div class="c" style="left:1603.20px;top:1546.95px;width:189.90px;height:52.35px;"><div class="ln" style="top:10.58px;">michael@augzoo</div></div><div class="c" style="left:1794.10px;top:1546.95px;width:189.90px;height:52.35px;"><div class="ln" style="top:10.58px;">Michael</div></div><div class="c" style="left:1985.00px;top:1546.95px;width:189.90px;height:52.35px;"><div class="ln" style="top:10.58px;">michaelaugzoo</div></div><div class="c" style="left:2175.90px;top:1546.95px;width:189.90px;height:52.35px;"><div class="ln" style="top:10.58px;">Mendoza</div></div><div class="c" style="left:2366.80px;top:1546.95px;width:189.90px;height:52.35px;"><div class="ln" style="top:10.58px;">Business Management</div></div><div class="c" style="left:2557.70px;top:1546.95px;width:189.90px;height:52.35px;"><div class="ln" style="top:10.58px;">C-Team</div></div><div class="c" style="left:2748.60px;top:1546.95px;width:189.90px;height:52.35px;"><div class="ln" style="top:10.58px;">CEO</div></div><div class="c" style="left:3321.30px;top:1546.95px;width:189.90px;height:52.35px;"><div class="rn" style="top:10.58px;">5.13E+09</div></div><div class="c" style="left:3512.20px;top:1546.95px;width:189.90px;height:52.35px;"><div class="rn" style="top:10.58px;">78753</div></div><div class="c" style="left:3703.10px;top:1546.95px;width:82.90px;height:52.35px;"><div class="ln" style="top:10.58px;">TX</div></div><div class="c" style="left:76.00px;top:1600.30px;width:189.90px;height:52.35px;"><div class="ln" style="top:10.58px;">AWHnJqrlCQ</div></div><div class="c" style="left:266.90px;top:1600.30px;width:189.90px;height:52.35px;"><div class="ln" style="top:10.58px;">7516 Doswell</div></div><div class="c" style="left:457.80px;top:1600.30px;width:189.90px;height:52.35px;"><div class="ln" style="top:10.58px;">Koke Creative</div></div><div class="c" style="left:648.70px;top:1600.30px;width:189.90px;height:52.35px;"><div class="ln" style="top:10.58px;">Amusement parks</div></div><div class="c" style="left:839.60px;top:1600.30px;width:189.90px;height:52.35px;"><div class="ln" style="top:10.58px;">Austin</div></div><div class="c" style="left:1030.50px;top:1600.30px;width:189.90px;height:52.35px;"><div class="ln" style="top:10.58px;">US</div></div><div class="c" style="left:1221.40px;top:1600.30px;width:189.90px;height:52.35px;"><div class="ln" style="top:10.58px;">2018-03-02</div></div><div class="c" style="left:1412.30px;top:1600.30px;width:189.90px;height:52.35px;"><div class="ln" style="top:10.58px;">2018-03-09</div></div><div class="c" style="left:1603.20px;top:1600.30px;width:189.90px;height:52.35px;"><div class="ln" style="top:10.58px;">jeri@kokecreative</div></div><div class="c" style="left:1794.10px;top:1600.30px;width:189.90px;height:52.35px;"><div class="ln" style="top:10.58px;">Jeri</div></div><div class="c" style="left:1985.00px;top:1600.30px;width:189.90px;height:52.35px;"><div class="ln" style="top:10.58px;">jerikokecreative</div></div><div class="c" style="left:2175.90px;top:1600.30px;width:189.90px;height:52.35px;"><div class="ln" style="top:10.58px;">Saper</div></div><div class="c" style="left:2366.80px;top:1600.30px;width:189.90px;height:52.35px;"><div class="ln" style="top:10.58px;">Business Management</div></div><div class="c" style="left:2557.70px;top:1600.30px;width:189.90px;height:52.35px;"><div class="ln" style="top:10.58px;">C-Team</div></div><div class="c" style="left:2748.60px;top:1600.30px;width:189.90px;height:52.35px;"><div class="ln" style="top:10.58px;">CEO</div></div><div class="c" style="left:2939.50px;top:1600.30px;width:189.90px;height:52.35px;"><div class="rn" style="top:10.58px;">1</div></div><div class="c" style="left:3130.40px;top:1600.30px;width:189.90px;height:52.35px;"><div class="rn" style="top:10.58px;">19</div></div><div class="c" style="left:3321.30px;top:1600.30px;width:189.90px;height:52.35px;"><div class="rn" style="top:10.58px;">#########</div></div><div class="c" style="left:3512.20px;top:1600.30px;width:189.90px;height:52.35px;"><div class="rn" style="top:10.58px;">78739</div></div><div class="c" style="left:3703.10px;top:1600.30px;width:82.90px;height:52.35px;"><div class="ln" style="top:10.58px;">TX</div></div><div class="c" style="left:76.00px;top:1653.65px;width:189.90px;height:52.35px;"><div class="ln" style="top:10.58px;">AWHYB2S_Q</div></div><div class="c" style="left:266.90px;top:1653.65px;width:189.90px;height:52.35px;"><div class="ln" style="top:10.58px;">5301 South</div></div><div class="c" style="left:457.80px;top:1653.65px;width:189.90px;height:52.35px;"><div class="ln" style="top:10.58px;">ResearchPoint</div></div><div class="c" style="left:648.70px;top:1653.65px;width:189.90px;height:52.35px;"><div class="ln" style="top:10.58px;">Drugs, proprietaries</div></div><div class="c" style="left:839.60px;top:1653.65px;width:189.90px;height:52.35px;"><div class="ln" style="top:10.58px;">Austin</div></div><div class="c" style="left:1030.50px;top:1653.65px;width:189.90px;height:52.35px;"><div class="ln" style="top:10.58px;">US</div></div><div class="c" style="left:1221.40px;top:1653.65px;width:189.90px;height:52.35px;"><div class="ln" style="top:10.58px;">2018-02-27</div></div><div class="c" style="left:1412.30px;top:1653.65px;width:189.90px;height:52.35px;"><div class="ln" style="top:10.58px;">2018-03-07</div></div><div class="c" style="left:1603.20px;top:1653.65px;width:189.90px;height:52.35px;"><div class="ln" style="top:10.58px;">jfarinacci@rp</div></div><div class="c" style="left:1794.10px;top:1653.65px;width:189.90px;height:52.35px;"><div class="ln" style="top:10.58px;">John</div></div><div class="c" style="left:1985.00px;top:1653.65px;width:189.90px;height:52.35px;"><div class="ln" style="top:10.58px;">jfarinaccire</div></div><div class="c" style="left:2175.90px;top:1653.65px;width:189.90px;height:52.35px;"><div class="ln" style="top:10.58px;">Farinacci</div></div><div class="c" style="left:2366.80px;top:1653.65px;width:189.90px;height:52.35px;"><div class="ln" style="top:10.58px;">Business Management</div></div><div class="c" style="left:2557.70px;top:1653.65px;width:189.90px;height:52.35px;"><div class="ln" style="top:10.58px;">C-Team</div></div><div class="c" style="left:2748.60px;top:1653.65px;width:189.90px;height:52.35px;"><div class="ln" style="top:10.58px;">CEO</div></div><div class="c" style="left:2939.50px;top:1653.65px;width:189.90px;height:52.35px;"><div class="rn" style="top:10.58px;">100</div></div><div class="c" style="left:3130.40px;top:1653.65px;width:189.90px;height:52.35px;"><div class="rn" style="top:10.58px;">499</div></div><div class="c" style="left:3321.30px;top:1653.65px;width:189.90px;height:52.35px;"><div class="rn" style="top:10.58px;">5.12E+09</div></div><div class="c" style="left:3512.20px;top:1653.65px;width:189.90px;height:52.35px;"><div class="rn" style="top:10.58px;">78735</div></div><div class="c" style="left:3703.10px;top:1653.65px;width:82.90px;height:52.35px;"><div class="ln" style="top:10.58px;">TX</div></div><div class="c" style="left:76.00px;top:1707.00px;width:189.90px;height:52.35px;"><div class="ln" style="top:10.58px;">AWHnDvRrQ</div></div><div class="c" style="left:266.90px;top:1707.00px;width:189.90px;height:52.35px;"><div class="ln" style="top:10.58px;">1807 C West</div></div><div class="c" style="left:457.80px;top:1707.00px;width:189.90px;height:52.35px;"><div class="ln" style="top:10.58px;">Molecular Insight</div></div><div class="c" style="left:648.70px;top:1707.00px;width:189.90px;height:52.35px;"><div class="ln" style="top:10.58px;">Special industry</div></div><div class="c" style="left:839.60px;top:1707.00px;width:189.90px;height:52.35px;"><div class="ln" style="top:10.58px;">Austin</div></div><div class="c" style="left:1030.50px;top:1707.00px;width:189.90px;height:52.35px;"><div class="ln" style="top:10.58px;">US</div></div><div class="c" style="left:1221.40px;top:1707.00px;width:189.90px;height:52.35px;"><div class="ln" style="top:10.58px;">2018-03-02</div></div><div class="c" style="left:1412.30px;top:1707.00px;width:189.90px;height:52.35px;"><div class="ln" style="top:10.58px;">2018-03-09</div></div><div class="c" style="left:1603.20px;top:1707.00px;width:189.90px;height:52.35px;"><div class="ln" style="top:10.58px;">dgino@molecular</div></div><div class="c" style="left:1794.10px;top:1707.00px;width:189.90px;height:52.35px;"><div class="ln" style="top:10.58px;">David</div></div><div class="c" style="left:1985.00px;top:1707.00px;width:189.90px;height:52.35px;"><div class="ln" style="top:10.58px;">dginomolecular</div></div><div class="c" style="left:2175.90px;top:1707.00px;width:189.90px;height:52.35px;"><div class="ln" style="top:10.58px;">Gino</div></div><div class="c" style="left:2366.80px;top:1707.00px;width:189.90px;height:52.35px;"><div class="ln" style="top:10.58px;">Business Management</div></div><div class="c" style="left:2557.70px;top:1707.00px;width:189.90px;height:52.35px;"><div class="ln" style="top:10.58px;">C-Team</div></div><div class="c" style="left:2748.60px;top:1707.00px;width:189.90px;height:52.35px;"><div class="ln" style="top:10.58px;">CEO</div></div><div class="c" style="left:2939.50px;top:1707.00px;width:189.90px;height:52.35px;"><div class="rn" style="top:10.58px;">20</div></div><div class="c" style="left:3130.40px;top:1707.00px;width:189.90px;height:52.35px;"><div class="rn" style="top:10.58px;">99</div></div><div class="c" style="left:3321.30px;top:1707.00px;width:189.90px;height:52.35px;"><div class="rn" style="top:10.58px;">5.13E+09</div></div><div class="c" style="left:3512.20px;top:1707.00px;width:189.90px;height:52.35px;"><div class="rn" style="top:10.58px;">78758</div></div><div class="c" style="left:3703.10px;top:1707.00px;width:82.90px;height:52.35px;"><div class="ln" style="top:10.58px;">TX</div></div><div class="c" style="left:76.00px;top:1760.35px;width:189.90px;height:52.35px;"><div class="ln" style="top:10.58px;">AWHYBM9Q</div></div><div class="c" style="left:266.90px;top:1760.35px;width:189.90px;height:52.35px;"><div class="ln" style="top:10.58px;">3636 Executive</div></div><div class="c" style="left:457.80px;top:1760.35px;width:380.80px;height:52.35px;"><div class="ln" style="top:10.58px;">Libby King &amp; Associates</div></div><div class="c" style="left:839.60px;top:1760.35px;width:189.90px;height:52.35px;"><div class="ln" style="top:10.58px;">Austin</div></div><div class="c" style="left:1030.50px;top:1760.35px;width:189.90px;height:52.35px;"><div class="ln" style="top:10.58px;">US</div></div><div class="c" style="left:1221.40px;top:1760.35px;width:189.90px;height:52.35px;"><div class="ln" style="top:10.58px;">2018-02-27</div></div><div class="c" style="left:1412.30px;top:1760.35px;width:189.90px;height:52.35px;"><div class="ln" style="top:10.58px;">2018-03-07</div></div><div class="c" style="left:1603.20px;top:1760.35px;width:189.90px;height:52.35px;"><div class="ln" style="top:10.58px;">lking@kingcpa</div></div><div class="c" style="left:1794.10px;top:1760.35px;width:189.90px;height:52.35px;"><div class="ln" style="top:10.58px;">Libby</div></div><div class="c" style="left:1985.00px;top:1760.35px;width:189.90px;height:52.35px;"><div class="ln" style="top:10.58px;">lkingkingcpa</div></div><div class="c" style="left:2175.90px;top:1760.35px;width:189.90px;height:52.35px;"><div class="ln" style="top:10.58px;">King</div></div><div class="c" style="left:2366.80px;top:1760.35px;width:189.90px;height:52.35px;"><div class="ln" style="top:10.58px;">Business Management</div></div><div class="c" style="left:2557.70px;top:1760.35px;width:189.90px;height:52.35px;"><div class="ln" style="top:10.58px;">C-Team</div></div><div class="c" style="left:2748.60px;top:1760.35px;width:189.90px;height:52.35px;"><div class="ln" style="top:10.58px;">CEO</div></div><div class="c" style="left:3321.30px;top:1760.35px;width:189.90px;height:52.35px;"><div class="rn" style="top:10.58px;">5.12E+09</div></div><div class="c" style="left:3512.20px;top:1760.35px;width:189.90px;height:52.35px;"><div class="rn" style="top:10.58px;">78731</div></div><div class="c" style="left:3703.10px;top:1760.35px;width:82.90px;height:52.35px;"><div class="ln" style="top:10.58px;">TX</div></div><div class="c" style="left:76.00px;top:1813.70px;width:189.90px;height:52.35px;"><div class="ln" style="top:10.58px;">AWHX9_TIIQ</div></div><div class="c" style="left:266.90px;top:1813.70px;width:189.90px;height:52.35px;"><div class="ln" style="top:10.58px;">12466 Los Indios</div></div><div class="c" style="left:457.80px;top:1813.70px;width:189.90px;height:52.35px;"><div class="ln" style="top:10.58px;">Elite Marketing</div></div><div class="c" style="left:648.70px;top:1813.70px;width:189.90px;height:52.35px;"><div class="ln" style="top:10.58px;">Insurance carriers</div></div><div class="c" style="left:839.60px;top:1813.70px;width:189.90px;height:52.35px;"><div class="ln" style="top:10.58px;">Austin</div></div><div class="c" style="left:1030.50px;top:1813.70px;width:189.90px;height:52.35px;"><div class="ln" style="top:10.58px;">US</div></div><div class="c" style="left:1221.40px;top:1813.70px;width:189.90px;height:52.35px;"><div class="ln" style="top:10.58px;">2018-02-27</div></div><div class="c" style="left:1412.30px;top:1813.70px;width:189.90px;height:52.35px;"><div class="ln" style="top:10.58px;">2018-03-07</div></div><div class="c" style="left:1603.20px;top:1813.70px;width:189.90px;height:52.35px;"><div class="ln" style="top:10.58px;">tarcher@elite</div></div><div class="c" style="left:1794.10px;top:1813.70px;width:189.90px;height:52.35px;"><div class="ln" style="top:10.58px;">Durr</div></div><div class="c" style="left:1985.00px;top:1813.70px;width:189.90px;height:52.35px;"><div class="ln" style="top:10.58px;">tarcherelite</div></div><div class="c" style="left:2175.90px;top:1813.70px;width:189.90px;height:52.35px;"><div class="ln" style="top:10.58px;">Sexton</div></div><div class="c" style="left:2366.80px;top:1813.70px;width:189.90px;height:52.35px;"><div class="ln" style="top:10.58px;">Business Management</div></div><div class="c" style="left:2557.70px;top:1813.70px;width:189.90px;height:52.35px;"><div class="ln" style="top:10.58px;">C-Team</div></div><div class="c" style="left:2748.60px;top:1813.70px;width:189.90px;height:52.35px;"><div class="ln" style="top:10.58px;">CEO</div></div><div class="c" style="left:2939.50px;top:1813.70px;width:189.90px;height:52.35px;"><div class="rn" style="top:10.58px;">20</div></div><div class="c" style="left:3130.40px;top:1813.70px;width:189.90px;height:52.35px;"><div class="rn" style="top:10.58px;">99</div></div><div class="c" style="left:3321.30px;top:1813.70px;width:189.90px;height:52.35px;"><div class="rn" style="top:10.58px;">#########</div></div><div class="c" style="left:3512.20px;top:1813.70px;width:189.90px;height:52.35px;"><div class="rn" style="top:10.58px;">78729</div></div><div class="c" style="left:3703.10px;top:1813.70px;width:82.90px;height:52.35px;"><div class="ln" style="top:10.58px;">TX</div></div><div class="c" style="left:76.00px;top:1867.05px;width:189.90px;height:52.35px;"><div class="ln" style="top:10.58px;">AWHX9XMQ</div></div><div class="c" style="left:266.90px;top:1867.05px;width:189.90px;height:52.35px;"><div class="ln" style="top:10.58px;">901 S. Mopac</div></div><div class="c" style="left:457.80px;top:1867.05px;width:189.90px;height:52.35px;"><div class="ln" style="top:10.58px;">GSC</div></div><div class="c" style="left:839.60px;top:1867.05px;width:189.90px;height:52.35px;"><div class="ln" style="top:10.58px;">Austin</div></div><div class="c" style="left:1030.50px;top:1867.05px;width:189.90px;height:52.35px;"><div class="ln" style="top:10.58px;">US</div></div><div class="c" style="left:1221.40px;top:1867.05px;width:189.90px;height:52.35px;"><div class="ln" style="top:10.58px;">2018-02-27</div></div><div class="c" style="left:1412.30px;top:1867.05px;width:189.90px;height:52.35px;"><div class="ln" style="top:10.58px;">2018-03-07</div></div><div class="c" style="left:1603.20px;top:1867.05px;width:189.90px;height:52.35px;"><div class="ln" style="top:10.58px;">cornelius@gsc</div></div><div class="c" style="left:1794.10px;top:1867.05px;width:189.90px;height:52.35px;"><div class="ln" style="top:10.58px;">TOM</div></div><div class="c" style="left:1985.00px;top:1867.05px;width:189.90px;height:52.35px;"><div class="ln" style="top:10.58px;">corneliusgsc</div></div><div class="c" style="left:2175.90px;top:1867.05px;width:189.90px;height:52.35px;"><div class="ln" style="top:10.58px;">CORNELIUS</div></div><div class="c" style="left:2366.80px;top:1867.05px;width:189.90px;height:52.35px;"><div class="ln" style="top:10.58px;">Business Management</div></div><div class="c" style="left:2557.70px;top:1867.05px;width:189.90px;height:52.35px;"><div class="ln" style="top:10.58px;">C-Team</div></div><div class="c" style="left:2748.60px;top:1867.05px;width:189.90px;height:52.35px;"><div class="ln" style="top:10.58px;">CEO</div></div><div class="c" style="left:3321.30px;top:1867.05px;width:189.90px;height:52.35px;"><div class="rn" style="top:10.58px;">5.12E+09</div></div><div class="c" style="left:3512.20px;top:1867.05px;width:189.90px;height:52.35px;"><div class="rn" style="top:10.58px;">78746</div></div><div class="c" style="left:3703.10px;top:1867.05px;width:82.90px;height:52.35px;"><div class="ln" style="top:10.58px;">TX</div></div><div class="c" style="left:76.00px;top:1920.40px;width:189.90px;height:52.35px;"><div class="ln" style="top:10.58px;">AWHXvS4ILQ</div></div><div class="c" style="left:266.90px;top:1920.40px;width:189.90px;height:52.35px;"><div class="ln" style="top:10.58px;">8101 Navidad</div></div><div class="c" style="left:457.80px;top:1920.40px;width:380.80px;height:52.35px;"><div class="ln" style="top:10.58px;">CMO Consulting Group</div></div><div class="c" style="left:839.60px;top:1920.40px;width:189.90px;height:52.35px;"><div class="ln" style="top:10.58px;">Austin</div></div><div class="c" style="left:1030.50px;top:1920.40px;width:189.90px;height:52.35px;"><div class="ln" style="top:10.58px;">US</div></div><div class="c" style="left:1221.40px;top:1920.40px;width:189.90px;height:52.35px;"><div class="ln" style="top:10.58px;">2018-02-27</div></div><div class="c" style="left:1412.30px;top:1920.40px;width:189.90px;height:52.35px;"><div class="ln" style="top:10.58px;">2018-03-07</div></div><div class="c" style="left:1603.20px;top:1920.40px;width:189.90px;height:52.35px;"><div class="ln" style="top:10.58px;">info@cmoconsulting</div></div><div class="c" style="left:1794.10px;top:1920.40px;width:189.90px;height:52.35px;"><div class="ln" style="top:10.58px;">Jon</div></div><div class="c" style="left:1985.00px;top:1920.40px;width:189.90px;height:52.35px;"><div class="ln" style="top:10.58px;">infocmoconsulting</div></div><div class="c" style="left:2175.90px;top:1920.40px;width:189.90px;height:52.35px;"><div class="ln" style="top:10.58px;">Wilson</div></div><div class="c" style="left:2366.80px;top:1920.40px;width:189.90px;height:52.35px;"><div class="ln" style="top:10.58px;">Business Management</div></div><div class="c" style="left:2557.70px;top:1920.40px;width:189.90px;height:52.35px;"><div class="ln" style="top:10.58px;">C-Team</div></div><div class="c" style="left:2748.60px;top:1920.40px;width:189.90px;height:52.35px;"><div class="ln" style="top:10.58px;">CEO</div></div><div class="c" style="left:3321.30px;top:1920.40px;width:189.90px;height:52.35px;"><div class="rn" style="top:10.58px;">5.12E+09</div></div><div class="c" style="left:3512.20px;top:1920.40px;width:189.90px;height:52.35px;"><div class="rn" style="top:10.58px;">78735</div></div><div class="c" style="left:3703.10px;top:1920.40px;width:82.90px;height:52.35px;"><div class="ln" style="top:10.58px;">TX</div></div><div class="c" style="left:76.00px;top:1973.75px;width:189.90px;height:52.35px;"><div class="ln" style="top:10.58px;">AWHX_vm3Q</div></div><div class="c" style="left:266.90px;top:1973.75px;width:189.90px;height:52.35px;"><div class="ln" style="top:10.58px;">8121 FM 2222</div></div><div class="c" style="left:457.80px;top:1973.75px;width:189.90px;height:52.35px;"><div class="ln" style="top:10.58px;">RRE Austin Solar</div></div><div class="c" style="left:648.70px;top:1973.75px;width:189.90px;height:52.35px;"><div class="ln" style="top:10.58px;">Electric and</div></div><div class="c" style="left:839.60px;top:1973.75px;width:189.90px;height:52.35px;"><div class="ln" style="top:10.58px;">Austin</div></div><div class="c" style="left:1030.50px;top:1973.75px;width:189.90px;height:52.35px;"><div class="ln" style="top:10.58px;">US</div></div><div class="c" style="left:1221.40px;top:1973.75px;width:189.90px;height:52.35px;"><div class="ln" style="top:10.58px;">2018-02-27</div></div><div class="c" style="left:1412.30px;top:1973.75px;width:189.90px;height:52.35px;"><div class="ln" style="top:10.58px;">2018-03-07</div></div><div class="c" style="left:1603.20px;top:1973.75px;width:189.90px;height:52.35px;"><div class="ln" style="top:10.58px;">daven@rre</div></div><div class="c" style="left:1794.10px;top:1973.75px;width:189.90px;height:52.35px;"><div class="ln" style="top:10.58px;">Daven</div></div><div class="c" style="left:1985.00px;top:1973.75px;width:189.90px;height:52.35px;"><div class="ln" style="top:10.58px;">davenrresolar</div></div><div class="c" style="left:2175.90px;top:1973.75px;width:189.90px;height:52.35px;"><div class="ln" style="top:10.58px;">Mehta</div></div><div class="c" style="left:2366.80px;top:1973.75px;width:189.90px;height:52.35px;"><div class="ln" style="top:10.58px;">Business Management</div></div><div class="c" style="left:2557.70px;top:1973.75px;width:189.90px;height:52.35px;"><div class="ln" style="top:10.58px;">C-Team</div></div><div class="c" style="left:2748.60px;top:1973.75px;width:189.90px;height:52.35px;"><div class="ln" style="top:10.58px;">CEO</div></div><div class="c" style="left:2939.50px;top:1973.75px;width:189.90px;height:52.35px;"><div class="rn" style="top:10.58px;">1</div></div><div class="c" style="left:3130.40px;top:1973.75px;width:189.90px;height:52.35px;"><div class="rn" style="top:10.58px;">19</div></div><div class="c" style="left:3321.30px;top:1973.75px;width:189.90px;height:52.35px;"><div class="rn" style="top:10.58px;">5.12E+09</div></div><div class="c" style="left:3512.20px;top:1973.75px;width:189.90px;height:52.35px;"><div class="rn" style="top:10.58px;">78746</div></div><div class="c" style="left:3703.10px;top:1973.75px;width:82.90px;height:52.35px;"><div class="ln" style="top:10.58px;">TX</div></div><div class="c" style="left:76.00px;top:2027.10px;width:189.90px;height:52.35px;"><div class="ln" style="top:10.58px;">AWHYCdRVQ</div></div><div class="c" style="left:266.90px;top:2027.10px;width:189.90px;height:52.35px;"><div class="ln" style="top:10.58px;">1817 W Braker</div></div><div class="c" style="left:457.80px;top:2027.10px;width:189.90px;height:52.35px;"><div class="ln" style="top:10.58px;">Revenue Cycle</div></div><div class="c" style="left:648.70px;top:2027.10px;width:189.90px;height:52.35px;"><div class="ln" style="top:10.58px;">Business services</div></div><div class="c" style="left:839.60px;top:2027.10px;width:189.90px;height:52.35px;"><div class="ln" style="top:10.58px;">Austin</div></div><div class="c" style="left:1030.50px;top:2027.10px;width:189.90px;height:52.35px;"><div class="ln" style="top:10.58px;">US</div></div><div class="c" style="left:1221.40px;top:2027.10px;width:189.90px;height:52.35px;"><div class="ln" style="top:10.58px;">2018-02-27</div></div><div class="c" style="left:1412.30px;top:2027.10px;width:189.90px;height:52.35px;"><div class="ln" style="top:10.58px;">2018-03-07</div></div><div class="c" style="left:1603.20px;top:2027.10px;width:189.90px;height:52.35px;"><div class="ln" style="top:10.58px;">rdigiaimo@rev</div></div><div class="c" style="left:1794.10px;top:2027.10px;width:189.90px;height:52.35px;"><div class="ln" style="top:10.58px;">Ron</div></div><div class="c" style="left:1985.00px;top:2027.10px;width:189.90px;height:52.35px;"><div class="ln" style="top:10.58px;">rdigiaimorev</div></div><div class="c" style="left:2175.90px;top:2027.10px;width:189.90px;height:52.35px;"><div class="ln" style="top:10.58px;">DiGiaimo</div></div><div class="c" style="left:2366.80px;top:2027.10px;width:189.90px;height:52.35px;"><div class="ln" style="top:10.58px;">Business Management</div></div><div class="c" style="left:2557.70px;top:2027.10px;width:189.90px;height:52.35px;"><div class="ln" style="top:10.58px;">C-Team</div></div><div class="c" style="left:2748.60px;top:2027.10px;width:189.90px;height:52.35px;"><div class="ln" style="top:10.58px;">CEO</div></div><div class="c" style="left:2939.50px;top:2027.10px;width:189.90px;height:52.35px;"><div class="rn" style="top:10.58px;">100</div></div><div class="c" style="left:3130.40px;top:2027.10px;width:189.90px;height:52.35px;"><div class="rn" style="top:10.58px;">499</div></div><div class="c" style="left:3321.30px;top:2027.10px;width:189.90px;height:52.35px;"><div class="rn" style="top:10.58px;">5.13E+09</div></div><div class="c" style="left:3512.20px;top:2027.10px;width:189.90px;height:52.35px;"><div class="rn" style="top:10.58px;">78758</div></div><div class="c" style="left:3703.10px;top:2027.10px;width:82.90px;height:52.35px;"><div class="ln" style="top:10.58px;">TX</div></div><div class="c" style="left:76.00px;top:2080.45px;width:189.90px;height:52.35px;"><div class="ln" style="top:10.58px;">AWHnCWgQ</div></div><div class="c" style="left:266.90px;top:2080.45px;width:189.90px;height:52.35px;"><div class="ln" style="top:10.58px;">PO Box 9247</div></div><div class="c" style="left:457.80px;top:2080.45px;width:189.90px;height:52.35px;"><div class="ln" style="top:10.58px;">Falcon Insurance</div></div><div class="c" style="left:648.70px;top:2080.45px;width:189.90px;height:52.35px;"><div class="ln" style="top:10.58px;">Insurance agents</div></div><div class="c" style="left:839.60px;top:2080.45px;width:189.90px;height:52.35px;"><div class="ln" style="top:10.58px;">Austin</div></div><div class="c" style="left:1030.50px;top:2080.45px;width:189.90px;height:52.35px;"><div class="ln" style="top:10.58px;">US</div></div><div class="c" style="left:1221.40px;top:2080.45px;width:189.90px;height:52.35px;"><div class="ln" style="top:10.58px;">2018-03-02</div></div><div class="c" style="left:1412.30px;top:2080.45px;width:189.90px;height:52.35px;"><div class="ln" style="top:10.58px;">2018-03-09</div></div><div class="c" style="left:1603.20px;top:2080.45px;width:189.90px;height:52.35px;"><div class="ln" style="top:10.58px;">pparrish@falcon</div></div><div class="c" style="left:1794.10px;top:2080.45px;width:189.90px;height:52.35px;"><div class="ln" style="top:10.58px;">Phil</div></div><div class="c" style="left:1985.00px;top:2080.45px;width:189.90px;height:52.35px;"><div class="ln" style="top:10.58px;">pparrishfalcon</div></div><div class="c" style="left:2175.90px;top:2080.45px;width:189.90px;height:52.35px;"><div class="ln" style="top:10.58px;">Parrish</div></div><div class="c" style="left:2366.80px;top:2080.45px;width:189.90px;height:52.35px;"><div class="ln" style="top:10.58px;">Business Management</div></div><div class="c" style="left:2557.70px;top:2080.45px;width:189.90px;height:52.35px;"><div class="ln" style="top:10.58px;">C-Team</div></div><div class="c" style="left:2748.60px;top:2080.45px;width:189.90px;height:52.35px;"><div class="ln" style="top:10.58px;">CEO</div></div><div class="c" style="left:2939.50px;top:2080.45px;width:189.90px;height:52.35px;"><div class="rn" style="top:10.58px;">20</div></div><div class="c" style="left:3130.40px;top:2080.45px;width:189.90px;height:52.35px;"><div class="rn" style="top:10.58px;">99</div></div><div class="c" style="left:3321.30px;top:2080.45px;width:189.90px;height:52.35px;"><div class="rn" style="top:10.58px;">#########</div></div><div class="c" style="left:3512.20px;top:2080.45px;width:189.90px;height:52.35px;"><div class="rn" style="top:10.58px;">78709</div></div><div class="c" style="left:3703.10px;top:2080.45px;width:82.90px;height:52.35px;"><div class="ln" style="top:10.58px;">TX</div></div><div class="c" style="left:76.00px;top:2133.80px;width:189.90px;height:52.35px;"><div class="ln" style="top:10.58px;">AWHX8Na7Q</div></div><div class="c" style="left:266.90px;top:2133.80px;width:189.90px;height:52.35px;"><div class="ln" style="top:10.58px;">10920 Lakeline</div></div><div class="c" style="left:457.80px;top:2133.80px;width:189.90px;height:52.35px;"><div class="ln" style="top:10.58px;">Nelson Larry</div></div><div class="c" style="left:648.70px;top:2133.80px;width:189.90px;height:52.35px;"><div class="ln" style="top:10.58px;">Highway and</div></div><div class="c" style="left:839.60px;top:2133.80px;width:189.90px;height:52.35px;"><div class="ln" style="top:10.58px;">Austin</div></div><div class="c" style="left:1030.50px;top:2133.80px;width:189.90px;height:52.35px;"><div class="ln" style="top:10.58px;">US</div></div><div class="c" style="left:1221.40px;top:2133.80px;width:189.90px;height:52.35px;"><div class="ln" style="top:10.58px;">2018-02-27</div></div><div class="c" style="left:1412.30px;top:2133.80px;width:189.90px;height:52.35px;"><div class="ln" style="top:10.58px;">2018-03-07</div></div><div class="c" style="left:1603.20px;top:2133.80px;width:189.90px;height:52.35px;"><div class="ln" style="top:10.58px;">lnelson@larry</div></div><div class="c" style="left:1794.10px;top:2133.80px;width:189.90px;height:52.35px;"><div class="ln" style="top:10.58px;">Larry</div></div><div class="c" style="left:1985.00px;top:2133.80px;width:189.90px;height:52.35px;"><div class="ln" style="top:10.58px;">lnelsonlarry</div></div><div class="c" style="left:2175.90px;top:2133.80px;width:189.90px;height:52.35px;"><div class="ln" style="top:10.58px;">Nelson</div></div><div class="c" style="left:2366.80px;top:2133.80px;width:189.90px;height:52.35px;"><div class="ln" style="top:10.58px;">Business Management</div></div><div class="c" style="left:2557.70px;top:2133.80px;width:189.90px;height:52.35px;"><div class="ln" style="top:10.58px;">C-Team</div></div><div class="c" style="left:2748.60px;top:2133.80px;width:189.90px;height:52.35px;"><div class="ln" style="top:10.58px;">CEO</div></div><div class="c" style="left:2939.50px;top:2133.80px;width:189.90px;height:52.35px;"><div class="rn" style="top:10.58px;">20</div></div><div class="c" style="left:3130.40px;top:2133.80px;width:189.90px;height:52.35px;"><div class="rn" style="top:10.58px;">99</div></div><div class="c" style="left:3321.30px;top:2133.80px;width:189.90px;height:52.35px;"><div class="rn" style="top:10.58px;">5.12E+09</div></div><div class="c" style="left:3512.20px;top:2133.80px;width:189.90px;height:52.35px;"><div class="rn" style="top:10.58px;">78717</div></div><div class="c" style="left:3703.10px;top:2133.80px;width:82.90px;height:52.35px;"><div class="ln" style="top:10.58px;">TX</div></div><div class="c" style="left:76.00px;top:2187.15px;width:189.90px;height:52.35px;"><div class="ln" style="top:10.58px;">AWHXucUJQ</div></div><div class="c" style="left:266.90px;top:2187.15px;width:189.90px;height:52.35px;"><div class="ln" style="top:10.58px;">9901 Brodie</div></div><div class="c" style="left:457.80px;top:2187.15px;width:189.90px;height:52.35px;"><div class="ln" style="top:10.58px;">redcapeco</div></div><div class="c" style="left:839.60px;top:2187.15px;width:189.90px;height:52.35px;"><div class="ln" style="top:10.58px;">Austin</div></div><div class="c" style="left:1030.50px;top:2187.15px;width:189.90px;height:52.35px;"><div class="ln" style="top:10.58px;">US</div></div><div class="c" style="left:1221.40px;top:2187.15px;width:189.90px;height:52.35px;"><div class="ln" style="top:10.58px;">2018-02-27</div></div><div class="c" style="left:1412.30px;top:2187.15px;width:189.90px;height:52.35px;"><div class="ln" style="top:10.58px;">2018-03-07</div></div><div class="c" style="left:1603.20px;top:2187.15px;width:189.90px;height:52.35px;"><div class="ln" style="top:10.58px;">vevans@redcape</div></div><div class="c" style="left:1794.10px;top:2187.15px;width:189.90px;height:52.35px;"><div class="ln" style="top:10.58px;">Vickie</div></div><div class="c" style="left:1985.00px;top:2187.15px;width:189.90px;height:52.35px;"><div class="ln" style="top:10.58px;">vevansredcape</div></div><div class="c" style="left:2175.90px;top:2187.15px;width:189.90px;height:52.35px;"><div class="ln" style="top:10.58px;">Evans</div></div><div class="c" style="left:2366.80px;top:2187.15px;width:189.90px;height:52.35px;"><div class="ln" style="top:10.58px;">Business Management</div></div><div class="c" style="left:2557.70px;top:2187.15px;width:189.90px;height:52.35px;"><div class="ln" style="top:10.58px;">C-Team</div></div><div class="c" style="left:2748.60px;top:2187.15px;width:189.90px;height:52.35px;"><div class="ln" style="top:10.58px;">CEO</div></div><div class="c" style="left:3321.30px;top:2187.15px;width:189.90px;height:52.35px;"><div class="rn" style="top:10.58px;">8.78E+09</div></div><div class="c" style="left:3512.20px;top:2187.15px;width:189.90px;height:52.35px;"><div class="rn" style="top:10.58px;">78748</div></div><div class="c" style="left:3703.10px;top:2187.15px;width:82.90px;height:52.35px;"><div class="ln" style="top:10.58px;">TX</div></div><div class="c" style="left:76.00px;top:2240.50px;width:189.90px;height:52.35px;"><div class="ln" style="top:10.58px;">AWHXuWJ4Q</div></div><div class="c" style="left:266.90px;top:2240.50px;width:189.90px;height:52.35px;"><div class="ln" style="top:10.58px;">105 W. 8th St</div></div><div class="c" style="left:457.80px;top:2240.50px;width:380.80px;height:52.35px;"><div class="ln" style="top:10.58px;">Austin Beer Gardening</div></div><div class="c" style="left:839.60px;top:2240.50px;width:189.90px;height:52.35px;"><div class="ln" style="top:10.58px;">Austin</div></div><div class="c" style="left:1030.50px;top:2240.50px;width:189.90px;height:52.35px;"><div class="ln" style="top:10.58px;">US</div></div><div class="c" style="left:1221.40px;top:2240.50px;width:189.90px;height:52.35px;"><div class="ln" style="top:10.58px;">2018-02-27</div></div><div class="c" style="left:1412.30px;top:2240.50px;width:189.90px;height:52.35px;"><div class="ln" style="top:10.58px;">2018-03-07</div></div><div class="c" style="left:1603.20px;top:2240.50px;width:189.90px;height:52.35px;"><div class="ln" style="top:10.58px;">leroy@austinbeer</div></div><div class="c" style="left:1794.10px;top:2240.50px;width:189.90px;height:52.35px;"><div class="ln" style="top:10.58px;">LeRoy</div></div><div class="c" style="left:1985.00px;top:2240.50px;width:189.90px;height:52.35px;"><div class="ln" style="top:10.58px;">leroyaustinbeer</div></div><div class="c" style="left:2175.90px;top:2240.50px;width:189.90px;height:52.35px;"><div class="ln" style="top:10.58px;">Nellis</div></div><div class="c" style="left:2366.80px;top:2240.50px;width:189.90px;height:52.35px;"><div class="ln" style="top:10.58px;">Business Management</div></div><div class="c" style="left:2557.70px;top:2240.50px;width:189.90px;height:52.35px;"><div class="ln" style="top:10.58px;">C-Team</div></div><div class="c" style="left:2748.60px;top:2240.50px;width:189.90px;height:52.35px;"><div class="ln" style="top:10.58px;">CEO</div></div><div class="c" style="left:3321.30px;top:2240.50px;width:189.90px;height:52.35px;"><div class="rn" style="top:10.58px;">5.12E+09</div></div><div class="c" style="left:3512.20px;top:2240.50px;width:189.90px;height:52.35px;"><div class="rn" style="top:10.58px;">78701</div></div><div class="c" style="left:3703.10px;top:2240.50px;width:82.90px;height:52.35px;"><div class="ln" style="top:10.58px;">TX</div></div>
<div style="position:absolute;left:72px;top:636.5px;width:197px;height:59px;box-sizing:border-box;border:3.8px solid #217346;"></div><div style="position:absolute;left:258px;top:684.5px;width:14px;height:14px;background:#fff;"></div><div style="position:absolute;left:260px;top:687px;width:10.6px;height:10.6px;background:#217346;"></div>
</body></html>
